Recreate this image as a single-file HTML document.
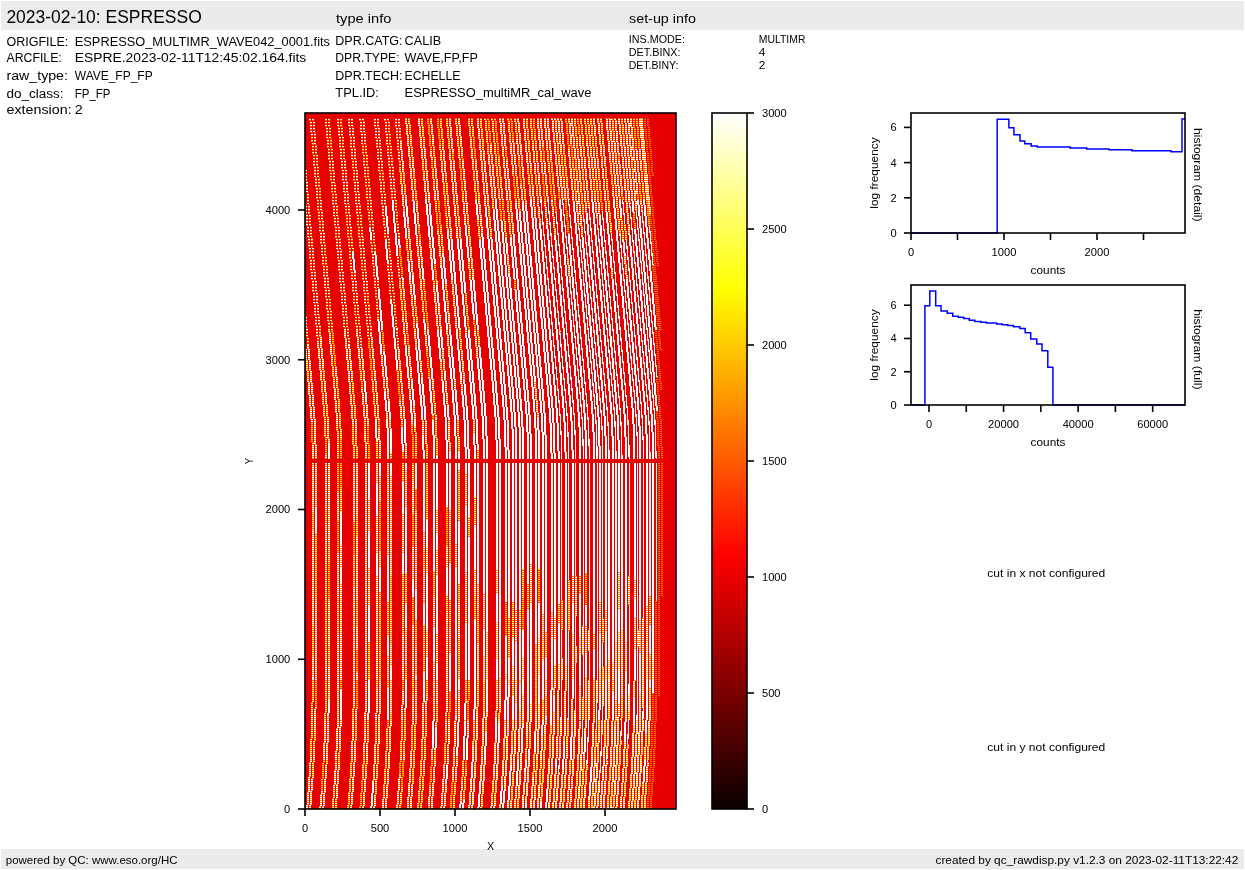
<!DOCTYPE html>
<html><head><meta charset="utf-8"><style>
html,body{margin:0;padding:0;background:#fff;}
body{width:1245px;height:870px;overflow:hidden;}
svg{display:block;will-change:transform;}
text{font-family:"Liberation Sans",sans-serif;}
</style></head><body>
<svg width="1245" height="870" viewBox="0 0 1245 870">
<rect x="0" y="0" width="1245" height="870" fill="#fff"/>
<rect x="1" y="1" width="1243" height="29" fill="#ebebeb"/>
<rect x="1" y="849" width="1243" height="20" fill="#ebebeb"/>
<text x="6.40" y="23.20" font-size="17.50" textLength="195.36" lengthAdjust="spacingAndGlyphs" fill="#000">2023-02-10: ESPRESSO</text>
<text x="336.00" y="22.60" font-size="13.12" textLength="55.34" lengthAdjust="spacingAndGlyphs" fill="#000">type info</text>
<text x="629.00" y="22.60" font-size="13.12" textLength="66.89" lengthAdjust="spacingAndGlyphs" fill="#000">set-up info</text>
<text x="6.50" y="45.90" font-size="13.12" textLength="61.85" lengthAdjust="spacingAndGlyphs" fill="#000">ORIGFILE:</text>
<text x="74.80" y="45.90" font-size="13.12" textLength="255.19" lengthAdjust="spacingAndGlyphs" fill="#000">ESPRESSO_MULTIMR_WAVE042_0001.fits</text>
<text x="6.50" y="61.70" font-size="13.12" textLength="55.29" lengthAdjust="spacingAndGlyphs" fill="#000">ARCFILE:</text>
<text x="74.80" y="61.70" font-size="13.12" textLength="231.44" lengthAdjust="spacingAndGlyphs" fill="#000">ESPRE.2023-02-11T12:45:02.164.fits</text>
<text x="6.50" y="80.10" font-size="13.12" textLength="61.41" lengthAdjust="spacingAndGlyphs" fill="#000">raw_type:</text>
<text x="74.80" y="80.10" font-size="13.12" textLength="77.83" lengthAdjust="spacingAndGlyphs" fill="#000">WAVE_FP_FP</text>
<text x="6.50" y="97.90" font-size="13.12" textLength="57.07" lengthAdjust="spacingAndGlyphs" fill="#000">do_class:</text>
<text x="74.80" y="97.90" font-size="13.12" textLength="35.70" lengthAdjust="spacingAndGlyphs" fill="#000">FP_FP</text>
<text x="6.50" y="113.80" font-size="13.12" textLength="65.15" lengthAdjust="spacingAndGlyphs" fill="#000">extension:</text>
<text x="74.80" y="113.80" font-size="13.12" textLength="7.95" lengthAdjust="spacingAndGlyphs" fill="#000">2</text>
<text x="335.30" y="44.90" font-size="13.12" textLength="67.21" lengthAdjust="spacingAndGlyphs" fill="#000">DPR.CATG:</text>
<text x="404.60" y="44.90" font-size="13.12" textLength="36.51" lengthAdjust="spacingAndGlyphs" fill="#000">CALIB</text>
<text x="335.30" y="61.60" font-size="13.12" textLength="64.29" lengthAdjust="spacingAndGlyphs" fill="#000">DPR.TYPE:</text>
<text x="404.60" y="61.60" font-size="13.12" textLength="73.28" lengthAdjust="spacingAndGlyphs" fill="#000">WAVE,FP,FP</text>
<text x="335.30" y="79.70" font-size="13.12" textLength="67.25" lengthAdjust="spacingAndGlyphs" fill="#000">DPR.TECH:</text>
<text x="404.60" y="79.70" font-size="13.12" textLength="55.75" lengthAdjust="spacingAndGlyphs" fill="#000">ECHELLE</text>
<text x="335.30" y="96.80" font-size="13.12" textLength="43.63" lengthAdjust="spacingAndGlyphs" fill="#000">TPL.ID:</text>
<text x="404.60" y="96.80" font-size="13.12" textLength="186.81" lengthAdjust="spacingAndGlyphs" fill="#000">ESPRESSO_multiMR_cal_wave</text>
<text x="628.80" y="42.80" font-size="10.94" textLength="56.11" lengthAdjust="spacingAndGlyphs" fill="#000">INS.MODE:</text>
<text x="758.80" y="42.80" font-size="10.94" textLength="46.66" lengthAdjust="spacingAndGlyphs" fill="#000">MULTIMR</text>
<text x="628.80" y="56.10" font-size="10.94" textLength="51.71" lengthAdjust="spacingAndGlyphs" fill="#000">DET.BINX:</text>
<text x="758.80" y="56.10" font-size="10.94" textLength="6.63" lengthAdjust="spacingAndGlyphs" fill="#000">4</text>
<text x="628.80" y="68.90" font-size="10.94" textLength="49.56" lengthAdjust="spacingAndGlyphs" fill="#000">DET.BINY:</text>
<text x="758.80" y="68.90" font-size="10.94" textLength="6.63" lengthAdjust="spacingAndGlyphs" fill="#000">2</text>
<text x="5.80" y="864.20" font-size="10.94" textLength="171.69" lengthAdjust="spacingAndGlyphs" fill="#000">powered by QC: www.eso.org/HC</text>
<text x="935.50" y="864.20" font-size="10.94" textLength="302.80" lengthAdjust="spacingAndGlyphs" fill="#000">created by qc_rawdisp.py v1.2.3 on 2023-02-11T13:22:42</text>
<defs><clipPath id="imclip"><rect x="305" y="113" width="371" height="696"/></clipPath></defs>
<g clip-path="url(#imclip)">
<rect x="305" y="113" width="371" height="696" fill="#e60000"/>
<defs><pattern id="dw" x="0" y="113" width="4" height="2" patternUnits="userSpaceOnUse"><rect x="0" y="0" width="4" height="1" fill="#ffffff"/><rect x="0" y="1" width="4" height="1" fill="#ff8c00"/></pattern><pattern id="dy" x="0" y="113" width="4" height="2" patternUnits="userSpaceOnUse"><rect x="0" y="0" width="4" height="1" fill="#ffff60"/><rect x="0" y="1" width="4" height="1" fill="#ff6000"/></pattern><pattern id="dr" x="0" y="113" width="4" height="2" patternUnits="userSpaceOnUse"><rect x="0" y="0" width="4" height="1" fill="#ffd000"/><rect x="0" y="1" width="4" height="1" fill="#ff4000"/></pattern><pattern id="df" x="0" y="113" width="4" height="2" patternUnits="userSpaceOnUse"><rect x="0" y="0" width="4" height="1" fill="#ff7000"/><rect x="0" y="1" width="4" height="1" fill="#ea1000"/></pattern><pattern id="tw" x="0" y="113" width="4" height="3" patternUnits="userSpaceOnUse"><rect x="0" y="0" width="4" height="1" fill="#ffffff"/><rect x="0" y="1" width="4" height="1" fill="#ff6000"/><rect x="0" y="2" width="4" height="1" fill="#f22000"/></pattern><pattern id="ty" x="0" y="113" width="4" height="3" patternUnits="userSpaceOnUse"><rect x="0" y="0" width="4" height="1" fill="#ffff70"/><rect x="0" y="1" width="4" height="1" fill="#ff5000"/><rect x="0" y="2" width="4" height="1" fill="#f01800"/></pattern><pattern id="db" x="0" y="113" width="4" height="2" patternUnits="userSpaceOnUse"><rect x="0" y="0" width="4" height="1" fill="#ffffff"/><rect x="0" y="1" width="4" height="1" fill="#ffc020"/></pattern><pattern id="dby" x="0" y="113" width="4" height="2" patternUnits="userSpaceOnUse"><rect x="0" y="0" width="4" height="1" fill="#ffff80"/><rect x="0" y="1" width="4" height="1" fill="#ff9000"/></pattern></defs>
<g shape-rendering="crispEdges">
<path d="M270.22,118.0 272.22,118.0 274.56,144.0 272.56,144.0z" fill="url(#tw)"/>
<path d="M272.56,144.0 274.56,144.0 276.00,160.0 274.00,160.0z" fill="url(#ty)"/>
<path d="M274.02,160.2 276.02,160.2 279.24,196.1 277.24,196.1z" fill="url(#tw)"/>
<path d="M277.25,196.1 279.25,196.1 279.60,200.0 277.60,200.0z" fill="url(#tw)"/>
<path d="M277.60,200.0 279.60,200.0 281.33,219.2 279.33,219.2z" fill="url(#tw)"/>
<path d="M279.33,219.2 281.33,219.2 283.20,240.0 281.20,240.0z" fill="url(#tw)"/>
<path d="M281.20,240.0 283.20,240.0 283.56,244.1 281.56,244.1z" fill="url(#ty)"/>
<path d="M281.57,244.1 283.57,244.1 285.42,264.7 283.42,264.7z" fill="url(#ty)"/>
<path d="M283.42,264.7 285.42,264.7 286.80,280.0 284.80,280.0z" fill="url(#ty)"/>
<path d="M284.80,280.0 286.80,280.0 288.09,294.3 286.09,294.3z" fill="url(#ty)"/>
<path d="M286.09,294.3 288.09,294.3 289.87,314.2 287.87,314.2z" fill="url(#tw)"/>
<path d="M287.88,314.2 289.88,314.2 291.30,330.0 289.30,330.0z" fill="url(#tw)"/>
<path d="M289.30,330.0 291.30,330.0 291.58,333.1 289.58,333.1z" fill="url(#tw)"/>
<path d="M289.58,333.1 291.58,333.1 293.96,359.5 291.96,359.5z" fill="url(#dr)"/>
<path d="M291.96,359.5 293.96,359.5 295.80,380.0 293.80,380.0z" fill="url(#dw)"/>
<path d="M293.80,380.0 295.80,380.0 296.61,389.0 294.61,389.0z" fill="url(#dw)"/>
<path d="M294.61,389.0 296.61,389.0 298.37,409.2 296.37,409.2z" fill="url(#dw)"/>
<path d="M296.37,409.2 298.37,409.2 299.10,420.0 297.10,420.0z" fill="url(#dy)"/>
<path d="M297.10,420.0 299.10,420.0 299.95,438.5 297.95,438.5z" fill="url(#dr)"/>
<path d="M297.95,438.5 299.95,438.5 300.30,460.0 298.30,460.0z" fill="url(#dy)"/>
<path d="M298.30,460.0 300.30,460.0 300.30,463.0 298.30,463.0z" fill="url(#dw)"/>
<path d="M298.30,463.0 300.30,463.0 300.30,502.0 298.30,502.0z" fill="url(#dy)"/>
<path d="M298.30,502.0 300.30,502.0 300.30,520.2 298.30,520.2z" fill="url(#dw)"/>
<path d="M298.30,520.2 300.30,520.2 300.30,559.7 298.30,559.7z" fill="url(#dw)"/>
<path d="M298.30,559.7 300.30,559.7 300.30,585.6 298.30,585.6z" fill="url(#dw)"/>
<path d="M298.30,585.6 300.30,585.6 300.30,613.7 298.30,613.7z" fill="url(#dw)"/>
<path d="M298.30,613.7 300.30,613.7 300.30,633.2 298.30,633.2z" fill="url(#dy)"/>
<path d="M298.30,633.2 300.30,633.2 300.30,666.5 298.30,666.5z" fill="url(#dw)"/>
<path d="M298.30,666.5 300.30,666.5 300.30,680.0 298.30,680.0z" fill="url(#dr)"/>
<path d="M298.30,680.0 300.30,680.0 300.28,687.0 298.28,687.0z" fill="url(#dw)"/>
<path d="M298.28,687.0 300.28,687.0 299.97,711.2 297.97,711.2z" fill="url(#dw)"/>
<path d="M297.97,711.2 299.97,711.2 299.76,720.0 297.76,720.0z" fill="url(#dw)"/>
<path d="M297.76,720.0 299.76,720.0 299.53,727.8 297.53,727.8z" fill="url(#dw)"/>
<path d="M297.52,727.8 299.52,727.8 298.54,752.0 296.54,752.0z" fill="url(#dy)"/>
<path d="M296.54,752.0 298.54,752.0 298.13,760.0 296.13,760.0z" fill="url(#dw)"/>
<path d="M296.13,760.0 298.13,760.0 296.11,791.2 294.11,791.2z" fill="url(#dw)"/>
<path d="M294.11,791.2 296.11,791.2 294.66,809.0 292.66,809.0z" fill="url(#dr)"/>
<path d="M273.22,118.0 275.22,118.0 277.56,144.0 275.56,144.0z" fill="url(#tw)"/>
<path d="M275.56,144.0 277.56,144.0 279.00,160.0 277.00,160.0z" fill="url(#tw)"/>
<path d="M277.00,160.0 279.00,160.0 279.52,165.8 277.52,165.8z" fill="url(#tw)"/>
<path d="M277.53,165.8 279.53,165.8 282.60,200.0 280.60,200.0z" fill="url(#ty)"/>
<path d="M280.60,200.0 282.60,200.0 282.86,202.9 280.86,202.9z" fill="url(#ty)"/>
<path d="M280.86,202.9 282.86,202.9 284.36,219.6 282.36,219.6z" fill="url(#tw)"/>
<path d="M282.36,219.6 284.36,219.6 286.20,240.0 284.20,240.0z" fill="url(#tw)"/>
<path d="M284.20,240.0 286.20,240.0 286.51,243.5 284.51,243.5z" fill="url(#tw)"/>
<path d="M284.52,243.5 286.52,243.5 288.81,269.0 286.81,269.0z" fill="url(#tw)"/>
<path d="M286.81,269.0 288.81,269.0 289.80,280.0 287.80,280.0z" fill="url(#ty)"/>
<path d="M287.80,280.0 289.80,280.0 290.63,289.3 288.63,289.3z" fill="url(#tw)"/>
<path d="M288.63,289.3 290.63,289.3 293.54,321.6 291.54,321.6z" fill="url(#tw)"/>
<path d="M291.54,321.6 293.54,321.6 294.30,330.0 292.30,330.0z" fill="url(#tw)"/>
<path d="M292.30,330.0 294.30,330.0 296.10,350.0 294.10,350.0z" fill="url(#dw)"/>
<path d="M294.10,350.0 296.10,350.0 298.08,372.0 296.08,372.0z" fill="url(#dr)"/>
<path d="M296.08,372.0 298.08,372.0 298.80,380.0 296.80,380.0z" fill="url(#dy)"/>
<path d="M296.80,380.0 298.80,380.0 300.41,397.9 298.41,397.9z" fill="url(#dw)"/>
<path d="M298.41,397.9 300.41,397.9 302.10,420.0 300.10,420.0z" fill="url(#dw)"/>
<path d="M300.10,420.0 302.10,420.0 302.65,430.5 300.65,430.5z" fill="url(#dw)"/>
<path d="M300.65,430.5 302.65,430.5 303.28,454.3 301.28,454.3z" fill="url(#dw)"/>
<path d="M301.28,454.3 303.28,454.3 303.30,460.0 301.30,460.0z" fill="url(#dw)"/>
<path d="M301.30,460.0 303.30,460.0 303.30,471.9 301.30,471.9z" fill="url(#dw)"/>
<path d="M301.30,471.9 303.30,471.9 303.30,499.0 301.30,499.0z" fill="url(#dw)"/>
<path d="M301.30,499.0 303.30,499.0 303.30,519.7 301.30,519.7z" fill="url(#dw)"/>
<path d="M301.30,519.7 303.30,519.7 303.30,550.6 301.30,550.6z" fill="url(#dw)"/>
<path d="M301.30,550.6 303.30,550.6 303.30,571.4 301.30,571.4z" fill="url(#dw)"/>
<path d="M301.30,571.4 303.30,571.4 303.30,590.7 301.30,590.7z" fill="url(#dr)"/>
<path d="M301.30,590.7 303.30,590.7 303.30,628.1 301.30,628.1z" fill="url(#dy)"/>
<path d="M301.30,628.1 303.30,628.1 303.30,652.0 301.30,652.0z" fill="url(#dw)"/>
<path d="M301.30,652.0 303.30,652.0 303.30,675.1 301.30,675.1z" fill="url(#dy)"/>
<path d="M301.30,675.1 303.30,675.1 303.30,680.0 301.30,680.0z" fill="url(#dw)"/>
<path d="M301.30,680.0 303.30,680.0 303.11,704.0 301.11,704.0z" fill="url(#dw)"/>
<path d="M301.10,704.0 303.10,704.0 302.76,720.0 300.76,720.0z" fill="url(#dw)"/>
<path d="M300.76,720.0 302.76,720.0 302.21,736.6 300.21,736.6z" fill="url(#dw)"/>
<path d="M300.21,736.6 302.21,736.6 301.13,760.0 299.13,760.0z" fill="url(#dw)"/>
<path d="M299.13,760.0 301.13,760.0 300.63,768.7 298.63,768.7z" fill="url(#dy)"/>
<path d="M298.63,768.7 300.63,768.7 298.10,803.9 296.10,803.9z" fill="url(#dy)"/>
<path d="M296.09,803.9 298.09,803.9 297.66,809.0 295.66,809.0z" fill="url(#dw)"/>
<path d="M283.72,118.0 285.72,118.0 288.18,145.3 286.18,145.3z" fill="url(#ty)"/>
<path d="M286.18,145.3 288.18,145.3 289.50,160.0 287.50,160.0z" fill="url(#tw)"/>
<path d="M287.50,160.0 289.50,160.0 289.71,162.4 287.71,162.4z" fill="url(#ty)"/>
<path d="M287.72,162.4 289.72,162.4 291.83,185.9 289.83,185.9z" fill="url(#tw)"/>
<path d="M289.83,185.9 291.83,185.9 293.10,200.0 291.10,200.0z" fill="url(#ty)"/>
<path d="M291.10,200.0 293.10,200.0 295.00,221.1 293.00,221.1z" fill="url(#tw)"/>
<path d="M293.00,221.1 295.00,221.1 296.70,240.0 294.70,240.0z" fill="url(#tw)"/>
<path d="M294.71,240.1 296.71,240.1 299.37,269.7 297.37,269.7z" fill="url(#tw)"/>
<path d="M297.37,269.7 299.37,269.7 300.30,280.0 298.30,280.0z" fill="url(#tw)"/>
<path d="M298.30,280.0 300.30,280.0 300.93,287.1 298.93,287.1z" fill="url(#tw)"/>
<path d="M298.94,287.1 300.94,287.1 302.61,305.7 300.61,305.7z" fill="url(#ty)"/>
<path d="M300.61,305.7 302.61,305.7 304.80,330.0 302.80,330.0z" fill="url(#tw)"/>
<path d="M302.80,330.0 304.80,330.0 306.11,344.6 304.11,344.6z" fill="url(#ty)"/>
<path d="M304.11,344.6 306.11,344.6 307.76,362.9 305.76,362.9z" fill="url(#dw)"/>
<path d="M305.76,362.9 307.76,362.9 309.30,380.0 307.30,380.0z" fill="url(#dy)"/>
<path d="M307.30,380.0 309.30,380.0 309.57,383.0 307.57,383.0z" fill="url(#dw)"/>
<path d="M307.57,383.0 309.57,383.0 312.60,420.0 310.60,420.0z" fill="url(#dw)"/>
<path d="M310.60,420.0 312.60,420.0 312.69,421.6 310.69,421.6z" fill="url(#dw)"/>
<path d="M310.69,421.6 312.69,421.6 313.63,445.0 311.63,445.0z" fill="url(#dr)"/>
<path d="M311.63,445.0 313.63,445.0 313.80,460.0 311.80,460.0z" fill="url(#dw)"/>
<path d="M311.80,460.0 313.80,460.0 313.80,466.2 311.80,466.2z" fill="url(#dy)"/>
<path d="M311.80,466.2 313.80,466.2 313.80,484.5 311.80,484.5z" fill="url(#dw)"/>
<path d="M311.80,484.5 313.80,484.5 313.80,512.5 311.80,512.5z" fill="url(#dw)"/>
<path d="M311.80,512.5 313.80,512.5 313.80,529.9 311.80,529.9z" fill="url(#dy)"/>
<path d="M311.80,529.9 313.80,529.9 313.80,551.2 311.80,551.2z" fill="url(#dw)"/>
<path d="M311.80,551.2 313.80,551.2 313.80,572.5 311.80,572.5z" fill="url(#dw)"/>
<path d="M311.80,572.5 313.80,572.5 313.80,606.4 311.80,606.4z" fill="url(#dw)"/>
<path d="M311.80,606.4 313.80,606.4 313.80,626.3 311.80,626.3z" fill="url(#dw)"/>
<path d="M311.80,626.3 313.80,626.3 313.80,656.4 311.80,656.4z" fill="url(#dy)"/>
<path d="M311.80,656.4 313.80,656.4 313.80,678.2 311.80,678.2z" fill="url(#dw)"/>
<path d="M311.80,678.2 313.80,678.2 313.80,680.0 311.80,680.0z" fill="#ffffff"/>
<path d="M311.80,680.0 313.80,680.0 313.31,718.1 311.31,718.1z" fill="url(#dy)"/>
<path d="M311.31,718.1 313.31,718.1 313.26,720.0 311.26,720.0z" fill="url(#dw)"/>
<path d="M311.26,720.0 313.26,720.0 311.75,757.9 309.75,757.9z" fill="url(#dy)"/>
<path d="M309.74,757.9 311.74,757.9 311.63,760.0 309.63,760.0z" fill="url(#dw)"/>
<path d="M309.63,760.0 311.63,760.0 309.24,796.0 307.24,796.0z" fill="url(#dw)"/>
<path d="M307.23,796.0 309.23,796.0 308.16,809.0 306.16,809.0z" fill="url(#dw)"/>
<path d="M286.72,118.0 288.72,118.0 291.56,149.5 289.56,149.5z" fill="url(#tw)"/>
<path d="M289.56,149.5 291.56,149.5 292.50,160.0 290.50,160.0z" fill="url(#tw)"/>
<path d="M290.50,160.0 292.50,160.0 294.57,183.0 292.57,183.0z" fill="url(#tw)"/>
<path d="M292.57,183.0 294.57,183.0 296.10,200.0 294.10,200.0z" fill="url(#ty)"/>
<path d="M294.10,200.0 296.10,200.0 297.76,218.4 295.76,218.4z" fill="url(#tw)"/>
<path d="M295.76,218.4 297.76,218.4 299.70,240.0 297.70,240.0z" fill="url(#tw)"/>
<path d="M297.70,240.0 299.70,240.0 300.43,248.1 298.43,248.1z" fill="url(#tw)"/>
<path d="M298.43,248.1 300.43,248.1 303.30,280.0 301.30,280.0z" fill="url(#tw)"/>
<path d="M301.30,280.0 303.30,280.0 304.01,287.9 302.01,287.9z" fill="url(#tw)"/>
<path d="M302.01,287.9 304.01,287.9 306.53,315.9 304.53,315.9z" fill="url(#ty)"/>
<path d="M304.54,315.9 306.54,315.9 307.80,330.0 305.80,330.0z" fill="url(#tw)"/>
<path d="M305.80,330.0 307.80,330.0 309.13,344.8 307.13,344.8z" fill="url(#ty)"/>
<path d="M307.14,344.8 309.14,344.8 312.00,376.6 310.00,376.6z" fill="url(#dw)"/>
<path d="M310.00,376.6 312.00,376.6 312.30,380.0 310.30,380.0z" fill="url(#dw)"/>
<path d="M310.30,380.0 312.30,380.0 315.34,415.9 313.34,415.9z" fill="url(#dw)"/>
<path d="M313.35,415.9 315.35,415.9 315.60,420.0 313.60,420.0z" fill="url(#dw)"/>
<path d="M313.60,420.0 315.60,420.0 316.71,448.8 314.71,448.8z" fill="url(#dw)"/>
<path d="M314.71,448.8 316.71,448.8 316.80,460.0 314.80,460.0z" fill="url(#dw)"/>
<path d="M314.80,460.0 316.80,460.0 316.80,486.8 314.80,486.8z" fill="url(#dw)"/>
<path d="M314.80,486.8 316.80,486.8 316.80,506.6 314.80,506.6z" fill="url(#dw)"/>
<path d="M314.80,506.6 316.80,506.6 316.80,532.7 314.80,532.7z" fill="#ffffff"/>
<path d="M314.80,532.7 316.80,532.7 316.80,565.6 314.80,565.6z" fill="url(#dy)"/>
<path d="M314.80,565.6 316.80,565.6 316.80,599.2 314.80,599.2z" fill="url(#dy)"/>
<path d="M314.80,599.2 316.80,599.2 316.80,635.1 314.80,635.1z" fill="url(#dw)"/>
<path d="M314.80,635.1 316.80,635.1 316.80,657.5 314.80,657.5z" fill="url(#dw)"/>
<path d="M314.80,657.5 316.80,657.5 316.80,680.0 314.80,680.0z" fill="url(#dw)"/>
<path d="M314.80,680.0 316.80,680.0 316.80,681.1 314.80,681.1z" fill="url(#dy)"/>
<path d="M314.80,681.1 316.80,681.1 316.55,707.0 314.55,707.0z" fill="url(#dr)"/>
<path d="M314.55,707.0 316.55,707.0 316.26,720.0 314.26,720.0z" fill="url(#dw)"/>
<path d="M314.26,720.0 316.26,720.0 315.87,732.4 313.87,732.4z" fill="url(#dw)"/>
<path d="M313.87,732.4 315.87,732.4 315.11,750.6 313.11,750.6z" fill="url(#dy)"/>
<path d="M313.11,750.6 315.11,750.6 314.63,760.0 312.63,760.0z" fill="url(#dw)"/>
<path d="M312.63,760.0 314.63,760.0 313.68,776.0 311.68,776.0z" fill="url(#dy)"/>
<path d="M311.68,776.0 313.68,776.0 311.30,807.4 309.30,807.4z" fill="url(#dw)"/>
<path d="M309.30,807.4 311.30,807.4 311.16,809.0 309.16,809.0z" fill="url(#dw)"/>
<path d="M296.82,118.0 298.82,118.0 302.10,154.5 300.10,154.5z" fill="url(#tw)"/>
<path d="M300.10,154.5 302.10,154.5 302.60,160.0 300.60,160.0z" fill="url(#tw)"/>
<path d="M300.60,160.0 302.60,160.0 305.54,192.7 303.54,192.7z" fill="url(#tw)"/>
<path d="M303.54,192.7 305.54,192.7 306.20,200.0 304.20,200.0z" fill="url(#tw)"/>
<path d="M304.20,200.0 306.20,200.0 307.08,209.8 305.08,209.8z" fill="url(#tw)"/>
<path d="M305.09,209.8 307.09,209.8 309.80,240.0 307.80,240.0z" fill="url(#tw)"/>
<path d="M307.80,240.0 309.80,240.0 310.55,248.3 308.55,248.3z" fill="url(#ty)"/>
<path d="M308.55,248.3 310.55,248.3 313.40,280.0 311.40,280.0z" fill="url(#tw)"/>
<path d="M311.40,280.0 313.40,280.0 313.96,286.2 311.96,286.2z" fill="url(#tw)"/>
<path d="M311.96,286.2 313.96,286.2 317.11,321.2 315.11,321.2z" fill="url(#tw)"/>
<path d="M315.11,321.2 317.11,321.2 317.90,330.0 315.90,330.0z" fill="url(#tw)"/>
<path d="M315.90,330.0 317.90,330.0 319.05,342.8 317.05,342.8z" fill="url(#tw)"/>
<path d="M317.06,342.8 319.06,342.8 322.40,380.0 320.40,380.0z" fill="url(#dw)"/>
<path d="M320.40,380.0 322.40,380.0 322.58,382.1 320.58,382.1z" fill="url(#dy)"/>
<path d="M320.59,382.1 322.59,382.1 325.54,417.5 323.54,417.5z" fill="url(#dy)"/>
<path d="M323.54,417.5 325.54,417.5 325.70,420.0 323.70,420.0z" fill="url(#dy)"/>
<path d="M323.70,420.0 325.70,420.0 326.50,436.8 324.50,436.8z" fill="url(#dy)"/>
<path d="M324.50,436.8 326.50,436.8 326.87,453.7 324.87,453.7z" fill="url(#dr)"/>
<path d="M324.87,453.7 326.87,453.7 326.90,460.0 324.90,460.0z" fill="url(#dw)"/>
<path d="M324.90,460.0 326.90,460.0 326.90,478.7 324.90,478.7z" fill="url(#dw)"/>
<path d="M324.90,478.7 326.90,478.7 326.90,508.6 324.90,508.6z" fill="url(#dw)"/>
<path d="M324.90,508.6 326.90,508.6 326.90,525.2 324.90,525.2z" fill="url(#dy)"/>
<path d="M324.90,525.2 326.90,525.2 326.90,564.1 324.90,564.1z" fill="url(#dw)"/>
<path d="M324.90,564.1 326.90,564.1 326.90,596.3 324.90,596.3z" fill="url(#dy)"/>
<path d="M324.90,596.3 326.90,596.3 326.90,624.7 324.90,624.7z" fill="url(#dy)"/>
<path d="M324.90,624.7 326.90,624.7 326.90,652.5 324.90,652.5z" fill="url(#dy)"/>
<path d="M324.90,652.5 326.90,652.5 326.90,671.0 324.90,671.0z" fill="url(#dw)"/>
<path d="M324.90,671.0 326.90,671.0 326.90,680.0 324.90,680.0z" fill="url(#dw)"/>
<path d="M324.90,680.0 326.90,680.0 326.69,705.0 324.69,705.0z" fill="url(#dy)"/>
<path d="M324.69,705.0 326.69,705.0 326.36,720.0 324.36,720.0z" fill="url(#dy)"/>
<path d="M324.36,720.0 326.36,720.0 325.73,738.8 323.73,738.8z" fill="url(#dw)"/>
<path d="M323.73,738.8 325.73,738.8 324.98,755.3 322.98,755.3z" fill="url(#dw)"/>
<path d="M322.98,755.3 324.98,755.3 324.73,760.0 322.73,760.0z" fill="url(#dw)"/>
<path d="M322.73,760.0 324.73,760.0 322.75,790.7 320.75,790.7z" fill="url(#dr)"/>
<path d="M320.75,790.7 322.75,790.7 321.26,809.0 319.26,809.0z" fill="url(#dw)"/>
<path d="M299.82,118.0 301.82,118.0 305.30,156.7 303.30,156.7z" fill="url(#tw)"/>
<path d="M303.30,156.7 305.30,156.7 305.60,160.0 303.60,160.0z" fill="url(#tw)"/>
<path d="M303.60,160.0 305.60,160.0 308.46,191.8 306.46,191.8z" fill="url(#tw)"/>
<path d="M306.46,191.8 308.46,191.8 309.20,200.0 307.20,200.0z" fill="url(#ty)"/>
<path d="M307.20,200.0 309.20,200.0 311.65,227.3 309.65,227.3z" fill="url(#tw)"/>
<path d="M309.66,227.3 311.66,227.3 312.80,240.0 310.80,240.0z" fill="url(#tw)"/>
<path d="M310.80,240.0 312.80,240.0 314.83,262.6 312.83,262.6z" fill="url(#tw)"/>
<path d="M312.83,262.6 314.83,262.6 316.40,280.0 314.40,280.0z" fill="url(#tw)"/>
<path d="M314.40,280.0 316.40,280.0 316.72,283.6 314.72,283.6z" fill="url(#tw)"/>
<path d="M314.72,283.6 316.72,283.6 318.45,302.8 316.45,302.8z" fill="url(#tw)"/>
<path d="M316.45,302.8 318.45,302.8 320.90,330.0 318.90,330.0z" fill="url(#tw)"/>
<path d="M318.90,330.0 320.90,330.0 321.27,334.2 319.27,334.2z" fill="url(#tw)"/>
<path d="M319.28,334.2 321.28,334.2 324.50,370.0 322.50,370.0z" fill="url(#dw)"/>
<path d="M322.50,370.0 324.50,370.0 325.40,380.0 323.40,380.0z" fill="url(#dy)"/>
<path d="M323.40,380.0 325.40,380.0 326.16,388.5 324.16,388.5z" fill="url(#dw)"/>
<path d="M324.16,388.5 326.16,388.5 327.62,404.8 325.62,404.8z" fill="url(#dw)"/>
<path d="M325.62,404.8 327.62,404.8 328.70,420.0 326.70,420.0z" fill="url(#dy)"/>
<path d="M326.70,420.0 328.70,420.0 329.70,443.6 327.70,443.6z" fill="url(#dw)"/>
<path d="M327.70,443.6 329.70,443.6 329.90,460.0 327.90,460.0z" fill="#ffffff"/>
<path d="M327.90,460.0 329.90,460.0 329.90,481.4 327.90,481.4z" fill="url(#dw)"/>
<path d="M327.90,481.4 329.90,481.4 329.90,503.7 327.90,503.7z" fill="url(#dw)"/>
<path d="M327.90,503.7 329.90,503.7 329.90,539.6 327.90,539.6z" fill="url(#dw)"/>
<path d="M327.90,539.6 329.90,539.6 329.90,562.7 327.90,562.7z" fill="url(#dy)"/>
<path d="M327.90,562.7 329.90,562.7 329.90,598.9 327.90,598.9z" fill="url(#dr)"/>
<path d="M327.90,598.9 329.90,598.9 329.90,615.2 327.90,615.2z" fill="url(#dw)"/>
<path d="M327.90,615.2 329.90,615.2 329.90,645.8 327.90,645.8z" fill="url(#dw)"/>
<path d="M327.90,645.8 329.90,645.8 329.90,667.2 327.90,667.2z" fill="url(#dy)"/>
<path d="M327.90,667.2 329.90,667.2 329.90,680.0 327.90,680.0z" fill="url(#dw)"/>
<path d="M327.90,680.0 329.90,680.0 329.78,698.5 327.78,698.5z" fill="url(#dw)"/>
<path d="M327.78,698.5 329.78,698.5 329.48,715.1 327.48,715.1z" fill="#ffffff"/>
<path d="M327.48,715.1 329.48,715.1 329.36,720.0 327.36,720.0z" fill="url(#dw)"/>
<path d="M327.36,720.0 329.36,720.0 328.39,746.6 326.39,746.6z" fill="url(#dw)"/>
<path d="M326.39,746.6 328.39,746.6 327.73,760.0 325.73,760.0z" fill="url(#dw)"/>
<path d="M325.73,760.0 327.73,760.0 327.45,765.0 325.45,765.0z" fill="url(#dy)"/>
<path d="M325.45,765.0 327.45,765.0 325.67,791.7 323.67,791.7z" fill="url(#dw)"/>
<path d="M323.67,791.7 325.67,791.7 324.26,809.0 322.26,809.0z" fill="url(#dw)"/>
<path d="M309.22,118.0 311.22,118.0 312.83,135.9 310.83,135.9z" fill="url(#tw)"/>
<path d="M310.83,135.9 312.83,135.9 315.00,160.0 313.00,160.0z" fill="url(#ty)"/>
<path d="M313.00,160.0 315.00,160.0 315.96,170.7 313.96,170.7z" fill="url(#tw)"/>
<path d="M313.96,170.7 315.96,170.7 318.46,198.4 316.46,198.4z" fill="url(#tw)"/>
<path d="M316.46,198.4 318.46,198.4 318.60,200.0 316.60,200.0z" fill="url(#tw)"/>
<path d="M316.60,200.0 318.60,200.0 321.48,232.0 319.48,232.0z" fill="url(#ty)"/>
<path d="M319.48,232.0 321.48,232.0 322.20,240.0 320.20,240.0z" fill="url(#tw)"/>
<path d="M320.20,240.0 322.20,240.0 324.15,261.7 322.15,261.7z" fill="url(#tw)"/>
<path d="M322.16,261.7 324.16,261.7 325.79,279.9 323.79,279.9z" fill="url(#tw)"/>
<path d="M323.80,280.0 325.80,280.0 327.81,302.3 325.81,302.3z" fill="url(#tw)"/>
<path d="M325.81,302.3 327.81,302.3 329.94,326.0 327.94,326.0z" fill="url(#tw)"/>
<path d="M327.94,326.0 329.94,326.0 330.30,330.0 328.30,330.0z" fill="url(#ty)"/>
<path d="M328.30,330.0 330.30,330.0 333.07,360.8 331.07,360.8z" fill="url(#dw)"/>
<path d="M331.07,360.8 333.07,360.8 334.80,380.0 332.80,380.0z" fill="url(#dy)"/>
<path d="M332.80,380.0 334.80,380.0 335.26,385.1 333.26,385.1z" fill="url(#dy)"/>
<path d="M333.26,385.1 335.26,385.1 338.10,420.0 336.10,420.0z" fill="url(#dw)"/>
<path d="M336.10,420.0 338.10,420.0 338.34,424.3 336.34,424.3z" fill="url(#dw)"/>
<path d="M336.34,424.3 338.34,424.3 339.30,459.4 337.30,459.4z" fill="url(#dy)"/>
<path d="M337.30,459.4 339.30,459.4 339.30,460.0 337.30,460.0z" fill="url(#dr)"/>
<path d="M337.30,460.0 339.30,460.0 339.30,492.0 337.30,492.0z" fill="url(#dr)"/>
<path d="M337.30,492.0 339.30,492.0 339.30,520.7 337.30,520.7z" fill="url(#dw)"/>
<path d="M337.30,520.7 339.30,520.7 339.30,553.4 337.30,553.4z" fill="url(#dr)"/>
<path d="M337.30,553.4 339.30,553.4 339.30,577.5 337.30,577.5z" fill="url(#dw)"/>
<path d="M337.30,577.5 339.30,577.5 339.30,595.9 337.30,595.9z" fill="url(#dw)"/>
<path d="M337.30,595.9 339.30,595.9 339.30,632.5 337.30,632.5z" fill="url(#dy)"/>
<path d="M337.30,632.5 339.30,632.5 339.30,659.6 337.30,659.6z" fill="url(#dw)"/>
<path d="M337.30,659.6 339.30,659.6 339.30,680.0 337.30,680.0z" fill="url(#dw)"/>
<path d="M337.30,680.0 339.30,680.0 339.18,698.6 337.18,698.6z" fill="url(#dw)"/>
<path d="M337.18,698.6 339.18,698.6 338.76,720.0 336.76,720.0z" fill="url(#dw)"/>
<path d="M336.76,720.0 338.76,720.0 338.38,732.1 336.38,732.1z" fill="url(#dw)"/>
<path d="M336.38,732.1 338.38,732.1 337.13,760.0 335.13,760.0z" fill="url(#dw)"/>
<path d="M335.13,760.0 337.13,760.0 337.02,761.9 335.02,761.9z" fill="url(#dr)"/>
<path d="M335.02,761.9 337.02,761.9 335.33,788.2 333.33,788.2z" fill="url(#dw)"/>
<path d="M333.33,788.2 335.33,788.2 333.66,809.0 331.66,809.0z" fill="url(#dy)"/>
<path d="M312.22,118.0 314.22,118.0 316.75,146.2 314.75,146.2z" fill="url(#tw)"/>
<path d="M314.75,146.2 316.75,146.2 318.00,160.0 316.00,160.0z" fill="url(#tw)"/>
<path d="M316.00,160.0 318.00,160.0 319.42,175.8 317.42,175.8z" fill="url(#ty)"/>
<path d="M317.42,175.8 319.42,175.8 321.60,200.0 319.60,200.0z" fill="url(#ty)"/>
<path d="M319.60,200.0 321.60,200.0 322.51,210.1 320.51,210.1z" fill="url(#tw)"/>
<path d="M320.51,210.1 322.51,210.1 325.20,240.0 323.20,240.0z" fill="url(#tw)"/>
<path d="M323.20,240.0 325.20,240.0 325.57,244.1 323.57,244.1z" fill="url(#tw)"/>
<path d="M323.57,244.1 325.57,244.1 327.58,266.5 325.58,266.5z" fill="url(#ty)"/>
<path d="M325.59,266.5 327.59,266.5 328.80,280.0 326.80,280.0z" fill="url(#tw)"/>
<path d="M326.80,280.0 328.80,280.0 330.08,294.2 328.08,294.2z" fill="url(#tw)"/>
<path d="M328.08,294.2 330.08,294.2 333.27,329.6 331.27,329.6z" fill="url(#ty)"/>
<path d="M331.30,330.0 333.30,330.0 336.61,366.8 334.61,366.8z" fill="url(#dr)"/>
<path d="M334.62,366.8 336.62,366.8 337.80,380.0 335.80,380.0z" fill="url(#dw)"/>
<path d="M335.80,380.0 337.80,380.0 339.92,403.6 337.92,403.6z" fill="url(#dy)"/>
<path d="M337.92,403.6 339.92,403.6 341.10,420.0 339.10,420.0z" fill="url(#dy)"/>
<path d="M339.10,420.0 341.10,420.0 341.96,438.8 339.96,438.8z" fill="url(#dy)"/>
<path d="M339.96,438.8 341.96,438.8 342.30,460.0 340.30,460.0z" fill="url(#dr)"/>
<path d="M340.30,460.0 342.30,460.0 342.30,470.6 340.30,470.6z" fill="url(#dr)"/>
<path d="M340.30,470.6 342.30,470.6 342.30,487.2 340.30,487.2z" fill="url(#dr)"/>
<path d="M340.30,487.2 342.30,487.2 342.30,512.0 340.30,512.0z" fill="url(#dy)"/>
<path d="M340.30,512.0 342.30,512.0 342.30,545.0 340.30,545.0z" fill="#ffffff"/>
<path d="M340.30,545.0 342.30,545.0 342.30,566.9 340.30,566.9z" fill="url(#dw)"/>
<path d="M340.30,566.9 342.30,566.9 342.30,584.4 340.30,584.4z" fill="#ffffff"/>
<path d="M340.30,584.4 342.30,584.4 342.30,614.6 340.30,614.6z" fill="url(#dw)"/>
<path d="M340.30,614.6 342.30,614.6 342.30,649.1 340.30,649.1z" fill="url(#dw)"/>
<path d="M340.30,649.1 342.30,649.1 342.30,680.0 340.30,680.0z" fill="url(#dw)"/>
<path d="M340.30,680.0 342.30,680.0 342.27,689.0 340.27,689.0z" fill="url(#dr)"/>
<path d="M340.27,689.0 342.27,689.0 341.76,720.0 339.76,720.0z" fill="#ffffff"/>
<path d="M339.76,720.0 341.76,720.0 341.69,722.5 339.69,722.5z" fill="url(#dw)"/>
<path d="M339.69,722.5 341.69,722.5 340.68,749.2 338.68,749.2z" fill="url(#dw)"/>
<path d="M338.67,749.2 340.67,749.2 340.13,760.0 338.13,760.0z" fill="url(#dy)"/>
<path d="M338.13,760.0 340.13,760.0 339.79,766.0 337.79,766.0z" fill="url(#dy)"/>
<path d="M337.79,766.0 339.79,766.0 337.55,798.3 335.55,798.3z" fill="url(#dw)"/>
<path d="M335.55,798.3 337.55,798.3 336.66,809.0 334.66,809.0z" fill="url(#dy)"/>
<path d="M324.72,118.0 326.72,118.0 328.40,136.6 326.40,136.6z" fill="url(#tw)"/>
<path d="M326.40,136.6 328.40,136.6 330.50,160.0 328.50,160.0z" fill="url(#tw)"/>
<path d="M328.50,160.0 330.50,160.0 331.06,166.2 329.06,166.2z" fill="url(#tw)"/>
<path d="M329.06,166.2 331.06,166.2 333.41,192.3 331.41,192.3z" fill="url(#ty)"/>
<path d="M331.41,192.3 333.41,192.3 334.10,200.0 332.10,200.0z" fill="url(#ty)"/>
<path d="M332.10,200.0 334.10,200.0 336.31,224.5 334.31,224.5z" fill="url(#tw)"/>
<path d="M334.31,224.5 336.31,224.5 337.70,240.0 335.70,240.0z" fill="url(#ty)"/>
<path d="M335.70,240.0 337.70,240.0 339.60,261.1 337.60,261.1z" fill="url(#tw)"/>
<path d="M337.60,261.1 339.60,261.1 341.30,280.0 339.30,280.0z" fill="url(#tw)"/>
<path d="M339.30,280.0 341.30,280.0 342.25,290.5 340.25,290.5z" fill="url(#tw)"/>
<path d="M340.25,290.5 342.25,290.5 345.70,328.9 343.70,328.9z" fill="url(#tw)"/>
<path d="M343.70,328.9 345.70,328.9 345.80,330.0 343.80,330.0z" fill="url(#tw)"/>
<path d="M343.80,330.0 345.80,330.0 349.08,366.4 347.08,366.4z" fill="url(#dw)"/>
<path d="M347.08,366.4 349.08,366.4 350.30,380.0 348.30,380.0z" fill="url(#dw)"/>
<path d="M348.30,380.0 350.30,380.0 350.87,386.3 348.87,386.3z" fill="url(#dw)"/>
<path d="M348.87,386.3 350.87,386.3 352.42,403.7 350.42,403.7z" fill="url(#dw)"/>
<path d="M350.42,403.7 352.42,403.7 353.60,420.0 351.60,420.0z" fill="url(#dw)"/>
<path d="M351.60,420.0 353.60,420.0 353.85,424.5 351.85,424.5z" fill="url(#dw)"/>
<path d="M351.85,424.5 353.85,424.5 354.76,452.6 352.76,452.6z" fill="url(#dy)"/>
<path d="M352.76,452.6 354.76,452.6 354.80,460.0 352.80,460.0z" fill="url(#dy)"/>
<path d="M352.80,460.0 354.80,460.0 354.80,485.3 352.80,485.3z" fill="url(#dw)"/>
<path d="M352.80,485.3 354.80,485.3 354.80,521.8 352.80,521.8z" fill="url(#dw)"/>
<path d="M352.80,521.8 354.80,521.8 354.80,555.4 352.80,555.4z" fill="url(#dr)"/>
<path d="M352.80,555.4 354.80,555.4 354.80,587.1 352.80,587.1z" fill="url(#dy)"/>
<path d="M352.80,587.1 354.80,587.1 354.80,617.5 352.80,617.5z" fill="url(#dw)"/>
<path d="M352.80,617.5 354.80,617.5 354.80,649.2 352.80,649.2z" fill="url(#dw)"/>
<path d="M352.80,649.2 354.80,649.2 354.80,674.8 352.80,674.8z" fill="url(#dw)"/>
<path d="M352.80,674.8 354.80,674.8 354.80,680.0 352.80,680.0z" fill="url(#dw)"/>
<path d="M352.80,680.0 354.80,680.0 354.56,706.7 352.56,706.7z" fill="url(#dw)"/>
<path d="M352.56,706.7 354.56,706.7 354.26,720.0 352.26,720.0z" fill="url(#dy)"/>
<path d="M352.26,720.0 354.26,720.0 353.46,742.8 351.46,742.8z" fill="url(#dw)"/>
<path d="M351.46,742.8 353.46,742.8 352.63,760.0 350.63,760.0z" fill="url(#dw)"/>
<path d="M350.63,760.0 352.63,760.0 351.45,779.3 349.45,779.3z" fill="url(#dy)"/>
<path d="M349.45,779.3 351.45,779.3 349.16,809.0 347.16,809.0z" fill="url(#dy)"/>
<path d="M327.72,118.0 329.72,118.0 331.16,134.0 329.16,134.0z" fill="url(#ty)"/>
<path d="M329.16,134.0 331.16,134.0 333.50,160.0 331.50,160.0z" fill="url(#ty)"/>
<path d="M331.50,160.0 333.50,160.0 334.09,166.5 332.09,166.5z" fill="url(#tw)"/>
<path d="M332.09,166.5 334.09,166.5 336.06,188.5 334.06,188.5z" fill="url(#tw)"/>
<path d="M334.06,188.5 336.06,188.5 337.10,200.0 335.10,200.0z" fill="url(#ty)"/>
<path d="M335.10,200.0 337.10,200.0 338.89,219.9 336.89,219.9z" fill="url(#ty)"/>
<path d="M336.90,219.9 338.90,219.9 340.70,240.0 338.70,240.0z" fill="url(#tw)"/>
<path d="M338.70,240.0 340.70,240.0 341.98,254.2 339.98,254.2z" fill="url(#tw)"/>
<path d="M339.98,254.2 341.98,254.2 344.30,280.0 342.30,280.0z" fill="url(#tw)"/>
<path d="M342.30,280.0 344.30,280.0 344.83,285.9 342.83,285.9z" fill="url(#tw)"/>
<path d="M342.83,285.9 344.83,285.9 346.43,303.7 344.43,303.7z" fill="url(#tw)"/>
<path d="M344.43,303.7 346.43,303.7 347.91,320.2 345.91,320.2z" fill="url(#tw)"/>
<path d="M345.92,320.2 347.92,320.2 348.80,330.0 346.80,330.0z" fill="url(#ty)"/>
<path d="M346.80,330.0 348.80,330.0 350.18,345.4 348.18,345.4z" fill="url(#tw)"/>
<path d="M348.18,345.4 350.18,345.4 353.30,380.0 351.30,380.0z" fill="url(#dw)"/>
<path d="M351.30,380.0 353.30,380.0 353.58,383.1 351.58,383.1z" fill="url(#dy)"/>
<path d="M351.58,383.1 353.58,383.1 355.94,410.3 353.94,410.3z" fill="url(#dy)"/>
<path d="M353.95,410.3 355.95,410.3 356.60,420.0 354.60,420.0z" fill="url(#dy)"/>
<path d="M354.60,420.0 356.60,420.0 357.24,432.6 355.24,432.6z" fill="url(#dw)"/>
<path d="M355.24,432.6 357.24,432.6 357.80,459.9 355.80,459.9z" fill="url(#dy)"/>
<path d="M355.80,460.0 357.80,460.0 357.80,495.6 355.80,495.6z" fill="url(#dw)"/>
<path d="M355.80,495.6 357.80,495.6 357.80,516.5 355.80,516.5z" fill="url(#dw)"/>
<path d="M355.80,516.5 357.80,516.5 357.80,535.5 355.80,535.5z" fill="url(#dy)"/>
<path d="M355.80,535.5 357.80,535.5 357.80,573.5 355.80,573.5z" fill="url(#dw)"/>
<path d="M355.80,573.5 357.80,573.5 357.80,599.7 355.80,599.7z" fill="url(#dw)"/>
<path d="M355.80,599.7 357.80,599.7 357.80,626.4 355.80,626.4z" fill="url(#dy)"/>
<path d="M355.80,626.4 357.80,626.4 357.80,649.8 355.80,649.8z" fill="url(#dw)"/>
<path d="M355.80,649.8 357.80,649.8 357.80,671.7 355.80,671.7z" fill="url(#dr)"/>
<path d="M355.80,671.7 357.80,671.7 357.80,680.0 355.80,680.0z" fill="url(#dw)"/>
<path d="M355.80,680.0 357.80,680.0 357.53,708.4 355.53,708.4z" fill="url(#dr)"/>
<path d="M355.53,708.4 357.53,708.4 357.26,720.0 355.26,720.0z" fill="url(#dw)"/>
<path d="M355.26,720.0 357.26,720.0 356.43,743.6 354.43,743.6z" fill="url(#dy)"/>
<path d="M354.43,743.6 356.43,743.6 355.63,760.0 353.63,760.0z" fill="url(#dw)"/>
<path d="M353.63,760.0 355.63,760.0 355.31,765.7 353.31,765.7z" fill="url(#dw)"/>
<path d="M353.31,765.7 355.31,765.7 352.99,799.1 350.99,799.1z" fill="url(#dw)"/>
<path d="M350.99,799.1 352.99,799.1 352.16,809.0 350.16,809.0z" fill="url(#dw)"/>
<path d="M336.82,118.0 338.82,118.0 341.26,145.1 339.26,145.1z" fill="url(#tw)"/>
<path d="M339.26,145.1 341.26,145.1 342.60,160.0 340.60,160.0z" fill="url(#tw)"/>
<path d="M340.60,160.0 342.60,160.0 344.53,181.4 342.53,181.4z" fill="url(#tw)"/>
<path d="M342.53,181.4 344.53,181.4 346.20,200.0 344.20,200.0z" fill="url(#tw)"/>
<path d="M344.20,200.0 346.20,200.0 346.99,208.8 344.99,208.8z" fill="url(#tw)"/>
<path d="M344.99,208.8 346.99,208.8 348.71,227.9 346.71,227.9z" fill="url(#ty)"/>
<path d="M346.71,227.9 348.71,227.9 349.80,240.0 347.80,240.0z" fill="url(#ty)"/>
<path d="M347.80,240.0 349.80,240.0 351.94,263.8 349.94,263.8z" fill="url(#ty)"/>
<path d="M349.94,263.8 351.94,263.8 353.40,280.0 351.40,280.0z" fill="url(#ty)"/>
<path d="M351.40,280.0 353.40,280.0 354.84,296.0 352.84,296.0z" fill="url(#tw)"/>
<path d="M352.84,296.0 354.84,296.0 357.45,325.1 355.45,325.1z" fill="url(#ty)"/>
<path d="M355.46,325.1 357.46,325.1 357.90,330.0 355.90,330.0z" fill="url(#tw)"/>
<path d="M355.90,330.0 357.90,330.0 360.83,362.6 358.83,362.6z" fill="url(#dw)"/>
<path d="M358.84,362.6 360.84,362.6 362.40,380.0 360.40,380.0z" fill="url(#dy)"/>
<path d="M360.40,380.0 362.40,380.0 363.15,388.4 361.15,388.4z" fill="url(#dr)"/>
<path d="M361.15,388.4 363.15,388.4 365.29,413.6 363.29,413.6z" fill="url(#dw)"/>
<path d="M363.29,413.6 365.29,413.6 365.70,420.0 363.70,420.0z" fill="url(#dw)"/>
<path d="M363.70,420.0 365.70,420.0 366.27,431.0 364.27,431.0z" fill="url(#dy)"/>
<path d="M364.27,431.0 366.27,431.0 366.90,460.0 364.90,460.0z" fill="url(#dw)"/>
<path d="M364.90,460.0 366.90,460.0 366.90,463.6 364.90,463.6z" fill="#ffffff"/>
<path d="M364.90,463.6 366.90,463.6 366.90,494.6 364.90,494.6z" fill="url(#dw)"/>
<path d="M364.90,494.6 366.90,494.6 366.90,533.3 364.90,533.3z" fill="url(#dw)"/>
<path d="M364.90,533.3 366.90,533.3 366.90,549.5 364.90,549.5z" fill="url(#dw)"/>
<path d="M364.90,549.5 366.90,549.5 366.90,575.4 364.90,575.4z" fill="url(#dw)"/>
<path d="M364.90,575.4 366.90,575.4 366.90,601.9 364.90,601.9z" fill="url(#dw)"/>
<path d="M364.90,601.9 366.90,601.9 366.90,627.9 364.90,627.9z" fill="url(#dw)"/>
<path d="M364.90,627.9 366.90,627.9 366.90,644.9 364.90,644.9z" fill="url(#dw)"/>
<path d="M364.90,644.9 366.90,644.9 366.90,680.0 364.90,680.0z" fill="url(#dw)"/>
<path d="M364.90,680.5 366.90,680.5 366.80,697.5 364.80,697.5z" fill="url(#dw)"/>
<path d="M364.80,697.5 366.80,697.5 366.36,720.0 364.36,720.0z" fill="url(#dw)"/>
<path d="M364.36,720.0 366.36,720.0 366.09,728.9 364.09,728.9z" fill="url(#dy)"/>
<path d="M364.09,728.9 366.09,728.9 365.12,752.4 363.12,752.4z" fill="url(#dw)"/>
<path d="M363.12,752.4 365.12,752.4 364.73,760.0 362.73,760.0z" fill="url(#dy)"/>
<path d="M362.73,760.0 364.73,760.0 363.61,778.6 361.61,778.6z" fill="url(#dy)"/>
<path d="M361.60,778.6 363.60,778.6 361.26,809.0 359.26,809.0z" fill="url(#dr)"/>
<path d="M339.82,118.0 341.82,118.0 344.54,148.2 342.54,148.2z" fill="url(#ty)"/>
<path d="M342.54,148.2 344.54,148.2 345.60,160.0 343.60,160.0z" fill="url(#ty)"/>
<path d="M343.60,160.0 345.60,160.0 347.30,178.9 345.30,178.9z" fill="url(#tw)"/>
<path d="M345.30,178.9 347.30,178.9 349.20,200.0 347.20,200.0z" fill="url(#tw)"/>
<path d="M347.20,200.0 349.20,200.0 350.01,209.0 348.01,209.0z" fill="url(#tw)"/>
<path d="M348.01,209.0 350.01,209.0 352.40,235.6 350.40,235.6z" fill="url(#tw)"/>
<path d="M350.40,235.6 352.40,235.6 352.80,240.0 350.80,240.0z" fill="url(#ty)"/>
<path d="M350.80,240.0 352.80,240.0 353.87,251.9 351.87,251.9z" fill="url(#ty)"/>
<path d="M351.87,251.9 353.87,251.9 355.66,271.8 353.66,271.8z" fill="#ffffff"/>
<path d="M353.66,271.8 355.66,271.8 356.40,280.0 354.40,280.0z" fill="url(#tw)"/>
<path d="M354.40,280.0 356.40,280.0 358.14,299.4 356.14,299.4z" fill="url(#tw)"/>
<path d="M356.14,299.4 358.14,299.4 359.76,317.3 357.76,317.3z" fill="url(#tw)"/>
<path d="M357.76,317.3 359.76,317.3 360.90,330.0 358.90,330.0z" fill="url(#ty)"/>
<path d="M358.90,330.0 360.90,330.0 362.48,347.6 360.48,347.6z" fill="url(#tw)"/>
<path d="M360.49,347.6 362.49,347.6 364.33,368.2 362.33,368.2z" fill="url(#dw)"/>
<path d="M362.34,368.2 364.34,368.2 365.40,380.0 363.40,380.0z" fill="url(#dw)"/>
<path d="M363.40,380.0 365.40,380.0 367.25,400.6 365.25,400.6z" fill="#ffffff"/>
<path d="M365.25,400.6 367.25,400.6 368.70,420.0 366.70,420.0z" fill="url(#dw)"/>
<path d="M366.70,420.0 368.70,420.0 369.05,426.3 367.05,426.3z" fill="url(#dw)"/>
<path d="M367.05,426.3 369.05,426.3 369.90,458.1 367.90,458.1z" fill="url(#dr)"/>
<path d="M367.90,458.1 369.90,458.1 369.90,460.0 367.90,460.0z" fill="url(#dw)"/>
<path d="M367.90,460.0 369.90,460.0 369.90,480.4 367.90,480.4z" fill="#ffffff"/>
<path d="M367.90,480.4 369.90,480.4 369.90,499.4 367.90,499.4z" fill="#ffffff"/>
<path d="M367.90,499.4 369.90,499.4 369.90,531.3 367.90,531.3z" fill="url(#dw)"/>
<path d="M367.90,531.3 369.90,531.3 369.90,567.1 367.90,567.1z" fill="#ffffff"/>
<path d="M367.90,567.1 369.90,567.1 369.90,588.2 367.90,588.2z" fill="url(#dw)"/>
<path d="M367.90,588.2 369.90,588.2 369.90,605.1 367.90,605.1z" fill="url(#dw)"/>
<path d="M367.90,605.1 369.90,605.1 369.90,641.9 367.90,641.9z" fill="#ffffff"/>
<path d="M367.90,641.9 369.90,641.9 369.90,676.0 367.90,676.0z" fill="url(#dy)"/>
<path d="M367.90,676.0 369.90,676.0 369.90,680.0 367.90,680.0z" fill="url(#dy)"/>
<path d="M367.90,680.0 369.90,680.0 369.59,710.4 367.59,710.4z" fill="#ffffff"/>
<path d="M367.59,710.4 369.59,710.4 369.36,720.0 367.36,720.0z" fill="#ffffff"/>
<path d="M367.36,720.0 369.36,720.0 368.45,745.4 366.45,745.4z" fill="url(#dy)"/>
<path d="M366.45,745.4 368.45,745.4 367.73,760.0 365.73,760.0z" fill="url(#dw)"/>
<path d="M365.73,760.0 367.73,760.0 367.07,771.4 365.07,771.4z" fill="url(#dy)"/>
<path d="M365.07,771.4 367.07,771.4 364.26,809.0 362.26,809.0z" fill="url(#dw)"/>
<path d="M347.82,118.0 349.82,118.0 352.86,151.8 350.86,151.8z" fill="url(#tw)"/>
<path d="M350.86,151.8 352.86,151.8 353.60,160.0 351.60,160.0z" fill="url(#tw)"/>
<path d="M351.60,160.0 353.60,160.0 355.61,182.4 353.61,182.4z" fill="url(#ty)"/>
<path d="M353.61,182.4 355.61,182.4 357.20,200.0 355.20,200.0z" fill="url(#tw)"/>
<path d="M355.20,200.0 357.20,200.0 358.64,216.0 356.64,216.0z" fill="url(#tw)"/>
<path d="M356.64,216.0 358.64,216.0 360.80,240.0 358.80,240.0z" fill="url(#ty)"/>
<path d="M358.80,240.0 360.80,240.0 361.67,249.7 359.67,249.7z" fill="url(#tw)"/>
<path d="M359.67,249.7 361.67,249.7 364.32,279.2 362.32,279.2z" fill="url(#ty)"/>
<path d="M362.33,279.2 364.33,279.2 364.40,280.0 362.40,280.0z" fill="url(#tw)"/>
<path d="M362.40,280.0 364.40,280.0 366.60,304.4 364.60,304.4z" fill="url(#tw)"/>
<path d="M364.60,304.4 366.60,304.4 368.90,330.0 366.90,330.0z" fill="url(#tw)"/>
<path d="M366.90,330.0 368.90,330.0 369.84,340.5 367.84,340.5z" fill="url(#tw)"/>
<path d="M367.85,340.5 369.85,340.5 373.28,378.7 371.28,378.7z" fill="url(#dr)"/>
<path d="M371.28,378.7 373.28,378.7 373.40,380.0 371.40,380.0z" fill="url(#dw)"/>
<path d="M371.40,380.0 373.40,380.0 376.55,417.5 374.55,417.5z" fill="url(#dy)"/>
<path d="M374.55,417.5 376.55,417.5 376.70,420.0 374.70,420.0z" fill="url(#dw)"/>
<path d="M374.70,420.0 376.70,420.0 377.62,440.8 375.62,440.8z" fill="#ffffff"/>
<path d="M375.62,440.8 377.62,440.8 377.90,460.0 375.90,460.0z" fill="url(#dy)"/>
<path d="M375.90,460.0 377.90,460.0 377.90,461.9 375.90,461.9z" fill="url(#dr)"/>
<path d="M375.90,461.9 377.90,461.9 377.90,482.5 375.90,482.5z" fill="url(#dw)"/>
<path d="M375.90,482.5 377.90,482.5 377.90,514.9 375.90,514.9z" fill="#ffffff"/>
<path d="M375.90,514.9 377.90,514.9 377.90,554.0 375.90,554.0z" fill="url(#dw)"/>
<path d="M375.90,554.0 377.90,554.0 377.90,575.7 375.90,575.7z" fill="#ffffff"/>
<path d="M375.90,575.7 377.90,575.7 377.90,602.5 375.90,602.5z" fill="url(#dw)"/>
<path d="M375.90,602.5 377.90,602.5 377.90,631.6 375.90,631.6z" fill="url(#dw)"/>
<path d="M375.90,631.6 377.90,631.6 377.90,657.6 375.90,657.6z" fill="url(#dw)"/>
<path d="M375.90,657.6 377.90,657.6 377.90,680.0 375.90,680.0z" fill="url(#dw)"/>
<path d="M375.90,680.0 377.90,680.0 377.88,686.8 375.88,686.8z" fill="url(#dy)"/>
<path d="M375.88,686.8 377.88,686.8 377.56,711.7 375.56,711.7z" fill="url(#dw)"/>
<path d="M375.56,711.7 377.56,711.7 377.36,720.0 375.36,720.0z" fill="url(#dw)"/>
<path d="M375.36,720.0 377.36,720.0 376.61,741.8 374.61,741.8z" fill="url(#dy)"/>
<path d="M374.61,741.8 376.61,741.8 375.73,760.0 373.73,760.0z" fill="url(#dw)"/>
<path d="M373.73,760.0 375.73,760.0 374.43,781.2 372.43,781.2z" fill="url(#dw)"/>
<path d="M372.42,781.2 374.42,781.2 372.26,809.0 370.26,809.0z" fill="#ffffff"/>
<path d="M350.82,118.0 352.82,118.0 356.31,156.8 354.31,156.8z" fill="url(#tw)"/>
<path d="M354.31,156.8 356.31,156.8 356.60,160.0 354.60,160.0z" fill="url(#tw)"/>
<path d="M354.60,160.0 356.60,160.0 358.15,177.2 356.15,177.2z" fill="url(#tw)"/>
<path d="M356.15,177.2 358.15,177.2 360.20,200.0 358.20,200.0z" fill="url(#tw)"/>
<path d="M358.20,200.0 360.20,200.0 361.32,212.4 359.32,212.4z" fill="url(#tw)"/>
<path d="M359.32,212.4 361.32,212.4 363.15,232.7 361.15,232.7z" fill="url(#ty)"/>
<path d="M361.15,232.7 363.15,232.7 363.80,240.0 361.80,240.0z" fill="url(#tw)"/>
<path d="M361.80,240.0 363.80,240.0 365.57,259.7 363.57,259.7z" fill="url(#tw)"/>
<path d="M363.57,259.7 365.57,259.7 367.40,280.0 365.40,280.0z" fill="url(#tw)"/>
<path d="M365.40,280.0 367.40,280.0 368.18,288.7 366.18,288.7z" fill="url(#tw)"/>
<path d="M366.19,288.7 368.19,288.7 370.02,309.2 368.02,309.2z" fill="url(#ty)"/>
<path d="M368.03,309.2 370.03,309.2 371.90,330.0 369.90,330.0z" fill="url(#tw)"/>
<path d="M369.90,330.0 371.90,330.0 372.07,331.9 370.07,331.9z" fill="url(#ty)"/>
<path d="M370.07,331.9 372.07,331.9 373.81,351.2 371.81,351.2z" fill="url(#dw)"/>
<path d="M371.81,351.2 373.81,351.2 375.26,367.3 373.26,367.3z" fill="url(#dw)"/>
<path d="M373.26,367.3 375.26,367.3 376.40,380.0 374.40,380.0z" fill="url(#dw)"/>
<path d="M374.40,380.0 376.40,380.0 377.49,392.2 375.49,392.2z" fill="url(#dw)"/>
<path d="M375.50,392.2 377.50,392.2 379.70,420.0 377.70,420.0z" fill="url(#dw)"/>
<path d="M377.70,420.0 379.70,420.0 380.15,428.3 378.15,428.3z" fill="url(#dr)"/>
<path d="M378.15,428.3 380.15,428.3 380.82,449.6 378.82,449.6z" fill="url(#dw)"/>
<path d="M378.82,449.6 380.82,449.6 380.90,460.0 378.90,460.0z" fill="url(#dw)"/>
<path d="M378.90,460.0 380.90,460.0 380.90,476.0 378.90,476.0z" fill="#ffffff"/>
<path d="M378.90,476.0 380.90,476.0 380.90,501.4 378.90,501.4z" fill="url(#dw)"/>
<path d="M378.90,501.4 380.90,501.4 380.90,529.8 378.90,529.8z" fill="url(#dr)"/>
<path d="M378.90,529.8 380.90,529.8 380.90,550.9 378.90,550.9z" fill="url(#dr)"/>
<path d="M378.90,550.9 380.90,550.9 380.90,568.1 378.90,568.1z" fill="url(#dw)"/>
<path d="M378.90,568.1 380.90,568.1 380.90,592.0 378.90,592.0z" fill="#ffffff"/>
<path d="M378.90,592.0 380.90,592.0 380.90,631.5 378.90,631.5z" fill="url(#dy)"/>
<path d="M378.90,631.5 380.90,631.5 380.90,661.4 378.90,661.4z" fill="url(#dy)"/>
<path d="M378.90,661.4 380.90,661.4 380.90,680.0 378.90,680.0z" fill="url(#dy)"/>
<path d="M378.90,680.0 380.90,680.0 380.88,688.3 378.88,688.3z" fill="url(#dw)"/>
<path d="M378.88,688.3 380.88,688.3 380.57,711.3 378.57,711.3z" fill="url(#dw)"/>
<path d="M378.57,711.3 380.57,711.3 380.36,720.0 378.36,720.0z" fill="url(#dw)"/>
<path d="M378.36,720.0 380.36,720.0 379.49,744.5 377.49,744.5z" fill="url(#dw)"/>
<path d="M377.49,744.5 379.49,744.5 378.73,760.0 376.73,760.0z" fill="url(#dy)"/>
<path d="M376.73,760.0 378.73,760.0 378.50,764.1 376.50,764.1z" fill="url(#dy)"/>
<path d="M376.50,764.1 378.50,764.1 376.43,794.8 374.43,794.8z" fill="url(#dy)"/>
<path d="M374.43,794.8 376.43,794.8 375.26,809.0 373.26,809.0z" fill="url(#dw)"/>
<path d="M359.22,118.0 361.22,118.0 363.65,145.0 361.65,145.0z" fill="url(#tw)"/>
<path d="M361.65,145.0 363.65,145.0 365.00,160.0 363.00,160.0z" fill="url(#ty)"/>
<path d="M363.00,160.0 365.00,160.0 366.27,174.1 364.27,174.1z" fill="url(#tw)"/>
<path d="M364.27,174.1 366.27,174.1 368.56,199.6 366.56,199.6z" fill="url(#ty)"/>
<path d="M366.60,200.0 368.60,200.0 371.00,226.7 369.00,226.7z" fill="url(#ty)"/>
<path d="M369.00,226.7 371.00,226.7 372.20,240.0 370.20,240.0z" fill="#ffffff"/>
<path d="M370.20,240.0 372.20,240.0 373.48,254.3 371.48,254.3z" fill="url(#tw)"/>
<path d="M371.49,254.3 373.49,254.3 375.80,280.0 373.80,280.0z" fill="url(#tw)"/>
<path d="M373.80,280.0 375.80,280.0 376.04,282.7 374.04,282.7z" fill="url(#tw)"/>
<path d="M374.04,282.7 376.04,282.7 377.56,299.6 375.56,299.6z" fill="url(#ty)"/>
<path d="M375.57,299.6 377.57,299.6 379.33,319.2 377.33,319.2z" fill="url(#ty)"/>
<path d="M377.33,319.2 379.33,319.2 380.30,330.0 378.30,330.0z" fill="#ffffff"/>
<path d="M378.30,330.0 380.30,330.0 382.43,353.7 380.43,353.7z" fill="#ffffff"/>
<path d="M380.43,353.7 382.43,353.7 384.80,380.0 382.80,380.0z" fill="url(#dw)"/>
<path d="M382.80,380.0 384.80,380.0 385.74,390.5 383.74,390.5z" fill="url(#dw)"/>
<path d="M383.74,390.5 385.74,390.5 387.53,411.4 385.53,411.4z" fill="#ffffff"/>
<path d="M385.53,411.4 387.53,411.4 388.10,420.0 386.10,420.0z" fill="url(#dw)"/>
<path d="M386.10,420.0 388.10,420.0 388.63,430.1 386.63,430.1z" fill="#ffffff"/>
<path d="M386.63,430.1 388.63,430.1 389.25,451.8 387.25,451.8z" fill="#ffffff"/>
<path d="M387.25,451.8 389.25,451.8 389.30,460.0 387.30,460.0z" fill="#ffffff"/>
<path d="M387.30,460.0 389.30,460.0 389.30,488.8 387.30,488.8z" fill="url(#dw)"/>
<path d="M387.30,488.8 389.30,488.8 389.30,515.5 387.30,515.5z" fill="url(#dw)"/>
<path d="M387.30,515.5 389.30,515.5 389.30,555.0 387.30,555.0z" fill="url(#dw)"/>
<path d="M387.30,555.0 389.30,555.0 389.30,582.9 387.30,582.9z" fill="#ffffff"/>
<path d="M387.30,582.9 389.30,582.9 389.30,601.7 387.30,601.7z" fill="#ffffff"/>
<path d="M387.30,601.7 389.30,601.7 389.30,636.0 387.30,636.0z" fill="url(#dy)"/>
<path d="M387.30,636.0 389.30,636.0 389.30,654.9 387.30,654.9z" fill="#ffffff"/>
<path d="M387.30,654.9 389.30,654.9 389.30,680.0 387.30,680.0z" fill="url(#dw)"/>
<path d="M387.30,680.0 389.30,680.0 389.28,687.6 387.28,687.6z" fill="url(#dy)"/>
<path d="M387.28,687.6 389.28,687.6 388.76,720.0 386.76,720.0z" fill="#ffffff"/>
<path d="M386.76,720.0 388.76,720.0 388.53,727.5 386.53,727.5z" fill="url(#dr)"/>
<path d="M386.53,727.5 388.53,727.5 387.13,760.0 385.13,760.0z" fill="url(#dy)"/>
<path d="M385.13,760.0 387.13,760.0 387.05,761.4 385.05,761.4z" fill="url(#dw)"/>
<path d="M385.05,761.4 387.05,761.4 384.66,796.9 382.66,796.9z" fill="url(#dy)"/>
<path d="M382.66,796.9 384.66,796.9 383.66,809.0 381.66,809.0z" fill="url(#dw)"/>
<path d="M362.22,118.0 364.22,118.0 366.38,142.0 364.38,142.0z" fill="url(#tw)"/>
<path d="M364.38,142.0 366.38,142.0 368.00,160.0 366.00,160.0z" fill="url(#ty)"/>
<path d="M366.00,160.0 368.00,160.0 368.23,162.6 366.23,162.6z" fill="url(#ty)"/>
<path d="M366.23,162.6 368.23,162.6 370.38,186.5 368.38,186.5z" fill="url(#ty)"/>
<path d="M368.38,186.5 370.38,186.5 371.60,200.0 369.60,200.0z" fill="url(#tw)"/>
<path d="M369.60,200.0 371.60,200.0 373.63,222.6 371.63,222.6z" fill="url(#tw)"/>
<path d="M371.64,222.6 373.64,222.6 375.20,240.0 373.20,240.0z" fill="url(#tw)"/>
<path d="M373.20,240.0 375.20,240.0 376.32,252.4 374.32,252.4z" fill="url(#ty)"/>
<path d="M374.32,252.4 376.32,252.4 378.80,280.0 376.80,280.0z" fill="#ffffff"/>
<path d="M376.80,280.0 378.80,280.0 379.58,288.6 377.58,288.6z" fill="url(#tw)"/>
<path d="M377.58,288.6 379.58,288.6 382.25,318.4 380.25,318.4z" fill="#ffffff"/>
<path d="M380.25,318.4 382.25,318.4 383.30,330.0 381.30,330.0z" fill="#ffffff"/>
<path d="M381.30,330.0 383.30,330.0 385.15,350.6 383.15,350.6z" fill="url(#dr)"/>
<path d="M383.15,350.6 385.15,350.6 387.79,379.9 385.79,379.9z" fill="#ffffff"/>
<path d="M385.80,380.0 387.80,380.0 389.69,401.0 387.69,401.0z" fill="url(#dw)"/>
<path d="M387.69,401.0 389.69,401.0 391.10,420.0 389.10,420.0z" fill="#ffffff"/>
<path d="M389.10,420.0 391.10,420.0 391.57,428.8 389.57,428.8z" fill="url(#dw)"/>
<path d="M389.57,428.8 391.57,428.8 392.26,453.1 390.26,453.1z" fill="#ffffff"/>
<path d="M390.26,453.1 392.26,453.1 392.30,460.0 390.30,460.0z" fill="url(#dy)"/>
<path d="M390.30,460.0 392.30,460.0 392.30,474.6 390.30,474.6z" fill="#ffffff"/>
<path d="M390.30,474.6 392.30,474.6 392.30,498.1 390.30,498.1z" fill="url(#dw)"/>
<path d="M390.30,498.1 392.30,498.1 392.30,536.2 390.30,536.2z" fill="url(#dw)"/>
<path d="M390.30,536.2 392.30,536.2 392.30,575.3 390.30,575.3z" fill="url(#dw)"/>
<path d="M390.30,575.3 392.30,575.3 392.30,614.5 390.30,614.5z" fill="url(#dy)"/>
<path d="M390.30,614.5 392.30,614.5 392.30,643.6 390.30,643.6z" fill="url(#dy)"/>
<path d="M390.30,643.6 392.30,643.6 392.30,666.2 390.30,666.2z" fill="url(#dw)"/>
<path d="M390.30,666.2 392.30,666.2 392.30,680.0 390.30,680.0z" fill="#ffffff"/>
<path d="M390.30,680.0 392.30,680.0 392.26,691.0 390.26,691.0z" fill="url(#dw)"/>
<path d="M390.26,691.0 392.26,691.0 391.91,714.1 389.91,714.1z" fill="url(#dw)"/>
<path d="M389.91,714.1 391.91,714.1 391.76,720.0 389.76,720.0z" fill="url(#dy)"/>
<path d="M389.76,720.0 391.76,720.0 390.48,753.2 388.48,753.2z" fill="url(#dw)"/>
<path d="M388.48,753.2 390.48,753.2 390.13,760.0 388.13,760.0z" fill="url(#dw)"/>
<path d="M388.13,760.0 390.13,760.0 388.20,789.9 386.20,789.9z" fill="url(#dw)"/>
<path d="M386.20,789.9 388.20,789.9 386.66,809.0 384.66,809.0z" fill="url(#dw)"/>
<path d="M373.72,118.0 375.72,118.0 377.77,140.8 375.77,140.8z" fill="url(#tw)"/>
<path d="M375.77,140.8 377.77,140.8 379.50,160.0 377.50,160.0z" fill="url(#tw)"/>
<path d="M377.50,160.0 379.50,160.0 380.96,176.3 378.96,176.3z" fill="url(#tw)"/>
<path d="M378.97,176.3 380.97,176.3 383.10,200.0 381.10,200.0z" fill="url(#tw)"/>
<path d="M381.10,200.0 383.10,200.0 384.13,211.5 382.13,211.5z" fill="url(#tw)"/>
<path d="M382.13,211.5 384.13,211.5 385.79,229.9 383.79,229.9z" fill="url(#tw)"/>
<path d="M383.79,229.9 385.79,229.9 386.70,240.0 384.70,240.0z" fill="url(#ty)"/>
<path d="M384.70,240.0 386.70,240.0 388.73,262.5 386.73,262.5z" fill="#ffffff"/>
<path d="M386.73,262.5 388.73,262.5 390.30,280.0 388.30,280.0z" fill="url(#tw)"/>
<path d="M388.30,280.0 390.30,280.0 392.07,299.6 390.07,299.6z" fill="url(#tw)"/>
<path d="M390.07,299.6 392.07,299.6 394.80,330.0 392.80,330.0z" fill="#ffffff"/>
<path d="M392.83,330.3 394.83,330.3 398.34,369.4 396.34,369.4z" fill="#ffffff"/>
<path d="M396.34,369.4 398.34,369.4 399.30,380.0 397.30,380.0z" fill="url(#dy)"/>
<path d="M397.30,380.0 399.30,380.0 401.05,399.5 399.05,399.5z" fill="url(#dr)"/>
<path d="M399.06,399.5 401.06,399.5 402.60,420.0 400.60,420.0z" fill="url(#dw)"/>
<path d="M400.60,420.0 402.60,420.0 402.97,426.7 400.97,426.7z" fill="url(#dy)"/>
<path d="M400.97,426.7 402.97,426.7 403.76,452.4 401.76,452.4z" fill="#ffffff"/>
<path d="M401.76,452.4 403.76,452.4 403.80,460.0 401.80,460.0z" fill="url(#dr)"/>
<path d="M401.80,460.0 403.80,460.0 403.80,482.4 401.80,482.4z" fill="url(#dy)"/>
<path d="M401.80,482.4 403.80,482.4 403.80,514.2 401.80,514.2z" fill="#ffffff"/>
<path d="M401.80,514.2 403.80,514.2 403.80,554.1 401.80,554.1z" fill="url(#dw)"/>
<path d="M401.80,554.1 403.80,554.1 403.80,573.7 401.80,573.7z" fill="#ffffff"/>
<path d="M401.80,573.7 403.80,573.7 403.80,597.5 401.80,597.5z" fill="url(#dy)"/>
<path d="M401.80,597.5 403.80,597.5 403.80,634.9 401.80,634.9z" fill="url(#dy)"/>
<path d="M401.80,634.9 403.80,634.9 403.80,667.4 401.80,667.4z" fill="url(#dw)"/>
<path d="M401.80,667.4 403.80,667.4 403.80,680.0 401.80,680.0z" fill="url(#dw)"/>
<path d="M401.80,680.0 403.80,680.0 403.76,690.8 401.76,690.8z" fill="url(#dr)"/>
<path d="M401.76,690.8 403.76,690.8 403.26,720.0 401.26,720.0z" fill="url(#dw)"/>
<path d="M401.25,720.3 403.25,720.3 402.67,737.8 400.67,737.8z" fill="url(#dy)"/>
<path d="M400.67,737.8 402.67,737.8 401.77,757.4 399.77,757.4z" fill="url(#dy)"/>
<path d="M399.77,757.4 401.77,757.4 401.63,760.0 399.63,760.0z" fill="url(#dw)"/>
<path d="M399.63,760.0 401.63,760.0 400.78,774.3 398.78,774.3z" fill="url(#dr)"/>
<path d="M398.78,774.3 400.78,774.3 398.16,809.0 396.16,809.0z" fill="url(#dw)"/>
<path d="M376.72,118.0 378.72,118.0 381.11,144.5 379.11,144.5z" fill="url(#tw)"/>
<path d="M379.11,144.5 381.11,144.5 382.50,160.0 380.50,160.0z" fill="url(#tw)"/>
<path d="M380.50,160.0 382.50,160.0 383.20,167.8 381.20,167.8z" fill="url(#tw)"/>
<path d="M381.21,167.8 383.21,167.8 386.10,200.0 384.10,200.0z" fill="url(#ty)"/>
<path d="M384.10,200.0 386.10,200.0 386.72,206.8 384.72,206.8z" fill="url(#tw)"/>
<path d="M384.72,206.8 386.72,206.8 389.10,233.3 387.10,233.3z" fill="#ffffff"/>
<path d="M387.10,233.3 389.10,233.3 389.70,240.0 387.70,240.0z" fill="url(#tw)"/>
<path d="M387.70,240.0 389.70,240.0 391.40,258.9 389.40,258.9z" fill="url(#ty)"/>
<path d="M389.41,258.9 391.41,258.9 393.30,280.0 391.30,280.0z" fill="url(#tw)"/>
<path d="M391.30,280.0 393.30,280.0 394.50,293.3 392.50,293.3z" fill="url(#ty)"/>
<path d="M392.50,293.3 394.50,293.3 397.59,327.7 395.59,327.7z" fill="url(#ty)"/>
<path d="M395.59,327.7 397.59,327.7 397.80,330.0 395.80,330.0z" fill="#ffffff"/>
<path d="M395.80,330.0 397.80,330.0 399.20,345.6 397.20,345.6z" fill="url(#tw)"/>
<path d="M397.20,345.6 399.20,345.6 402.11,377.9 400.11,377.9z" fill="url(#dw)"/>
<path d="M400.11,377.9 402.11,377.9 402.30,380.0 400.30,380.0z" fill="url(#dw)"/>
<path d="M400.30,380.0 402.30,380.0 405.37,416.3 403.37,416.3z" fill="url(#dw)"/>
<path d="M403.37,416.3 405.37,416.3 405.60,420.0 403.60,420.0z" fill="url(#dw)"/>
<path d="M403.60,420.0 405.60,420.0 406.66,446.3 404.66,446.3z" fill="#ffffff"/>
<path d="M404.66,446.3 406.66,446.3 406.80,460.0 404.80,460.0z" fill="url(#dw)"/>
<path d="M404.80,460.0 406.80,460.0 406.80,468.9 404.80,468.9z" fill="#ffffff"/>
<path d="M404.80,468.9 406.80,468.9 406.80,507.3 404.80,507.3z" fill="url(#dw)"/>
<path d="M404.80,507.3 406.80,507.3 406.80,524.9 404.80,524.9z" fill="#ffffff"/>
<path d="M404.80,524.9 406.80,524.9 406.80,552.6 404.80,552.6z" fill="#ffffff"/>
<path d="M404.80,552.6 406.80,552.6 406.80,573.4 404.80,573.4z" fill="#ffffff"/>
<path d="M404.80,573.4 406.80,573.4 406.80,602.7 404.80,602.7z" fill="url(#dy)"/>
<path d="M404.80,602.7 406.80,602.7 406.80,628.3 404.80,628.3z" fill="#ffffff"/>
<path d="M404.80,628.3 406.80,628.3 406.80,665.5 404.80,665.5z" fill="url(#dw)"/>
<path d="M404.80,665.5 406.80,665.5 406.80,680.0 404.80,680.0z" fill="url(#dy)"/>
<path d="M404.80,680.0 406.80,680.0 406.80,683.2 404.80,683.2z" fill="#ffffff"/>
<path d="M404.80,683.2 406.80,683.2 406.49,710.4 404.49,710.4z" fill="#ffffff"/>
<path d="M404.49,710.4 406.49,710.4 406.26,720.0 404.26,720.0z" fill="url(#dy)"/>
<path d="M404.26,720.0 406.26,720.0 405.84,733.3 403.84,733.3z" fill="url(#dy)"/>
<path d="M403.84,733.3 405.84,733.3 405.05,751.9 403.05,751.9z" fill="url(#dy)"/>
<path d="M403.05,751.9 405.05,751.9 404.63,760.0 402.63,760.0z" fill="url(#dw)"/>
<path d="M402.63,760.0 404.63,760.0 402.83,788.2 400.83,788.2z" fill="url(#dr)"/>
<path d="M400.83,788.2 402.83,788.2 401.16,809.0 399.16,809.0z" fill="url(#dy)"/>
<path d="M384.12,118.0 386.12,118.0 387.94,138.2 385.94,138.2z" fill="url(#tw)"/>
<path d="M385.94,138.2 387.94,138.2 389.90,160.0 387.90,160.0z" fill="url(#tw)"/>
<path d="M387.90,160.0 389.90,160.0 390.38,165.4 388.38,165.4z" fill="url(#ty)"/>
<path d="M388.38,165.4 390.38,165.4 392.97,194.1 390.97,194.1z" fill="url(#tw)"/>
<path d="M390.97,194.1 392.97,194.1 393.50,200.0 391.50,200.0z" fill="url(#tw)"/>
<path d="M391.50,200.0 393.50,200.0 395.98,227.6 393.98,227.6z" fill="#ffffff"/>
<path d="M393.98,227.6 395.98,227.6 397.10,240.0 395.10,240.0z" fill="#ffffff"/>
<path d="M395.10,240.0 397.10,240.0 398.54,256.1 396.54,256.1z" fill="#ffffff"/>
<path d="M396.55,256.1 398.55,256.1 400.49,277.7 398.49,277.7z" fill="url(#tw)"/>
<path d="M398.50,277.7 400.50,277.7 400.70,280.0 398.70,280.0z" fill="url(#tw)"/>
<path d="M398.70,280.0 400.70,280.0 404.06,317.4 402.06,317.4z" fill="url(#dy)"/>
<path d="M402.07,317.4 404.07,317.4 405.20,330.0 403.20,330.0z" fill="url(#dw)"/>
<path d="M403.20,330.0 405.20,330.0 406.55,345.0 404.55,345.0z" fill="url(#dw)"/>
<path d="M404.55,345.0 406.55,345.0 408.24,363.8 406.24,363.8z" fill="#ffffff"/>
<path d="M406.25,363.8 408.25,363.8 409.70,380.0 407.70,380.0z" fill="#ffffff"/>
<path d="M407.70,380.0 409.70,380.0 411.50,400.0 409.50,400.0z" fill="url(#dw)"/>
<path d="M409.50,400.0 411.50,400.0 413.00,420.0 411.00,420.0z" fill="#ffffff"/>
<path d="M411.00,420.0 413.00,420.0 413.27,424.8 411.27,424.8z" fill="url(#dw)"/>
<path d="M411.27,424.8 413.27,424.8 414.20,460.0 412.20,460.0z" fill="url(#dr)"/>
<path d="M412.20,460.0 414.20,460.0 414.20,463.6 412.20,463.6z" fill="url(#dr)"/>
<path d="M412.20,463.6 414.20,463.6 414.20,480.4 412.20,480.4z" fill="url(#dy)"/>
<path d="M412.20,480.4 414.20,480.4 414.20,514.6 412.20,514.6z" fill="url(#dw)"/>
<path d="M412.20,514.6 414.20,514.6 414.20,547.0 412.20,547.0z" fill="url(#dr)"/>
<path d="M412.20,547.0 414.20,547.0 414.20,580.1 412.20,580.1z" fill="url(#dw)"/>
<path d="M412.20,580.1 414.20,580.1 414.20,597.0 412.20,597.0z" fill="#ffffff"/>
<path d="M412.20,597.0 414.20,597.0 414.20,625.1 412.20,625.1z" fill="url(#dr)"/>
<path d="M412.20,625.1 414.20,625.1 414.20,653.2 412.20,653.2z" fill="url(#dw)"/>
<path d="M412.20,653.2 414.20,653.2 414.20,676.4 412.20,676.4z" fill="url(#dw)"/>
<path d="M412.20,676.4 414.20,676.4 414.20,680.0 412.20,680.0z" fill="url(#dy)"/>
<path d="M412.20,680.0 414.20,680.0 414.13,694.5 412.13,694.5z" fill="url(#dy)"/>
<path d="M412.13,694.5 414.13,694.5 413.66,720.0 411.66,720.0z" fill="url(#dw)"/>
<path d="M411.66,720.0 413.66,720.0 413.51,725.2 411.51,725.2z" fill="url(#dw)"/>
<path d="M411.51,725.2 413.51,725.2 412.54,750.0 410.54,750.0z" fill="url(#dy)"/>
<path d="M410.54,750.0 412.54,750.0 412.03,760.0 410.03,760.0z" fill="url(#dw)"/>
<path d="M410.03,760.0 412.03,760.0 410.12,789.7 408.12,789.7z" fill="url(#dw)"/>
<path d="M408.12,789.7 410.12,789.7 408.56,809.0 406.56,809.0z" fill="url(#dw)"/>
<path d="M387.12,118.0 389.12,118.0 391.32,142.5 389.32,142.5z" fill="url(#ty)"/>
<path d="M389.32,142.5 391.32,142.5 392.90,160.0 390.90,160.0z" fill="url(#ty)"/>
<path d="M390.90,160.0 392.90,160.0 394.21,174.6 392.21,174.6z" fill="url(#tw)"/>
<path d="M392.21,174.6 394.21,174.6 396.48,199.8 394.48,199.8z" fill="url(#tw)"/>
<path d="M394.50,200.0 396.50,200.0 398.93,227.1 396.93,227.1z" fill="url(#ty)"/>
<path d="M396.94,227.1 398.94,227.1 400.10,240.0 398.10,240.0z" fill="url(#tw)"/>
<path d="M398.10,240.0 400.10,240.0 400.81,247.9 398.81,247.9z" fill="#ffffff"/>
<path d="M398.81,247.9 400.81,247.9 403.40,276.7 401.40,276.7z" fill="url(#dr)"/>
<path d="M401.40,276.7 403.40,276.7 403.70,280.0 401.70,280.0z" fill="#ffffff"/>
<path d="M401.70,280.0 403.70,280.0 405.31,297.9 403.31,297.9z" fill="url(#dw)"/>
<path d="M403.31,297.9 405.31,297.9 407.22,319.2 405.22,319.2z" fill="url(#dy)"/>
<path d="M405.23,319.2 407.23,319.2 408.20,330.0 406.20,330.0z" fill="url(#dw)"/>
<path d="M406.20,330.0 408.20,330.0 409.59,345.5 407.59,345.5z" fill="url(#dr)"/>
<path d="M407.59,345.5 409.59,345.5 412.41,376.8 410.41,376.8z" fill="url(#dw)"/>
<path d="M410.41,376.8 412.41,376.8 412.70,380.0 410.70,380.0z" fill="url(#dy)"/>
<path d="M410.70,380.0 412.70,380.0 414.94,405.1 412.94,405.1z" fill="#ffffff"/>
<path d="M412.94,405.1 414.94,405.1 416.00,420.0 414.00,420.0z" fill="url(#dw)"/>
<path d="M414.00,420.0 416.00,420.0 416.36,426.6 414.36,426.6z" fill="#ffffff"/>
<path d="M414.36,426.6 416.36,426.6 417.19,456.3 415.19,456.3z" fill="url(#dy)"/>
<path d="M415.19,456.3 417.19,456.3 417.20,460.0 415.20,460.0z" fill="url(#dr)"/>
<path d="M415.20,460.0 417.20,460.0 417.20,489.1 415.20,489.1z" fill="#ffffff"/>
<path d="M415.20,489.1 417.20,489.1 417.20,510.2 415.20,510.2z" fill="url(#dr)"/>
<path d="M415.20,510.2 417.20,510.2 417.20,529.1 415.20,529.1z" fill="url(#dw)"/>
<path d="M415.20,529.1 417.20,529.1 417.20,566.0 415.20,566.0z" fill="url(#dw)"/>
<path d="M415.20,566.0 417.20,566.0 417.20,590.2 415.20,590.2z" fill="url(#dw)"/>
<path d="M415.20,590.2 417.20,590.2 417.20,619.6 415.20,619.6z" fill="#ffffff"/>
<path d="M415.20,619.6 417.20,619.6 417.20,647.4 415.20,647.4z" fill="url(#dy)"/>
<path d="M415.20,647.4 417.20,647.4 417.20,675.6 415.20,675.6z" fill="url(#dw)"/>
<path d="M415.20,675.6 417.20,675.6 417.20,680.0 415.20,680.0z" fill="#ffffff"/>
<path d="M415.20,680.0 417.20,680.0 417.08,699.2 415.08,699.2z" fill="url(#dw)"/>
<path d="M415.08,699.2 417.08,699.2 416.69,718.8 414.69,718.8z" fill="url(#dw)"/>
<path d="M414.69,718.8 416.69,718.8 416.66,720.0 414.66,720.0z" fill="url(#dw)"/>
<path d="M414.66,720.0 416.66,720.0 415.46,751.6 413.46,751.6z" fill="url(#dy)"/>
<path d="M413.46,751.6 415.46,751.6 415.03,760.0 413.03,760.0z" fill="url(#dy)"/>
<path d="M413.03,760.0 415.03,760.0 413.54,783.9 411.54,783.9z" fill="url(#dy)"/>
<path d="M411.54,783.9 413.54,783.9 411.56,809.0 409.56,809.0z" fill="url(#dw)"/>
<path d="M394.62,118.0 396.62,118.0 398.26,136.2 396.26,136.2z" fill="url(#tw)"/>
<path d="M396.26,136.2 398.26,136.2 400.40,160.0 398.40,160.0z" fill="url(#tw)"/>
<path d="M398.40,160.0 400.40,160.0 401.02,166.9 399.02,166.9z" fill="url(#tw)"/>
<path d="M399.02,166.9 401.02,166.9 402.57,184.2 400.57,184.2z" fill="url(#dy)"/>
<path d="M400.57,184.2 402.57,184.2 404.00,200.0 402.00,200.0z" fill="url(#dw)"/>
<path d="M402.00,200.0 404.00,200.0 405.02,211.4 403.02,211.4z" fill="url(#dw)"/>
<path d="M403.03,211.4 405.03,211.4 407.34,237.1 405.34,237.1z" fill="#ffffff"/>
<path d="M405.34,237.1 407.34,237.1 407.60,240.0 405.60,240.0z" fill="url(#dw)"/>
<path d="M405.60,240.0 407.60,240.0 409.41,260.1 407.41,260.1z" fill="url(#dy)"/>
<path d="M407.41,260.1 409.41,260.1 411.20,280.0 409.20,280.0z" fill="#ffffff"/>
<path d="M409.20,280.0 411.20,280.0 411.40,282.2 409.40,282.2z" fill="url(#dw)"/>
<path d="M409.40,282.2 411.40,282.2 413.89,309.9 411.89,309.9z" fill="url(#dw)"/>
<path d="M411.89,309.9 413.89,309.9 415.70,330.0 413.70,330.0z" fill="url(#dy)"/>
<path d="M413.70,330.0 415.70,330.0 417.23,347.0 415.23,347.0z" fill="url(#dw)"/>
<path d="M415.23,347.0 417.23,347.0 420.20,380.0 418.20,380.0z" fill="#ffffff"/>
<path d="M418.20,380.0 420.20,380.0 420.39,382.1 418.39,382.1z" fill="#ffffff"/>
<path d="M418.39,382.1 420.39,382.1 422.47,405.5 420.47,405.5z" fill="#ffffff"/>
<path d="M420.47,405.5 422.47,405.5 423.50,420.0 421.50,420.0z" fill="#ffffff"/>
<path d="M421.50,420.0 423.50,420.0 424.26,435.7 422.26,435.7z" fill="url(#dw)"/>
<path d="M422.26,435.7 424.26,435.7 424.70,460.0 422.70,460.0z" fill="#ffffff"/>
<path d="M422.70,460.0 424.70,460.0 424.70,466.9 422.70,466.9z" fill="#ffffff"/>
<path d="M422.70,466.9 424.70,466.9 424.70,500.2 422.70,500.2z" fill="#ffffff"/>
<path d="M422.70,500.2 424.70,500.2 424.70,531.2 422.70,531.2z" fill="#ffffff"/>
<path d="M422.70,531.2 424.70,531.2 424.70,548.7 422.70,548.7z" fill="url(#dw)"/>
<path d="M422.70,548.7 424.70,548.7 424.70,568.2 422.70,568.2z" fill="url(#dy)"/>
<path d="M422.70,568.2 424.70,568.2 424.70,603.1 422.70,603.1z" fill="url(#dw)"/>
<path d="M422.70,603.1 424.70,603.1 424.70,625.4 422.70,625.4z" fill="#ffffff"/>
<path d="M422.70,625.4 424.70,625.4 424.70,655.0 422.70,655.0z" fill="url(#dy)"/>
<path d="M422.70,655.0 424.70,655.0 424.70,672.3 422.70,672.3z" fill="url(#dy)"/>
<path d="M422.70,672.3 424.70,672.3 424.70,680.0 422.70,680.0z" fill="#ffffff"/>
<path d="M422.70,680.0 424.70,680.0 424.53,702.2 422.53,702.2z" fill="#ffffff"/>
<path d="M422.53,702.2 424.53,702.2 424.16,720.0 422.16,720.0z" fill="url(#dw)"/>
<path d="M422.16,720.0 424.16,720.0 424.01,725.2 422.01,725.2z" fill="url(#dw)"/>
<path d="M422.01,725.2 424.01,725.2 423.39,742.2 421.39,742.2z" fill="url(#dw)"/>
<path d="M421.39,742.2 423.39,742.2 422.61,758.5 420.61,758.5z" fill="url(#dy)"/>
<path d="M420.61,758.5 422.61,758.5 422.53,760.0 420.53,760.0z" fill="#ffffff"/>
<path d="M420.53,760.0 422.53,760.0 421.29,780.2 419.29,780.2z" fill="url(#dy)"/>
<path d="M419.29,780.2 421.29,780.2 419.09,808.6 417.09,808.6z" fill="url(#dy)"/>
<path d="M397.62,118.0 399.62,118.0 401.59,139.9 399.59,139.9z" fill="url(#tw)"/>
<path d="M399.59,139.9 401.59,139.9 403.40,160.0 401.40,160.0z" fill="url(#dw)"/>
<path d="M401.40,160.0 403.40,160.0 404.57,173.0 402.57,173.0z" fill="url(#dw)"/>
<path d="M402.57,173.0 404.57,173.0 406.35,192.8 404.35,192.8z" fill="url(#dy)"/>
<path d="M404.35,192.8 406.35,192.8 407.00,200.0 405.00,200.0z" fill="url(#dw)"/>
<path d="M405.00,200.0 407.00,200.0 409.15,223.9 407.15,223.9z" fill="#ffffff"/>
<path d="M407.15,223.9 409.15,223.9 410.60,240.0 408.60,240.0z" fill="url(#dw)"/>
<path d="M408.60,240.0 410.60,240.0 412.29,258.8 410.29,258.8z" fill="url(#dw)"/>
<path d="M410.30,258.8 412.30,258.8 413.87,276.3 411.87,276.3z" fill="url(#dw)"/>
<path d="M411.87,276.3 413.87,276.3 414.20,280.0 412.20,280.0z" fill="#ffffff"/>
<path d="M412.20,280.0 414.20,280.0 415.92,299.1 413.92,299.1z" fill="#ffffff"/>
<path d="M413.92,299.1 415.92,299.1 418.07,323.0 416.07,323.0z" fill="url(#dy)"/>
<path d="M416.07,323.0 418.07,323.0 418.70,330.0 416.70,330.0z" fill="#ffffff"/>
<path d="M416.70,330.0 418.70,330.0 421.42,360.2 419.42,360.2z" fill="#ffffff"/>
<path d="M419.42,360.2 421.42,360.2 423.01,377.9 421.01,377.9z" fill="url(#dw)"/>
<path d="M421.01,377.9 423.01,377.9 423.20,380.0 421.20,380.0z" fill="#ffffff"/>
<path d="M421.20,380.0 423.20,380.0 425.33,403.8 423.33,403.8z" fill="#ffffff"/>
<path d="M423.33,403.8 425.33,403.8 426.50,420.0 424.50,420.0z" fill="#ffffff"/>
<path d="M424.50,420.0 426.50,420.0 427.50,443.6 425.50,443.6z" fill="url(#dw)"/>
<path d="M425.50,443.6 427.50,443.6 427.70,460.0 425.70,460.0z" fill="url(#dy)"/>
<path d="M425.70,460.0 427.70,460.0 427.70,461.9 425.70,461.9z" fill="#ffffff"/>
<path d="M425.70,461.9 427.70,461.9 427.70,500.8 425.70,500.8z" fill="url(#dy)"/>
<path d="M425.70,500.8 427.70,500.8 427.70,518.5 425.70,518.5z" fill="url(#dy)"/>
<path d="M425.70,518.5 427.70,518.5 427.70,547.6 425.70,547.6z" fill="#ffffff"/>
<path d="M425.70,547.6 427.70,547.6 427.70,574.4 425.70,574.4z" fill="url(#dw)"/>
<path d="M425.70,574.4 427.70,574.4 427.70,606.8 425.70,606.8z" fill="#ffffff"/>
<path d="M425.70,606.8 427.70,606.8 427.70,629.6 425.70,629.6z" fill="#ffffff"/>
<path d="M425.70,629.6 427.70,629.6 427.70,656.9 425.70,656.9z" fill="url(#dw)"/>
<path d="M425.70,656.9 427.70,656.9 427.70,680.0 425.70,680.0z" fill="#ffffff"/>
<path d="M425.70,680.0 427.70,680.0 427.64,693.7 425.64,693.7z" fill="url(#dy)"/>
<path d="M425.64,693.7 427.64,693.7 427.32,713.6 425.32,713.6z" fill="url(#dw)"/>
<path d="M425.32,713.6 427.32,713.6 427.16,720.0 425.16,720.0z" fill="url(#dy)"/>
<path d="M425.16,720.0 427.16,720.0 425.98,751.1 423.98,751.1z" fill="url(#dy)"/>
<path d="M423.98,751.1 425.98,751.1 425.53,760.0 423.53,760.0z" fill="url(#dy)"/>
<path d="M423.53,760.0 425.53,760.0 424.99,769.4 422.99,769.4z" fill="url(#dw)"/>
<path d="M422.99,769.4 424.99,769.4 423.63,789.6 421.63,789.6z" fill="url(#dy)"/>
<path d="M421.63,789.6 423.63,789.6 422.06,809.0 420.06,809.0z" fill="url(#dy)"/>
<path d="M405.02,118.0 407.02,118.0 408.77,137.5 406.77,137.5z" fill="url(#dw)"/>
<path d="M406.78,137.5 408.78,137.5 410.80,160.0 408.80,160.0z" fill="url(#dw)"/>
<path d="M408.80,160.0 410.80,160.0 411.20,164.4 409.20,164.4z" fill="url(#dy)"/>
<path d="M409.20,164.4 411.20,164.4 414.19,197.6 412.19,197.6z" fill="url(#dw)"/>
<path d="M412.19,197.6 414.19,197.6 414.40,200.0 412.40,200.0z" fill="url(#dr)"/>
<path d="M412.40,200.0 414.40,200.0 417.67,236.4 415.67,236.4z" fill="#ffffff"/>
<path d="M415.67,236.4 417.67,236.4 418.00,240.0 416.00,240.0z" fill="url(#dw)"/>
<path d="M416.00,240.0 418.00,240.0 419.29,254.3 417.29,254.3z" fill="url(#dw)"/>
<path d="M417.29,254.3 419.29,254.3 421.17,275.3 419.17,275.3z" fill="url(#dw)"/>
<path d="M419.18,275.3 421.18,275.3 421.60,280.0 419.60,280.0z" fill="url(#dy)"/>
<path d="M419.60,280.0 421.60,280.0 423.13,297.0 421.13,297.0z" fill="url(#dw)"/>
<path d="M421.13,297.0 423.13,297.0 425.12,319.1 423.12,319.1z" fill="url(#dy)"/>
<path d="M423.12,319.1 425.12,319.1 426.10,330.0 424.10,330.0z" fill="#ffffff"/>
<path d="M424.10,330.0 426.10,330.0 427.96,350.7 425.96,350.7z" fill="url(#dw)"/>
<path d="M425.96,350.7 427.96,350.7 430.29,376.5 428.29,376.5z" fill="url(#dr)"/>
<path d="M428.29,376.5 430.29,376.5 430.60,380.0 428.60,380.0z" fill="url(#dw)"/>
<path d="M428.60,380.0 430.60,380.0 433.56,414.7 431.56,414.7z" fill="#ffffff"/>
<path d="M431.56,414.7 433.56,414.7 433.90,420.0 431.90,420.0z" fill="url(#dr)"/>
<path d="M431.90,420.0 433.90,420.0 434.97,446.9 432.97,446.9z" fill="#ffffff"/>
<path d="M432.97,446.9 434.97,446.9 435.10,460.0 433.10,460.0z" fill="#ffffff"/>
<path d="M433.10,460.0 435.10,460.0 435.10,479.6 433.10,479.6z" fill="#ffffff"/>
<path d="M433.10,479.6 435.10,479.6 435.10,517.3 433.10,517.3z" fill="#ffffff"/>
<path d="M433.10,517.3 435.10,517.3 435.10,554.0 433.10,554.0z" fill="#ffffff"/>
<path d="M433.10,554.0 435.10,554.0 435.10,570.6 433.10,570.6z" fill="#ffffff"/>
<path d="M433.10,570.6 435.10,570.6 435.10,596.8 433.10,596.8z" fill="url(#dy)"/>
<path d="M433.10,596.8 435.10,596.8 435.10,628.4 433.10,628.4z" fill="url(#dw)"/>
<path d="M433.10,628.4 435.10,628.4 435.10,661.8 433.10,661.8z" fill="#ffffff"/>
<path d="M433.10,661.8 435.10,661.8 435.10,680.0 433.10,680.0z" fill="url(#dw)"/>
<path d="M433.10,680.0 435.10,680.0 434.97,699.5 432.97,699.5z" fill="url(#dw)"/>
<path d="M432.97,699.5 434.97,699.5 434.56,720.0 432.56,720.0z" fill="url(#dw)"/>
<path d="M432.55,720.4 434.55,720.4 433.52,748.3 431.52,748.3z" fill="#ffffff"/>
<path d="M431.52,748.3 433.52,748.3 432.93,760.0 430.93,760.0z" fill="url(#dw)"/>
<path d="M430.93,760.0 432.93,760.0 431.30,785.9 429.30,785.9z" fill="url(#dr)"/>
<path d="M429.30,785.9 431.30,785.9 429.69,806.3 427.69,806.3z" fill="url(#dw)"/>
<path d="M427.69,806.3 429.69,806.3 429.46,809.0 427.46,809.0z" fill="url(#dr)"/>
<path d="M408.02,118.0 410.02,118.0 412.04,140.4 410.04,140.4z" fill="url(#dy)"/>
<path d="M410.04,140.4 412.04,140.4 413.80,160.0 411.80,160.0z" fill="url(#dy)"/>
<path d="M411.80,160.0 413.80,160.0 414.77,170.8 412.77,170.8z" fill="url(#dw)"/>
<path d="M412.77,170.8 414.77,170.8 417.40,200.0 415.40,200.0z" fill="url(#dy)"/>
<path d="M415.40,200.0 417.40,200.0 417.77,204.1 415.77,204.1z" fill="url(#dy)"/>
<path d="M415.77,204.1 417.77,204.1 419.81,226.8 417.81,226.8z" fill="url(#dw)"/>
<path d="M417.82,226.8 419.82,226.8 421.00,240.0 419.00,240.0z" fill="url(#dr)"/>
<path d="M419.00,240.0 421.00,240.0 423.26,265.1 421.26,265.1z" fill="url(#dw)"/>
<path d="M421.26,265.1 423.26,265.1 424.60,280.0 422.60,280.0z" fill="#ffffff"/>
<path d="M422.60,280.0 424.60,280.0 425.24,287.1 423.24,287.1z" fill="url(#dy)"/>
<path d="M423.24,287.1 425.24,287.1 428.82,326.9 426.82,326.9z" fill="url(#dr)"/>
<path d="M426.82,326.9 428.82,326.9 429.10,330.0 427.10,330.0z" fill="url(#dy)"/>
<path d="M427.10,330.0 429.10,330.0 431.78,359.8 429.78,359.8z" fill="#ffffff"/>
<path d="M429.79,359.8 431.79,359.8 433.60,380.0 431.60,380.0z" fill="#ffffff"/>
<path d="M431.60,380.0 433.60,380.0 434.36,388.5 432.36,388.5z" fill="url(#dw)"/>
<path d="M432.37,388.5 434.37,388.5 436.80,418.4 434.80,418.4z" fill="url(#dy)"/>
<path d="M434.80,418.4 436.80,418.4 436.90,420.0 434.90,420.0z" fill="#ffffff"/>
<path d="M434.90,420.0 436.90,420.0 438.09,455.8 436.09,455.8z" fill="url(#dy)"/>
<path d="M436.09,455.8 438.09,455.8 438.10,460.0 436.10,460.0z" fill="#ffffff"/>
<path d="M436.10,460.0 438.10,460.0 438.10,492.4 436.10,492.4z" fill="#ffffff"/>
<path d="M436.10,492.4 438.10,492.4 438.10,509.4 436.10,509.4z" fill="#ffffff"/>
<path d="M436.10,509.4 438.10,509.4 438.10,533.0 436.10,533.0z" fill="url(#dw)"/>
<path d="M436.10,533.0 438.10,533.0 438.10,549.2 436.10,549.2z" fill="#ffffff"/>
<path d="M436.10,549.2 438.10,549.2 438.10,575.4 436.10,575.4z" fill="url(#dw)"/>
<path d="M436.10,575.4 438.10,575.4 438.10,608.3 436.10,608.3z" fill="#ffffff"/>
<path d="M436.10,608.3 438.10,608.3 438.10,633.6 436.10,633.6z" fill="#ffffff"/>
<path d="M436.10,633.6 438.10,633.6 438.10,663.1 436.10,663.1z" fill="url(#dw)"/>
<path d="M436.10,663.1 438.10,663.1 438.10,680.0 436.10,680.0z" fill="#ffffff"/>
<path d="M436.10,680.0 438.10,680.0 438.10,683.1 436.10,683.1z" fill="url(#dw)"/>
<path d="M436.10,683.1 438.10,683.1 437.90,704.0 435.90,704.0z" fill="url(#dw)"/>
<path d="M435.90,704.0 437.90,704.0 437.56,720.0 435.56,720.0z" fill="url(#dy)"/>
<path d="M435.56,720.0 437.56,720.0 437.32,728.0 435.32,728.0z" fill="url(#dw)"/>
<path d="M435.32,728.0 437.32,728.0 436.43,750.1 434.43,750.1z" fill="#ffffff"/>
<path d="M434.43,750.1 436.43,750.1 435.93,760.0 433.93,760.0z" fill="url(#dy)"/>
<path d="M433.93,760.0 435.93,760.0 434.49,783.2 432.49,783.2z" fill="url(#dw)"/>
<path d="M432.49,783.2 434.49,783.2 432.46,809.0 430.46,809.0z" fill="url(#dw)"/>
<path d="M417.82,118.0 419.82,118.0 422.66,149.6 420.66,149.6z" fill="url(#dw)"/>
<path d="M420.66,149.6 422.66,149.6 423.60,160.0 421.60,160.0z" fill="url(#dw)"/>
<path d="M421.60,160.0 423.60,160.0 425.00,175.6 423.00,175.6z" fill="url(#dy)"/>
<path d="M423.01,175.6 425.01,175.6 426.80,195.5 424.80,195.5z" fill="url(#dw)"/>
<path d="M424.80,195.5 426.80,195.5 427.20,200.0 425.20,200.0z" fill="url(#dw)"/>
<path d="M425.20,200.0 427.20,200.0 429.27,223.0 427.27,223.0z" fill="#ffffff"/>
<path d="M427.27,223.0 429.27,223.0 430.80,240.0 428.80,240.0z" fill="#ffffff"/>
<path d="M428.80,240.0 430.80,240.0 430.84,240.5 428.84,240.5z" fill="url(#dy)"/>
<path d="M428.85,240.5 430.85,240.5 432.46,258.4 430.46,258.4z" fill="url(#dw)"/>
<path d="M430.46,258.4 432.46,258.4 434.40,280.0 432.40,280.0z" fill="#ffffff"/>
<path d="M432.40,280.0 434.40,280.0 434.83,284.7 432.83,284.7z" fill="url(#dy)"/>
<path d="M432.83,284.7 434.83,284.7 437.00,308.9 435.00,308.9z" fill="url(#dw)"/>
<path d="M435.01,308.9 437.01,308.9 438.90,330.0 436.90,330.0z" fill="url(#dw)"/>
<path d="M436.90,330.0 438.90,330.0 440.18,344.2 438.18,344.2z" fill="#ffffff"/>
<path d="M438.18,344.2 440.18,344.2 441.73,361.5 439.73,361.5z" fill="#ffffff"/>
<path d="M439.73,361.5 441.73,361.5 443.40,380.0 441.40,380.0z" fill="url(#dy)"/>
<path d="M441.40,380.0 443.40,380.0 443.92,385.8 441.92,385.8z" fill="#ffffff"/>
<path d="M441.92,385.8 443.92,385.8 446.46,416.3 444.46,416.3z" fill="#ffffff"/>
<path d="M444.47,416.3 446.47,416.3 446.70,420.0 444.70,420.0z" fill="#ffffff"/>
<path d="M444.70,420.0 446.70,420.0 447.75,445.9 445.75,445.9z" fill="#ffffff"/>
<path d="M445.75,445.9 447.75,445.9 447.90,460.0 445.90,460.0z" fill="#ffffff"/>
<path d="M445.90,460.0 447.90,460.0 447.90,476.8 445.90,476.8z" fill="#ffffff"/>
<path d="M445.90,476.8 447.90,476.8 447.90,506.7 445.90,506.7z" fill="#ffffff"/>
<path d="M445.90,506.7 447.90,506.7 447.90,545.8 445.90,545.8z" fill="url(#dr)"/>
<path d="M445.90,545.8 447.90,545.8 447.90,567.2 445.90,567.2z" fill="url(#dw)"/>
<path d="M445.90,567.2 447.90,567.2 447.90,595.3 445.90,595.3z" fill="#ffffff"/>
<path d="M445.90,595.3 447.90,595.3 447.90,613.1 445.90,613.1z" fill="url(#dy)"/>
<path d="M445.90,613.1 447.90,613.1 447.90,647.5 445.90,647.5z" fill="url(#dw)"/>
<path d="M445.90,647.5 447.90,647.5 447.90,676.6 445.90,676.6z" fill="url(#dw)"/>
<path d="M445.90,676.6 447.90,676.6 447.90,680.0 445.90,680.0z" fill="url(#dw)"/>
<path d="M445.90,680.0 447.90,680.0 447.47,715.8 445.47,715.8z" fill="url(#dw)"/>
<path d="M445.46,715.8 447.46,715.8 447.36,720.0 445.36,720.0z" fill="url(#dr)"/>
<path d="M445.36,720.0 447.36,720.0 446.89,734.6 444.89,734.6z" fill="url(#dw)"/>
<path d="M444.89,734.6 446.89,734.6 445.73,760.0 443.73,760.0z" fill="url(#dy)"/>
<path d="M443.73,760.0 445.73,760.0 445.54,763.5 443.54,763.5z" fill="url(#dy)"/>
<path d="M443.53,763.5 445.53,763.5 444.10,785.9 442.10,785.9z" fill="url(#dw)"/>
<path d="M442.09,785.9 444.09,785.9 442.26,809.0 440.26,809.0z" fill="url(#dw)"/>
<path d="M420.82,118.0 422.82,118.0 425.29,145.4 423.29,145.4z" fill="url(#dy)"/>
<path d="M423.29,145.4 425.29,145.4 426.60,160.0 424.60,160.0z" fill="url(#dw)"/>
<path d="M424.60,160.0 426.60,160.0 427.11,165.7 425.11,165.7z" fill="url(#dw)"/>
<path d="M425.12,165.7 427.12,165.7 430.20,200.0 428.20,200.0z" fill="url(#dw)"/>
<path d="M428.20,200.0 430.20,200.0 430.51,203.4 428.51,203.4z" fill="url(#dw)"/>
<path d="M428.51,203.4 430.51,203.4 433.75,239.4 431.75,239.4z" fill="#ffffff"/>
<path d="M431.75,239.4 433.75,239.4 433.80,240.0 431.80,240.0z" fill="url(#dw)"/>
<path d="M431.80,240.0 433.80,240.0 435.92,263.6 433.92,263.6z" fill="#ffffff"/>
<path d="M433.93,263.6 435.93,263.6 437.40,280.0 435.40,280.0z" fill="url(#dr)"/>
<path d="M435.40,280.0 437.40,280.0 437.92,285.8 435.92,285.8z" fill="url(#dw)"/>
<path d="M435.92,285.8 437.92,285.8 439.65,305.0 437.65,305.0z" fill="#ffffff"/>
<path d="M437.65,305.0 439.65,305.0 441.54,326.0 439.54,326.0z" fill="url(#dw)"/>
<path d="M439.54,326.0 441.54,326.0 441.90,330.0 439.90,330.0z" fill="url(#dw)"/>
<path d="M439.90,330.0 441.90,330.0 443.57,348.6 441.57,348.6z" fill="#ffffff"/>
<path d="M441.57,348.6 443.57,348.6 445.69,372.1 443.69,372.1z" fill="url(#dw)"/>
<path d="M443.69,372.1 445.69,372.1 446.40,380.0 444.40,380.0z" fill="#ffffff"/>
<path d="M444.40,380.0 446.40,380.0 448.63,405.0 446.63,405.0z" fill="url(#dw)"/>
<path d="M446.63,405.0 448.63,405.0 449.70,420.0 447.70,420.0z" fill="#ffffff"/>
<path d="M447.70,420.0 449.70,420.0 449.84,422.4 447.84,422.4z" fill="url(#dy)"/>
<path d="M447.84,422.4 449.84,422.4 450.85,451.8 448.85,451.8z" fill="url(#dw)"/>
<path d="M448.85,451.8 450.85,451.8 450.90,460.0 448.90,460.0z" fill="#ffffff"/>
<path d="M448.90,460.0 450.90,460.0 450.90,487.2 448.90,487.2z" fill="#ffffff"/>
<path d="M448.90,487.2 450.90,487.2 450.90,509.0 448.90,509.0z" fill="#ffffff"/>
<path d="M448.90,509.0 450.90,509.0 450.90,540.2 448.90,540.2z" fill="url(#dw)"/>
<path d="M448.90,540.2 450.90,540.2 450.90,562.5 448.90,562.5z" fill="url(#dy)"/>
<path d="M448.90,562.5 450.90,562.5 450.90,600.0 448.90,600.0z" fill="#ffffff"/>
<path d="M448.90,600.0 450.90,600.0 450.90,628.0 448.90,628.0z" fill="url(#dy)"/>
<path d="M448.90,628.0 450.90,628.0 450.90,652.8 448.90,652.8z" fill="url(#dw)"/>
<path d="M448.90,652.8 450.90,652.8 450.90,680.0 448.90,680.0z" fill="#ffffff"/>
<path d="M448.90,680.0 450.90,680.0 450.86,691.0 448.86,691.0z" fill="#ffffff"/>
<path d="M448.86,691.0 450.86,691.0 450.38,719.3 448.38,719.3z" fill="url(#dr)"/>
<path d="M448.38,719.3 450.38,719.3 450.36,720.0 448.36,720.0z" fill="#ffffff"/>
<path d="M448.36,720.0 450.36,720.0 449.49,744.5 447.49,744.5z" fill="url(#dw)"/>
<path d="M447.49,744.5 449.49,744.5 448.73,760.0 446.73,760.0z" fill="url(#dw)"/>
<path d="M446.73,760.0 448.73,760.0 448.45,765.0 446.45,765.0z" fill="url(#dw)"/>
<path d="M446.45,765.0 448.45,765.0 447.26,783.6 445.26,783.6z" fill="#ffffff"/>
<path d="M445.26,783.6 447.26,783.6 445.42,807.1 443.42,807.1z" fill="url(#dw)"/>
<path d="M443.42,807.1 445.42,807.1 445.26,809.0 443.26,809.0z" fill="url(#dw)"/>
<path d="M427.02,118.0 429.02,118.0 431.96,150.7 429.96,150.7z" fill="url(#dr)"/>
<path d="M429.96,150.7 431.96,150.7 432.80,160.0 430.80,160.0z" fill="url(#dw)"/>
<path d="M430.80,160.0 432.80,160.0 433.42,166.9 431.42,166.9z" fill="url(#dr)"/>
<path d="M431.42,166.9 433.42,166.9 435.25,187.2 433.25,187.2z" fill="url(#dy)"/>
<path d="M433.25,187.2 435.25,187.2 436.40,200.0 434.40,200.0z" fill="url(#dw)"/>
<path d="M434.40,200.0 436.40,200.0 437.30,210.0 435.30,210.0z" fill="url(#dy)"/>
<path d="M435.30,210.0 437.30,210.0 439.12,230.3 437.12,230.3z" fill="url(#dr)"/>
<path d="M437.12,230.3 439.12,230.3 440.00,240.0 438.00,240.0z" fill="url(#dw)"/>
<path d="M438.00,240.0 440.00,240.0 442.32,265.8 440.32,265.8z" fill="url(#dw)"/>
<path d="M440.32,265.8 442.32,265.8 443.60,280.0 441.60,280.0z" fill="#ffffff"/>
<path d="M441.60,280.0 443.60,280.0 445.81,304.6 443.81,304.6z" fill="#ffffff"/>
<path d="M443.81,304.6 445.81,304.6 448.10,330.0 446.10,330.0z" fill="#ffffff"/>
<path d="M446.10,330.0 448.10,330.0 448.27,331.9 446.27,331.9z" fill="url(#dw)"/>
<path d="M446.27,331.9 448.27,331.9 450.43,355.9 448.43,355.9z" fill="url(#dw)"/>
<path d="M448.43,355.9 450.43,355.9 452.60,380.0 450.60,380.0z" fill="#ffffff"/>
<path d="M450.60,380.0 452.60,380.0 453.69,392.2 451.69,392.2z" fill="#ffffff"/>
<path d="M451.70,392.2 453.70,392.2 455.90,420.0 453.90,420.0z" fill="#ffffff"/>
<path d="M453.90,420.0 455.90,420.0 456.25,426.3 454.25,426.3z" fill="#ffffff"/>
<path d="M454.25,426.3 456.25,426.3 457.10,457.9 455.10,457.9z" fill="#ffffff"/>
<path d="M455.10,457.9 457.10,457.9 457.10,460.0 455.10,460.0z" fill="#ffffff"/>
<path d="M455.10,460.0 457.10,460.0 457.10,496.1 455.10,496.1z" fill="#ffffff"/>
<path d="M455.10,496.1 457.10,496.1 457.10,513.9 455.10,513.9z" fill="#ffffff"/>
<path d="M455.10,513.9 457.10,513.9 457.10,544.1 455.10,544.1z" fill="#ffffff"/>
<path d="M455.10,544.1 457.10,544.1 457.10,566.5 455.10,566.5z" fill="url(#dw)"/>
<path d="M455.10,566.5 457.10,566.5 457.10,605.7 455.10,605.7z" fill="#ffffff"/>
<path d="M455.10,605.7 457.10,605.7 457.10,623.3 455.10,623.3z" fill="#ffffff"/>
<path d="M455.10,623.3 457.10,623.3 457.10,660.5 455.10,660.5z" fill="#ffffff"/>
<path d="M455.10,660.5 457.10,660.5 457.10,680.0 455.10,680.0z" fill="#ffffff"/>
<path d="M455.10,680.0 457.10,680.0 456.98,698.5 454.98,698.5z" fill="#ffffff"/>
<path d="M454.98,698.5 456.98,698.5 456.66,715.9 454.66,715.9z" fill="url(#dw)"/>
<path d="M454.66,715.9 456.66,715.9 456.56,720.0 454.56,720.0z" fill="#ffffff"/>
<path d="M454.56,720.0 456.56,720.0 455.29,753.1 453.29,753.1z" fill="url(#dw)"/>
<path d="M453.29,753.1 455.29,753.1 454.93,760.0 452.93,760.0z" fill="url(#dw)"/>
<path d="M452.93,760.0 454.93,760.0 453.62,781.2 451.62,781.2z" fill="url(#dw)"/>
<path d="M451.62,781.2 453.62,781.2 451.46,809.0 449.46,809.0z" fill="url(#dr)"/>
<path d="M430.02,118.0 432.02,118.0 434.32,143.6 432.32,143.6z" fill="url(#dw)"/>
<path d="M432.32,143.6 434.32,143.6 435.80,160.0 433.80,160.0z" fill="url(#dy)"/>
<path d="M433.80,160.0 435.80,160.0 436.05,162.8 434.05,162.8z" fill="url(#dw)"/>
<path d="M434.05,162.8 436.05,162.8 439.22,198.0 437.22,198.0z" fill="url(#dw)"/>
<path d="M437.22,198.0 439.22,198.0 439.40,200.0 437.40,200.0z" fill="url(#dw)"/>
<path d="M437.40,200.0 439.40,200.0 441.77,226.3 439.77,226.3z" fill="url(#dr)"/>
<path d="M439.77,226.3 441.77,226.3 443.00,240.0 441.00,240.0z" fill="url(#dy)"/>
<path d="M441.00,240.0 443.00,240.0 444.21,253.5 442.21,253.5z" fill="url(#dy)"/>
<path d="M442.21,253.5 444.21,253.5 446.60,280.0 444.60,280.0z" fill="#ffffff"/>
<path d="M444.60,280.0 446.60,280.0 446.96,284.0 444.96,284.0z" fill="#ffffff"/>
<path d="M444.96,284.0 446.96,284.0 449.42,311.4 447.42,311.4z" fill="url(#dy)"/>
<path d="M447.42,311.4 449.42,311.4 451.10,330.0 449.10,330.0z" fill="url(#dw)"/>
<path d="M449.10,330.0 451.10,330.0 451.80,337.8 449.80,337.8z" fill="#ffffff"/>
<path d="M449.80,337.8 451.80,337.8 453.33,354.8 451.33,354.8z" fill="#ffffff"/>
<path d="M451.33,354.8 453.33,354.8 455.60,380.0 453.60,380.0z" fill="#ffffff"/>
<path d="M453.60,380.0 455.60,380.0 456.49,389.9 454.49,389.9z" fill="url(#dw)"/>
<path d="M454.50,389.9 456.50,389.9 458.85,419.2 456.85,419.2z" fill="#ffffff"/>
<path d="M456.85,419.2 458.85,419.2 458.90,420.0 456.90,420.0z" fill="#ffffff"/>
<path d="M456.90,420.0 458.90,420.0 460.06,452.3 458.06,452.3z" fill="url(#dy)"/>
<path d="M458.06,452.3 460.06,452.3 460.10,460.0 458.10,460.0z" fill="#ffffff"/>
<path d="M458.10,460.0 460.10,460.0 460.10,469.7 458.10,469.7z" fill="#ffffff"/>
<path d="M458.10,469.7 460.10,469.7 460.10,497.0 458.10,497.0z" fill="url(#dy)"/>
<path d="M458.10,497.0 460.10,497.0 460.10,521.3 458.10,521.3z" fill="url(#dy)"/>
<path d="M458.10,521.3 460.10,521.3 460.10,549.9 458.10,549.9z" fill="#ffffff"/>
<path d="M458.10,549.9 460.10,549.9 460.10,582.6 458.10,582.6z" fill="#ffffff"/>
<path d="M458.10,582.6 460.10,582.6 460.10,604.7 458.10,604.7z" fill="url(#dy)"/>
<path d="M458.10,604.7 460.10,604.7 460.10,638.3 458.10,638.3z" fill="url(#dw)"/>
<path d="M458.10,638.3 460.10,638.3 460.10,671.0 458.10,671.0z" fill="url(#dy)"/>
<path d="M458.10,671.0 460.10,671.0 460.10,680.0 458.10,680.0z" fill="url(#dw)"/>
<path d="M458.10,680.0 460.10,680.0 460.07,688.7 458.07,688.7z" fill="#ffffff"/>
<path d="M458.07,688.7 460.07,688.7 459.56,720.0 457.56,720.0z" fill="url(#dw)"/>
<path d="M457.56,720.0 459.56,720.0 459.40,725.4 457.40,725.4z" fill="#ffffff"/>
<path d="M457.40,725.4 459.40,725.4 458.12,756.4 456.12,756.4z" fill="#ffffff"/>
<path d="M456.12,756.4 458.12,756.4 457.93,760.0 455.93,760.0z" fill="url(#dy)"/>
<path d="M455.93,760.0 457.93,760.0 456.79,778.8 454.79,778.8z" fill="url(#dw)"/>
<path d="M454.79,778.8 456.79,778.8 454.46,809.0 452.46,809.0z" fill="url(#dy)"/>
<path d="M436.62,118.0 438.62,118.0 440.99,144.3 438.99,144.3z" fill="url(#dr)"/>
<path d="M438.99,144.3 440.99,144.3 442.40,160.0 440.40,160.0z" fill="url(#dy)"/>
<path d="M440.40,160.0 442.40,160.0 444.48,183.2 442.48,183.2z" fill="url(#dw)"/>
<path d="M442.49,183.2 444.49,183.2 446.00,200.0 444.00,200.0z" fill="url(#dy)"/>
<path d="M444.00,200.0 446.00,200.0 447.07,211.9 445.07,211.9z" fill="url(#dr)"/>
<path d="M445.07,211.9 447.07,211.9 448.71,230.2 446.71,230.2z" fill="url(#dy)"/>
<path d="M446.72,230.2 448.72,230.2 449.60,240.0 447.60,240.0z" fill="#ffffff"/>
<path d="M447.60,240.0 449.60,240.0 450.95,255.0 448.95,255.0z" fill="#ffffff"/>
<path d="M448.95,255.0 450.95,255.0 453.15,279.5 451.15,279.5z" fill="#ffffff"/>
<path d="M451.15,279.5 453.15,279.5 453.20,280.0 451.20,280.0z" fill="url(#dr)"/>
<path d="M451.20,280.0 453.20,280.0 454.92,299.1 452.92,299.1z" fill="url(#dw)"/>
<path d="M452.92,299.1 454.92,299.1 457.70,330.0 455.70,330.0z" fill="url(#dw)"/>
<path d="M455.71,330.1 457.71,330.1 460.34,359.4 458.34,359.4z" fill="#ffffff"/>
<path d="M458.35,359.4 460.35,359.4 462.20,380.0 460.20,380.0z" fill="#ffffff"/>
<path d="M460.20,380.0 462.20,380.0 463.30,392.3 461.30,392.3z" fill="url(#dw)"/>
<path d="M461.30,392.3 463.30,392.3 465.50,420.0 463.50,420.0z" fill="#ffffff"/>
<path d="M463.50,420.0 465.50,420.0 466.03,430.0 464.03,430.0z" fill="#ffffff"/>
<path d="M464.03,430.0 466.03,430.0 466.64,451.1 464.64,451.1z" fill="#ffffff"/>
<path d="M464.64,451.1 466.64,451.1 466.70,460.0 464.70,460.0z" fill="#ffffff"/>
<path d="M464.70,460.0 466.70,460.0 466.70,473.8 464.70,473.8z" fill="#ffffff"/>
<path d="M464.70,473.8 466.70,473.8 466.70,505.1 464.70,505.1z" fill="url(#dw)"/>
<path d="M464.70,505.1 466.70,505.1 466.70,538.8 464.70,538.8z" fill="#ffffff"/>
<path d="M464.70,538.8 466.70,538.8 466.70,571.4 464.70,571.4z" fill="#ffffff"/>
<path d="M464.70,571.4 466.70,571.4 466.70,588.7 464.70,588.7z" fill="url(#dw)"/>
<path d="M464.70,588.7 466.70,588.7 466.70,623.6 464.70,623.6z" fill="url(#dw)"/>
<path d="M464.70,623.6 466.70,623.6 466.70,645.4 464.70,645.4z" fill="#ffffff"/>
<path d="M464.70,645.4 466.70,645.4 466.70,663.2 464.70,663.2z" fill="#ffffff"/>
<path d="M464.70,663.2 466.70,663.2 466.70,680.0 464.70,680.0z" fill="#ffffff"/>
<path d="M464.70,680.0 466.70,680.0 466.53,702.4 464.53,702.4z" fill="url(#dy)"/>
<path d="M464.53,702.4 466.53,702.4 466.16,720.0 464.16,720.0z" fill="#ffffff"/>
<path d="M464.16,720.0 466.16,720.0 466.13,721.1 464.13,721.1z" fill="url(#dw)"/>
<path d="M464.13,721.1 466.13,721.1 464.54,759.9 462.54,759.9z" fill="#ffffff"/>
<path d="M462.53,760.0 464.53,760.0 463.24,781.0 461.24,781.0z" fill="url(#dy)"/>
<path d="M461.24,781.0 463.24,781.0 461.66,801.9 459.66,801.9z" fill="url(#dw)"/>
<path d="M459.66,801.9 461.66,801.9 461.06,809.0 459.06,809.0z" fill="#ffffff"/>
<path d="M439.62,118.0 441.62,118.0 444.26,147.4 442.26,147.4z" fill="url(#dy)"/>
<path d="M442.26,147.4 444.26,147.4 445.40,160.0 443.40,160.0z" fill="url(#dw)"/>
<path d="M443.40,160.0 445.40,160.0 446.85,176.1 444.85,176.1z" fill="url(#dw)"/>
<path d="M444.85,176.1 446.85,176.1 449.00,200.0 447.00,200.0z" fill="url(#dy)"/>
<path d="M447.00,200.0 449.00,200.0 449.66,207.3 447.66,207.3z" fill="url(#dw)"/>
<path d="M447.66,207.3 449.66,207.3 452.60,240.0 450.60,240.0z" fill="url(#dw)"/>
<path d="M450.60,240.0 452.60,240.0 452.92,243.5 450.92,243.5z" fill="#ffffff"/>
<path d="M450.92,243.5 452.92,243.5 456.19,279.9 454.19,279.9z" fill="#ffffff"/>
<path d="M454.20,280.0 456.20,280.0 458.37,304.1 456.37,304.1z" fill="#ffffff"/>
<path d="M456.37,304.1 458.37,304.1 460.70,330.0 458.70,330.0z" fill="#ffffff"/>
<path d="M458.72,330.2 460.72,330.2 462.48,349.8 460.48,349.8z" fill="url(#dy)"/>
<path d="M460.48,349.8 462.48,349.8 465.18,379.8 463.18,379.8z" fill="url(#dw)"/>
<path d="M463.20,380.0 465.20,380.0 467.44,405.1 465.44,405.1z" fill="#ffffff"/>
<path d="M465.44,405.1 467.44,405.1 468.50,420.0 466.50,420.0z" fill="#ffffff"/>
<path d="M466.50,420.0 468.50,420.0 469.33,437.8 467.33,437.8z" fill="#ffffff"/>
<path d="M467.33,437.8 469.33,437.8 469.70,460.0 467.70,460.0z" fill="#ffffff"/>
<path d="M467.70,460.0 469.70,460.0 469.70,461.1 467.70,461.1z" fill="url(#dw)"/>
<path d="M467.70,461.1 469.70,461.1 469.70,485.8 467.70,485.8z" fill="#ffffff"/>
<path d="M467.70,485.8 469.70,485.8 469.70,517.4 467.70,517.4z" fill="#ffffff"/>
<path d="M467.70,517.4 469.70,517.4 469.70,537.0 467.70,537.0z" fill="url(#dy)"/>
<path d="M467.70,537.0 469.70,537.0 469.70,558.7 467.70,558.7z" fill="#ffffff"/>
<path d="M467.70,558.7 469.70,558.7 469.70,588.0 467.70,588.0z" fill="#ffffff"/>
<path d="M467.70,588.0 469.70,588.0 469.70,620.0 467.70,620.0z" fill="#ffffff"/>
<path d="M467.70,620.0 469.70,620.0 469.70,638.9 467.70,638.9z" fill="#ffffff"/>
<path d="M467.70,638.9 469.70,638.9 469.70,664.8 467.70,664.8z" fill="#ffffff"/>
<path d="M467.70,664.8 469.70,664.8 469.70,680.0 467.70,680.0z" fill="#ffffff"/>
<path d="M467.70,680.0 469.70,680.0 469.65,691.7 467.65,691.7z" fill="url(#dy)"/>
<path d="M467.65,691.7 469.65,691.7 469.23,717.4 467.23,717.4z" fill="url(#dr)"/>
<path d="M467.23,717.4 469.23,717.4 469.16,720.0 467.16,720.0z" fill="url(#dr)"/>
<path d="M467.16,720.0 469.16,720.0 468.67,735.0 466.67,735.0z" fill="url(#dw)"/>
<path d="M466.67,735.0 468.67,735.0 467.53,760.0 465.53,760.0z" fill="#ffffff"/>
<path d="M465.53,760.0 467.53,760.0 467.10,767.5 465.10,767.5z" fill="url(#dr)"/>
<path d="M465.10,767.5 467.10,767.5 464.80,800.3 462.80,800.3z" fill="url(#dy)"/>
<path d="M462.79,800.3 464.79,800.3 464.06,809.0 462.06,809.0z" fill="#ffffff"/>
<path d="M445.72,118.0 447.72,118.0 450.86,152.9 448.86,152.9z" fill="url(#dy)"/>
<path d="M448.86,152.9 450.86,152.9 451.50,160.0 449.50,160.0z" fill="url(#dw)"/>
<path d="M449.50,160.0 451.50,160.0 452.90,175.6 450.90,175.6z" fill="url(#dw)"/>
<path d="M450.90,175.6 452.90,175.6 454.98,198.7 452.98,198.7z" fill="url(#dw)"/>
<path d="M452.98,198.7 454.98,198.7 455.10,200.0 453.10,200.0z" fill="url(#dw)"/>
<path d="M453.10,200.0 455.10,200.0 457.36,225.1 455.36,225.1z" fill="url(#dw)"/>
<path d="M455.36,225.1 457.36,225.1 458.70,240.0 456.70,240.0z" fill="url(#dw)"/>
<path d="M456.70,240.0 458.70,240.0 460.60,261.1 458.60,261.1z" fill="#ffffff"/>
<path d="M458.60,261.1 460.60,261.1 462.30,280.0 460.30,280.0z" fill="#ffffff"/>
<path d="M460.30,280.0 462.30,280.0 463.57,294.1 461.57,294.1z" fill="#ffffff"/>
<path d="M461.57,294.1 463.57,294.1 466.80,330.0 464.80,330.0z" fill="#ffffff"/>
<path d="M464.80,330.0 466.80,330.0 467.15,333.9 465.15,333.9z" fill="url(#dw)"/>
<path d="M465.15,333.9 467.15,333.9 468.60,350.0 466.60,350.0z" fill="#ffffff"/>
<path d="M466.60,350.0 468.60,350.0 470.98,376.5 468.98,376.5z" fill="#ffffff"/>
<path d="M468.98,376.5 470.98,376.5 471.30,380.0 469.30,380.0z" fill="#ffffff"/>
<path d="M469.30,380.0 471.30,380.0 473.72,407.3 471.72,407.3z" fill="#ffffff"/>
<path d="M471.72,407.3 473.72,407.3 474.60,420.0 472.60,420.0z" fill="#ffffff"/>
<path d="M472.60,420.0 474.60,420.0 475.30,434.1 473.30,434.1z" fill="url(#dw)"/>
<path d="M473.30,434.1 475.30,434.1 475.80,459.4 473.80,459.4z" fill="#ffffff"/>
<path d="M473.80,459.4 475.80,459.4 475.80,460.0 473.80,460.0z" fill="#ffffff"/>
<path d="M473.80,460.0 475.80,460.0 475.80,497.0 473.80,497.0z" fill="#ffffff"/>
<path d="M473.80,497.0 475.80,497.0 475.80,525.2 473.80,525.2z" fill="url(#dy)"/>
<path d="M473.80,525.2 475.80,525.2 475.80,544.8 473.80,544.8z" fill="#ffffff"/>
<path d="M473.80,544.8 475.80,544.8 475.80,570.1 473.80,570.1z" fill="#ffffff"/>
<path d="M473.80,570.1 475.80,570.1 475.80,595.7 473.80,595.7z" fill="url(#dw)"/>
<path d="M473.80,595.7 475.80,595.7 475.80,618.5 473.80,618.5z" fill="url(#dy)"/>
<path d="M473.80,618.5 475.80,618.5 475.80,636.9 473.80,636.9z" fill="#ffffff"/>
<path d="M473.80,636.9 475.80,636.9 475.80,673.0 473.80,673.0z" fill="#ffffff"/>
<path d="M473.80,673.0 475.80,673.0 475.80,680.0 473.80,680.0z" fill="#ffffff"/>
<path d="M473.80,680.0 475.80,680.0 475.57,705.8 473.57,705.8z" fill="#ffffff"/>
<path d="M473.57,705.8 475.57,705.8 475.26,720.0 473.26,720.0z" fill="#ffffff"/>
<path d="M473.26,720.0 475.26,720.0 474.36,745.1 472.36,745.1z" fill="url(#dby)"/>
<path d="M472.36,745.1 474.36,745.1 473.63,760.0 471.63,760.0z" fill="url(#db)"/>
<path d="M471.63,760.0 473.63,760.0 472.57,777.7 470.57,777.7z" fill="#ffffff"/>
<path d="M470.56,777.7 472.56,777.7 470.45,805.6 468.45,805.6z" fill="url(#db)"/>
<path d="M468.45,805.6 470.45,805.6 470.16,809.0 468.16,809.0z" fill="url(#dw)"/>
<path d="M448.72,118.0 450.72,118.0 453.89,153.2 451.89,153.2z" fill="url(#dw)"/>
<path d="M451.89,153.2 453.89,153.2 454.50,160.0 452.50,160.0z" fill="url(#dr)"/>
<path d="M452.50,160.0 454.50,160.0 457.34,191.5 455.34,191.5z" fill="url(#dw)"/>
<path d="M455.34,191.5 457.34,191.5 458.10,200.0 456.10,200.0z" fill="url(#dw)"/>
<path d="M456.10,200.0 458.10,200.0 460.71,229.1 458.71,229.1z" fill="url(#dy)"/>
<path d="M458.72,229.1 460.72,229.1 461.70,240.0 459.70,240.0z" fill="url(#dw)"/>
<path d="M459.70,240.0 461.70,240.0 464.19,267.6 462.19,267.6z" fill="#ffffff"/>
<path d="M462.19,267.6 464.19,267.6 465.30,280.0 463.30,280.0z" fill="#ffffff"/>
<path d="M463.30,280.0 465.30,280.0 466.44,292.7 464.44,292.7z" fill="#ffffff"/>
<path d="M464.45,292.7 466.45,292.7 468.85,319.5 466.85,319.5z" fill="url(#dy)"/>
<path d="M466.85,319.5 468.85,319.5 469.80,330.0 467.80,330.0z" fill="url(#dr)"/>
<path d="M467.80,330.0 469.80,330.0 472.18,356.5 470.18,356.5z" fill="#ffffff"/>
<path d="M470.18,356.5 472.18,356.5 473.98,376.5 471.98,376.5z" fill="#ffffff"/>
<path d="M471.99,376.5 473.99,376.5 474.30,380.0 472.30,380.0z" fill="#ffffff"/>
<path d="M472.30,380.0 474.30,380.0 477.22,414.1 475.22,414.1z" fill="#ffffff"/>
<path d="M475.22,414.1 477.22,414.1 477.60,420.0 475.60,420.0z" fill="#ffffff"/>
<path d="M475.60,420.0 477.60,420.0 478.72,449.7 476.72,449.7z" fill="#ffffff"/>
<path d="M476.72,449.7 478.72,449.7 478.80,460.0 476.80,460.0z" fill="url(#dy)"/>
<path d="M476.80,460.0 478.80,460.0 478.80,473.0 476.80,473.0z" fill="#ffffff"/>
<path d="M476.80,473.0 478.80,473.0 478.80,489.1 476.80,489.1z" fill="#ffffff"/>
<path d="M476.80,489.1 478.80,489.1 478.80,517.8 476.80,517.8z" fill="#ffffff"/>
<path d="M476.80,517.8 478.80,517.8 478.80,538.5 476.80,538.5z" fill="#ffffff"/>
<path d="M476.80,538.5 478.80,538.5 478.80,559.0 476.80,559.0z" fill="#ffffff"/>
<path d="M476.80,559.0 478.80,559.0 478.80,584.2 476.80,584.2z" fill="#ffffff"/>
<path d="M476.80,584.2 478.80,584.2 478.80,610.0 476.80,610.0z" fill="url(#dw)"/>
<path d="M476.80,610.0 478.80,610.0 478.80,643.8 476.80,643.8z" fill="url(#dy)"/>
<path d="M476.80,643.8 478.80,643.8 478.80,676.5 476.80,676.5z" fill="url(#db)"/>
<path d="M476.80,676.5 478.80,676.5 478.80,680.0 476.80,680.0z" fill="url(#db)"/>
<path d="M476.80,680.0 478.80,680.0 478.46,711.8 476.46,711.8z" fill="url(#dby)"/>
<path d="M476.46,711.8 478.46,711.8 478.26,720.0 476.26,720.0z" fill="url(#db)"/>
<path d="M476.26,720.0 478.26,720.0 477.30,746.5 475.30,746.5z" fill="url(#db)"/>
<path d="M475.30,746.5 477.30,746.5 476.63,760.0 474.63,760.0z" fill="url(#db)"/>
<path d="M474.63,760.0 476.63,760.0 475.92,772.1 473.92,772.1z" fill="url(#dby)"/>
<path d="M473.92,772.1 475.92,772.1 474.20,796.5 472.20,796.5z" fill="url(#db)"/>
<path d="M472.20,796.5 474.20,796.5 473.16,809.0 471.16,809.0z" fill="url(#db)"/>
<path d="M454.92,118.0 456.92,118.0 460.29,155.5 458.29,155.5z" fill="url(#dy)"/>
<path d="M458.29,155.5 460.29,155.5 460.70,160.0 458.70,160.0z" fill="url(#dw)"/>
<path d="M458.70,160.0 460.70,160.0 463.42,190.3 461.42,190.3z" fill="url(#dr)"/>
<path d="M461.43,190.3 463.43,190.3 464.30,200.0 462.30,200.0z" fill="url(#dy)"/>
<path d="M462.30,200.0 464.30,200.0 466.47,224.2 464.47,224.2z" fill="url(#dw)"/>
<path d="M464.47,224.2 466.47,224.2 467.90,240.0 465.90,240.0z" fill="#ffffff"/>
<path d="M465.90,240.0 467.90,240.0 469.82,261.4 467.82,261.4z" fill="#ffffff"/>
<path d="M467.83,261.4 469.83,261.4 471.50,280.0 469.50,280.0z" fill="url(#dy)"/>
<path d="M469.50,280.0 471.50,280.0 473.07,297.5 471.07,297.5z" fill="#ffffff"/>
<path d="M471.07,297.5 473.07,297.5 475.06,319.6 473.06,319.6z" fill="#ffffff"/>
<path d="M473.06,319.6 475.06,319.6 476.00,330.0 474.00,330.0z" fill="url(#dr)"/>
<path d="M474.00,330.0 476.00,330.0 478.46,357.4 476.46,357.4z" fill="url(#dw)"/>
<path d="M476.46,357.4 478.46,357.4 480.50,380.0 478.50,380.0z" fill="#ffffff"/>
<path d="M478.50,380.0 480.50,380.0 482.00,396.7 480.00,396.7z" fill="#ffffff"/>
<path d="M480.00,396.7 482.00,396.7 483.80,420.0 481.80,420.0z" fill="#ffffff"/>
<path d="M481.80,420.0 483.80,420.0 484.18,426.9 482.18,426.9z" fill="#ffffff"/>
<path d="M482.18,426.9 484.18,426.9 484.99,456.8 482.99,456.8z" fill="#ffffff"/>
<path d="M482.99,456.8 484.99,456.8 485.00,460.0 483.00,460.0z" fill="#ffffff"/>
<path d="M483.00,460.0 485.00,460.0 485.00,492.8 483.00,492.8z" fill="#ffffff"/>
<path d="M483.00,492.8 485.00,492.8 485.00,528.1 483.00,528.1z" fill="#ffffff"/>
<path d="M483.00,528.1 485.00,528.1 485.00,565.7 483.00,565.7z" fill="#ffffff"/>
<path d="M483.00,565.7 485.00,565.7 485.00,592.9 483.00,592.9z" fill="#ffffff"/>
<path d="M483.00,592.9 485.00,592.9 485.00,629.8 483.00,629.8z" fill="url(#dw)"/>
<path d="M483.00,629.8 485.00,629.8 485.00,656.4 483.00,656.4z" fill="#ffffff"/>
<path d="M483.00,656.4 485.00,656.4 485.00,680.0 483.00,680.0z" fill="url(#db)"/>
<path d="M483.00,680.0 485.00,680.0 485.00,683.0 483.00,683.0z" fill="url(#db)"/>
<path d="M483.00,683.0 485.00,683.0 484.68,710.9 482.68,710.9z" fill="url(#dby)"/>
<path d="M482.68,710.9 484.68,710.9 484.46,720.0 482.46,720.0z" fill="url(#db)"/>
<path d="M482.46,720.0 484.46,720.0 483.73,741.2 481.73,741.2z" fill="url(#db)"/>
<path d="M481.73,741.2 483.73,741.2 482.94,757.9 480.94,757.9z" fill="url(#dby)"/>
<path d="M480.94,757.9 482.94,757.9 482.83,760.0 480.83,760.0z" fill="url(#db)"/>
<path d="M480.83,760.0 482.83,760.0 481.65,779.4 479.65,779.4z" fill="url(#db)"/>
<path d="M479.65,779.4 481.65,779.4 479.36,809.0 477.36,809.0z" fill="#ffffff"/>
<path d="M457.92,118.0 459.92,118.0 461.44,134.9 459.44,134.9z" fill="url(#dw)"/>
<path d="M459.44,134.9 461.44,134.9 463.33,155.9 461.33,155.9z" fill="url(#dw)"/>
<path d="M461.33,155.9 463.33,155.9 463.70,160.0 461.70,160.0z" fill="url(#dr)"/>
<path d="M461.70,160.0 463.70,160.0 465.25,177.3 463.25,177.3z" fill="url(#dw)"/>
<path d="M463.26,177.3 465.26,177.3 467.30,200.0 465.30,200.0z" fill="url(#dw)"/>
<path d="M465.30,200.0 467.30,200.0 468.39,212.1 466.39,212.1z" fill="url(#dw)"/>
<path d="M466.39,212.1 468.39,212.1 470.90,240.0 468.90,240.0z" fill="url(#dy)"/>
<path d="M468.93,240.3 470.93,240.3 474.26,277.3 472.26,277.3z" fill="url(#dw)"/>
<path d="M472.26,277.3 474.26,277.3 474.50,280.0 472.50,280.0z" fill="#ffffff"/>
<path d="M472.50,280.0 474.50,280.0 476.48,302.0 474.48,302.0z" fill="#ffffff"/>
<path d="M474.48,302.0 476.48,302.0 478.24,321.6 476.24,321.6z" fill="#ffffff"/>
<path d="M476.24,321.6 478.24,321.6 479.00,330.0 477.00,330.0z" fill="#ffffff"/>
<path d="M477.00,330.0 479.00,330.0 480.30,344.5 478.30,344.5z" fill="url(#dy)"/>
<path d="M478.31,344.5 480.31,344.5 482.16,365.1 480.16,365.1z" fill="#ffffff"/>
<path d="M480.16,365.1 482.16,365.1 483.50,380.0 481.50,380.0z" fill="#ffffff"/>
<path d="M481.50,380.0 483.50,380.0 485.26,399.5 483.26,399.5z" fill="#ffffff"/>
<path d="M483.26,399.5 485.26,399.5 486.80,420.0 484.80,420.0z" fill="#ffffff"/>
<path d="M484.80,420.0 486.80,420.0 487.64,438.1 485.64,438.1z" fill="#ffffff"/>
<path d="M485.64,438.1 487.64,438.1 488.00,460.0 486.00,460.0z" fill="#ffffff"/>
<path d="M486.00,460.0 488.00,460.0 488.00,467.2 486.00,467.2z" fill="#ffffff"/>
<path d="M486.00,467.2 488.00,467.2 488.00,496.4 486.00,496.4z" fill="#ffffff"/>
<path d="M486.00,496.4 488.00,496.4 488.00,526.0 486.00,526.0z" fill="#ffffff"/>
<path d="M486.00,526.0 488.00,526.0 488.00,558.7 486.00,558.7z" fill="#ffffff"/>
<path d="M486.00,558.7 488.00,558.7 488.00,594.7 486.00,594.7z" fill="#ffffff"/>
<path d="M486.00,594.7 488.00,594.7 488.00,630.5 486.00,630.5z" fill="#ffffff"/>
<path d="M486.00,630.5 488.00,630.5 488.00,657.2 486.00,657.2z" fill="url(#db)"/>
<path d="M486.00,657.2 488.00,657.2 488.00,680.0 486.00,680.0z" fill="url(#db)"/>
<path d="M486.00,680.0 488.00,680.0 487.99,685.2 485.99,685.2z" fill="#ffffff"/>
<path d="M485.99,685.2 487.99,685.2 487.64,712.4 485.64,712.4z" fill="#ffffff"/>
<path d="M485.64,712.4 487.64,712.4 487.46,720.0 485.46,720.0z" fill="url(#db)"/>
<path d="M485.46,720.0 487.46,720.0 487.07,732.3 485.07,732.3z" fill="url(#dby)"/>
<path d="M485.07,732.3 487.07,732.3 486.34,750.1 484.34,750.1z" fill="#ffffff"/>
<path d="M484.33,750.1 486.33,750.1 485.83,760.0 483.83,760.0z" fill="#ffffff"/>
<path d="M483.83,760.0 485.83,760.0 484.20,785.8 482.20,785.8z" fill="url(#db)"/>
<path d="M482.20,785.8 484.20,785.8 482.36,809.0 480.36,809.0z" fill="url(#dby)"/>
<path d="M467.82,118.0 469.82,118.0 471.77,139.6 469.77,139.6z" fill="url(#dy)"/>
<path d="M469.77,139.6 471.77,139.6 473.60,160.0 471.60,160.0z" fill="url(#dw)"/>
<path d="M471.60,160.0 473.60,160.0 473.92,163.5 471.92,163.5z" fill="url(#dw)"/>
<path d="M471.92,163.5 473.92,163.5 477.16,199.5 475.16,199.5z" fill="url(#dy)"/>
<path d="M475.20,200.0 477.20,200.0 478.95,219.4 476.95,219.4z" fill="#ffffff"/>
<path d="M476.95,219.4 478.95,219.4 480.80,240.0 478.80,240.0z" fill="url(#dy)"/>
<path d="M478.80,240.0 480.80,240.0 481.06,242.9 479.06,242.9z" fill="#ffffff"/>
<path d="M479.07,242.9 481.07,242.9 483.20,266.6 481.20,266.6z" fill="#ffffff"/>
<path d="M481.20,266.6 483.20,266.6 484.40,280.0 482.40,280.0z" fill="#ffffff"/>
<path d="M482.40,280.0 484.40,280.0 485.94,297.1 483.94,297.1z" fill="#ffffff"/>
<path d="M483.94,297.1 485.94,297.1 488.90,330.0 486.90,330.0z" fill="#ffffff"/>
<path d="M486.92,330.2 488.92,330.2 490.70,350.0 488.70,350.0z" fill="#ffffff"/>
<path d="M488.70,350.0 490.70,350.0 493.07,376.4 491.07,376.4z" fill="#ffffff"/>
<path d="M491.08,376.4 493.08,376.4 493.40,380.0 491.40,380.0z" fill="#ffffff"/>
<path d="M491.40,380.0 493.40,380.0 496.25,413.1 494.25,413.1z" fill="#ffffff"/>
<path d="M494.25,413.1 496.25,413.1 496.70,420.0 494.70,420.0z" fill="#ffffff"/>
<path d="M494.70,420.0 496.70,420.0 497.73,444.8 495.73,444.8z" fill="#ffffff"/>
<path d="M495.73,444.8 497.73,444.8 497.90,460.0 495.90,460.0z" fill="#ffffff"/>
<path d="M495.90,460.0 497.90,460.0 497.90,481.5 495.90,481.5z" fill="#ffffff"/>
<path d="M495.90,481.5 497.90,481.5 497.90,517.9 495.90,517.9z" fill="#ffffff"/>
<path d="M495.90,517.9 497.90,517.9 497.90,546.6 495.90,546.6z" fill="#ffffff"/>
<path d="M495.90,546.6 497.90,546.6 497.90,569.2 495.90,569.2z" fill="#ffffff"/>
<path d="M495.90,569.2 497.90,569.2 497.90,592.8 495.90,592.8z" fill="url(#dw)"/>
<path d="M495.90,592.8 497.90,592.8 497.90,621.5 495.90,621.5z" fill="#ffffff"/>
<path d="M495.90,621.5 497.90,621.5 497.90,659.2 495.90,659.2z" fill="url(#db)"/>
<path d="M495.90,659.2 497.90,659.2 497.90,680.0 495.90,680.0z" fill="#ffffff"/>
<path d="M495.90,680.0 497.90,680.0 497.90,681.9 495.90,681.9z" fill="url(#dby)"/>
<path d="M495.90,681.9 497.90,681.9 497.44,716.7 495.44,716.7z" fill="url(#dw)"/>
<path d="M495.44,716.7 497.44,716.7 497.36,720.0 495.36,720.0z" fill="#ffffff"/>
<path d="M495.36,720.0 497.36,720.0 496.72,738.9 494.72,738.9z" fill="#ffffff"/>
<path d="M494.72,738.9 496.72,738.9 495.73,760.0 493.73,760.0z" fill="url(#db)"/>
<path d="M493.73,760.0 495.73,760.0 495.70,760.6 493.70,760.6z" fill="url(#dby)"/>
<path d="M493.69,760.6 495.69,760.6 494.65,777.9 492.65,777.9z" fill="url(#db)"/>
<path d="M492.65,777.9 494.65,777.9 492.74,803.4 490.74,803.4z" fill="url(#dby)"/>
<path d="M490.74,803.4 492.74,803.4 492.26,809.0 490.26,809.0z" fill="url(#db)"/>
<path d="M470.82,118.0 472.82,118.0 474.48,136.5 472.48,136.5z" fill="url(#dy)"/>
<path d="M472.48,136.5 474.48,136.5 476.60,160.0 474.60,160.0z" fill="url(#dr)"/>
<path d="M474.62,160.2 476.62,160.2 478.71,183.5 476.71,183.5z" fill="url(#dw)"/>
<path d="M476.71,183.5 478.71,183.5 480.20,200.0 478.20,200.0z" fill="url(#dy)"/>
<path d="M478.20,200.0 480.20,200.0 480.54,203.8 478.54,203.8z" fill="url(#dw)"/>
<path d="M478.54,203.8 480.54,203.8 483.24,233.8 481.24,233.8z" fill="url(#dw)"/>
<path d="M481.25,233.8 483.25,233.8 483.80,240.0 481.80,240.0z" fill="#ffffff"/>
<path d="M481.80,240.0 483.80,240.0 486.75,272.8 484.75,272.8z" fill="#ffffff"/>
<path d="M484.75,272.8 486.75,272.8 487.40,280.0 485.40,280.0z" fill="#ffffff"/>
<path d="M485.40,280.0 487.40,280.0 489.44,302.7 487.44,302.7z" fill="#ffffff"/>
<path d="M487.44,302.7 489.44,302.7 490.99,319.9 488.99,319.9z" fill="#ffffff"/>
<path d="M488.99,319.9 490.99,319.9 491.90,330.0 489.90,330.0z" fill="#ffffff"/>
<path d="M489.90,330.0 491.90,330.0 492.73,339.3 490.73,339.3z" fill="#ffffff"/>
<path d="M490.74,339.3 492.74,339.3 496.19,377.7 494.19,377.7z" fill="#ffffff"/>
<path d="M494.19,377.7 496.19,377.7 496.40,380.0 494.40,380.0z" fill="#ffffff"/>
<path d="M494.40,380.0 496.40,380.0 499.52,417.2 497.52,417.2z" fill="#ffffff"/>
<path d="M497.52,417.2 499.52,417.2 499.70,420.0 497.70,420.0z" fill="#ffffff"/>
<path d="M497.70,420.0 499.70,420.0 500.66,442.2 498.66,442.2z" fill="#ffffff"/>
<path d="M498.66,442.2 500.66,442.2 500.90,460.0 498.90,460.0z" fill="#ffffff"/>
<path d="M498.90,460.0 500.90,460.0 500.90,469.1 498.90,469.1z" fill="#ffffff"/>
<path d="M498.90,469.1 500.90,469.1 500.90,491.6 498.90,491.6z" fill="#ffffff"/>
<path d="M498.90,491.6 500.90,491.6 500.90,523.9 498.90,523.9z" fill="#ffffff"/>
<path d="M498.90,523.9 500.90,523.9 500.90,561.7 498.90,561.7z" fill="#ffffff"/>
<path d="M498.90,561.7 500.90,561.7 500.90,591.7 498.90,591.7z" fill="#ffffff"/>
<path d="M498.90,591.7 500.90,591.7 500.90,624.7 498.90,624.7z" fill="#ffffff"/>
<path d="M498.90,624.7 500.90,624.7 500.90,641.0 498.90,641.0z" fill="#ffffff"/>
<path d="M498.90,641.0 500.90,641.0 500.90,677.6 498.90,677.6z" fill="#ffffff"/>
<path d="M498.90,677.6 500.90,677.6 500.90,680.0 498.90,680.0z" fill="url(#db)"/>
<path d="M498.90,680.0 500.90,680.0 500.66,706.9 498.66,706.9z" fill="url(#db)"/>
<path d="M498.65,706.9 500.65,706.9 500.36,720.0 498.36,720.0z" fill="url(#dby)"/>
<path d="M498.36,720.0 500.36,720.0 500.25,723.9 498.25,723.9z" fill="url(#db)"/>
<path d="M498.25,723.9 500.25,723.9 499.34,747.9 497.34,747.9z" fill="#ffffff"/>
<path d="M497.34,747.9 499.34,747.9 498.73,760.0 496.73,760.0z" fill="url(#db)"/>
<path d="M496.73,760.0 498.73,760.0 497.40,781.6 495.40,781.6z" fill="url(#db)"/>
<path d="M495.40,781.6 497.40,781.6 495.81,802.5 493.81,802.5z" fill="url(#dby)"/>
<path d="M493.81,802.5 495.81,802.5 495.26,809.0 493.26,809.0z" fill="url(#db)"/>
<path d="M476.62,118.0 478.62,118.0 481.50,150.0 479.50,150.0z" fill="url(#dw)"/>
<path d="M479.50,150.0 481.50,150.0 482.40,160.0 480.40,160.0z" fill="url(#dw)"/>
<path d="M480.40,160.0 482.40,160.0 484.33,181.4 482.33,181.4z" fill="url(#dw)"/>
<path d="M482.33,181.4 484.33,181.4 486.00,200.0 484.00,200.0z" fill="url(#dw)"/>
<path d="M484.00,200.0 486.00,200.0 486.70,207.8 484.70,207.8z" fill="url(#dw)"/>
<path d="M484.70,207.8 486.70,207.8 489.58,239.8 487.58,239.8z" fill="#ffffff"/>
<path d="M487.60,240.0 489.60,240.0 491.15,257.2 489.15,257.2z" fill="#ffffff"/>
<path d="M489.15,257.2 491.15,257.2 493.08,278.7 491.08,278.7z" fill="#ffffff"/>
<path d="M491.09,278.7 493.09,278.7 493.20,280.0 491.20,280.0z" fill="#ffffff"/>
<path d="M491.20,280.0 493.20,280.0 494.73,297.0 492.73,297.0z" fill="#ffffff"/>
<path d="M492.73,297.0 494.73,297.0 497.65,329.5 495.65,329.5z" fill="#ffffff"/>
<path d="M495.70,330.0 497.70,330.0 500.65,362.8 498.65,362.8z" fill="#ffffff"/>
<path d="M498.65,362.8 500.65,362.8 502.20,380.0 500.20,380.0z" fill="#ffffff"/>
<path d="M500.20,380.0 502.20,380.0 503.62,395.8 501.62,395.8z" fill="#ffffff"/>
<path d="M501.62,395.8 503.62,395.8 505.50,420.0 503.50,420.0z" fill="#ffffff"/>
<path d="M503.50,420.0 505.50,420.0 505.88,426.9 503.88,426.9z" fill="#ffffff"/>
<path d="M503.88,426.9 505.88,426.9 506.64,450.9 504.64,450.9z" fill="#ffffff"/>
<path d="M504.64,450.9 506.64,450.9 506.70,460.0 504.70,460.0z" fill="#ffffff"/>
<path d="M504.70,460.0 506.70,460.0 506.70,479.1 504.70,479.1z" fill="#ffffff"/>
<path d="M504.70,479.1 506.70,479.1 506.70,505.3 504.70,505.3z" fill="#ffffff"/>
<path d="M504.70,505.3 506.70,505.3 506.70,524.8 504.70,524.8z" fill="#ffffff"/>
<path d="M504.70,524.8 506.70,524.8 506.70,560.2 504.70,560.2z" fill="#ffffff"/>
<path d="M504.70,560.2 506.70,560.2 506.70,579.5 504.70,579.5z" fill="#ffffff"/>
<path d="M504.70,579.5 506.70,579.5 506.70,602.2 504.70,602.2z" fill="#ffffff"/>
<path d="M504.70,602.2 506.70,602.2 506.70,636.0 504.70,636.0z" fill="url(#dr)"/>
<path d="M504.70,636.0 506.70,636.0 506.70,672.8 504.70,672.8z" fill="#ffffff"/>
<path d="M504.70,672.8 506.70,672.8 506.70,680.0 504.70,680.0z" fill="url(#db)"/>
<path d="M504.70,680.0 506.70,680.0 506.66,691.1 504.66,691.1z" fill="#ffffff"/>
<path d="M504.66,691.1 506.66,691.1 506.16,720.0 504.16,720.0z" fill="#ffffff"/>
<path d="M504.16,720.0 506.16,720.0 506.00,725.5 504.00,725.5z" fill="url(#dw)"/>
<path d="M504.00,725.5 506.00,725.5 505.16,747.3 503.16,747.3z" fill="url(#db)"/>
<path d="M503.16,747.3 505.16,747.3 504.53,760.0 502.53,760.0z" fill="url(#dby)"/>
<path d="M502.53,760.0 504.53,760.0 502.94,785.2 500.94,785.2z" fill="url(#db)"/>
<path d="M500.94,785.2 502.94,785.2 501.52,803.6 499.52,803.6z" fill="#ffffff"/>
<path d="M499.52,803.6 501.52,803.6 501.06,809.0 499.06,809.0z" fill="url(#db)"/>
<path d="M479.62,118.0 481.62,118.0 484.56,150.7 482.56,150.7z" fill="url(#dy)"/>
<path d="M482.56,150.7 484.56,150.7 485.40,160.0 483.40,160.0z" fill="url(#dw)"/>
<path d="M483.40,160.0 485.40,160.0 487.19,179.8 485.19,179.8z" fill="url(#dw)"/>
<path d="M485.19,179.8 487.19,179.8 489.00,200.0 487.00,200.0z" fill="url(#dw)"/>
<path d="M487.00,200.0 489.00,200.0 489.66,207.3 487.66,207.3z" fill="url(#dw)"/>
<path d="M487.66,207.3 489.66,207.3 492.30,236.7 490.30,236.7z" fill="url(#dy)"/>
<path d="M490.30,236.7 492.30,236.7 492.60,240.0 490.60,240.0z" fill="#ffffff"/>
<path d="M490.60,240.0 492.60,240.0 494.09,256.6 492.09,256.6z" fill="#ffffff"/>
<path d="M492.10,256.6 494.10,256.6 495.90,276.6 493.90,276.6z" fill="#ffffff"/>
<path d="M493.90,276.6 495.90,276.6 496.20,280.0 494.20,280.0z" fill="#ffffff"/>
<path d="M494.20,280.0 496.20,280.0 498.67,307.4 496.67,307.4z" fill="#ffffff"/>
<path d="M496.67,307.4 498.67,307.4 500.70,330.0 498.70,330.0z" fill="#ffffff"/>
<path d="M498.70,330.0 500.70,330.0 502.21,346.8 500.21,346.8z" fill="#ffffff"/>
<path d="M500.21,346.8 502.21,346.8 504.05,367.3 502.05,367.3z" fill="#ffffff"/>
<path d="M502.06,367.3 504.06,367.3 505.20,380.0 503.20,380.0z" fill="#ffffff"/>
<path d="M503.20,380.0 505.20,380.0 506.64,396.1 504.64,396.1z" fill="#ffffff"/>
<path d="M504.65,396.1 506.65,396.1 508.31,416.9 506.31,416.9z" fill="#ffffff"/>
<path d="M506.31,416.9 508.31,416.9 508.50,420.0 506.50,420.0z" fill="#ffffff"/>
<path d="M506.50,420.0 508.50,420.0 509.21,434.4 507.21,434.4z" fill="#ffffff"/>
<path d="M507.21,434.4 509.21,434.4 509.70,460.0 507.70,460.0z" fill="#ffffff"/>
<path d="M507.70,460.0 509.70,460.0 509.70,473.9 507.70,473.9z" fill="#ffffff"/>
<path d="M507.70,473.9 509.70,473.9 509.70,508.6 507.70,508.6z" fill="#ffffff"/>
<path d="M507.70,508.6 509.70,508.6 509.70,544.0 507.70,544.0z" fill="#ffffff"/>
<path d="M507.70,544.0 509.70,544.0 509.70,575.7 507.70,575.7z" fill="#ffffff"/>
<path d="M507.70,575.7 509.70,575.7 509.70,593.4 507.70,593.4z" fill="#ffffff"/>
<path d="M507.70,593.4 509.70,593.4 509.70,617.9 507.70,617.9z" fill="#ffffff"/>
<path d="M507.70,617.9 509.70,617.9 509.70,657.6 507.70,657.6z" fill="url(#dy)"/>
<path d="M507.70,657.6 509.70,657.6 509.70,680.0 507.70,680.0z" fill="#ffffff"/>
<path d="M507.70,680.0 509.70,680.0 509.69,685.0 507.69,685.0z" fill="url(#db)"/>
<path d="M507.69,685.0 509.69,685.0 509.21,718.1 507.21,718.1z" fill="#ffffff"/>
<path d="M507.21,718.1 509.21,718.1 509.16,720.0 507.16,720.0z" fill="#ffffff"/>
<path d="M507.16,720.0 509.16,720.0 507.68,757.1 505.68,757.1z" fill="url(#db)"/>
<path d="M505.68,757.1 507.68,757.1 507.53,760.0 505.53,760.0z" fill="url(#db)"/>
<path d="M505.53,760.0 507.53,760.0 505.58,790.2 503.58,790.2z" fill="url(#db)"/>
<path d="M503.58,790.2 505.58,790.2 504.06,809.0 502.06,809.0z" fill="#ffffff"/>
<path d="M484.32,118.0 486.32,118.0 489.59,154.4 487.59,154.4z" fill="url(#dy)"/>
<path d="M487.59,154.4 489.59,154.4 490.10,160.0 488.10,160.0z" fill="url(#dw)"/>
<path d="M488.10,160.0 490.10,160.0 491.26,172.9 489.26,172.9z" fill="url(#dw)"/>
<path d="M489.26,172.9 491.26,172.9 493.70,200.0 491.70,200.0z" fill="url(#dw)"/>
<path d="M491.70,200.0 493.70,200.0 494.52,209.1 492.52,209.1z" fill="url(#dy)"/>
<path d="M492.52,209.1 494.52,209.1 497.30,240.0 495.30,240.0z" fill="#ffffff"/>
<path d="M495.30,240.0 497.30,240.0 497.41,241.2 495.41,241.2z" fill="#ffffff"/>
<path d="M495.41,241.2 497.41,241.2 500.46,275.1 498.46,275.1z" fill="#ffffff"/>
<path d="M498.46,275.1 500.46,275.1 500.90,280.0 498.90,280.0z" fill="#ffffff"/>
<path d="M498.90,280.0 500.90,280.0 503.49,308.8 501.49,308.8z" fill="#ffffff"/>
<path d="M501.50,308.8 503.50,308.8 505.00,325.6 503.00,325.6z" fill="#ffffff"/>
<path d="M503.00,325.6 505.00,325.6 505.40,330.0 503.40,330.0z" fill="#ffffff"/>
<path d="M503.40,330.0 505.40,330.0 507.33,351.4 505.33,351.4z" fill="#ffffff"/>
<path d="M505.33,351.4 507.33,351.4 509.90,380.0 507.90,380.0z" fill="#ffffff"/>
<path d="M507.90,380.0 509.90,380.0 510.57,387.5 508.57,387.5z" fill="#ffffff"/>
<path d="M508.57,387.5 510.57,387.5 513.20,420.0 511.20,420.0z" fill="#ffffff"/>
<path d="M511.22,420.3 513.22,420.3 514.38,454.4 512.38,454.4z" fill="#ffffff"/>
<path d="M512.38,454.4 514.38,454.4 514.40,460.0 512.40,460.0z" fill="#ffffff"/>
<path d="M512.40,460.0 514.40,460.0 514.40,485.2 512.40,485.2z" fill="#ffffff"/>
<path d="M512.40,485.2 514.40,485.2 514.40,510.4 512.40,510.4z" fill="#ffffff"/>
<path d="M512.40,510.4 514.40,510.4 514.40,546.4 512.40,546.4z" fill="#ffffff"/>
<path d="M512.40,546.4 514.40,546.4 514.40,565.6 512.40,565.6z" fill="#ffffff"/>
<path d="M512.40,565.6 514.40,565.6 514.40,602.1 512.40,602.1z" fill="#ffffff"/>
<path d="M512.40,602.1 514.40,602.1 514.40,638.0 512.40,638.0z" fill="url(#dy)"/>
<path d="M512.40,638.0 514.40,638.0 514.40,665.6 512.40,665.6z" fill="#ffffff"/>
<path d="M512.40,665.6 514.40,665.6 514.40,680.0 512.40,680.0z" fill="url(#db)"/>
<path d="M512.40,680.0 514.40,680.0 514.31,695.9 512.31,695.9z" fill="url(#dby)"/>
<path d="M512.31,695.9 514.31,695.9 513.86,720.0 511.86,720.0z" fill="#ffffff"/>
<path d="M511.86,720.0 513.86,720.0 513.59,729.0 511.59,729.0z" fill="url(#db)"/>
<path d="M511.58,729.0 513.58,729.0 512.94,745.5 510.94,745.5z" fill="url(#dby)"/>
<path d="M510.94,745.5 512.94,745.5 512.23,760.0 510.23,760.0z" fill="url(#db)"/>
<path d="M510.23,760.0 512.23,760.0 511.93,765.3 509.93,765.3z" fill="url(#db)"/>
<path d="M509.93,765.3 511.93,765.3 509.47,800.6 507.47,800.6z" fill="#ffffff"/>
<path d="M507.46,800.6 509.46,800.6 508.76,809.0 506.76,809.0z" fill="url(#db)"/>
<path d="M487.32,118.0 489.32,118.0 491.65,143.9 489.65,143.9z" fill="url(#dr)"/>
<path d="M489.65,143.9 491.65,143.9 493.10,160.0 491.10,160.0z" fill="url(#dw)"/>
<path d="M491.13,160.3 493.13,160.3 496.41,196.8 494.41,196.8z" fill="url(#dw)"/>
<path d="M494.41,196.8 496.41,196.8 496.70,200.0 494.70,200.0z" fill="url(#dw)"/>
<path d="M494.70,200.0 496.70,200.0 499.69,233.2 497.69,233.2z" fill="#ffffff"/>
<path d="M497.69,233.2 499.69,233.2 500.30,240.0 498.30,240.0z" fill="#ffffff"/>
<path d="M498.30,240.0 500.30,240.0 501.31,251.2 499.31,251.2z" fill="#ffffff"/>
<path d="M499.31,251.2 501.31,251.2 503.51,275.7 501.51,275.7z" fill="#ffffff"/>
<path d="M501.51,275.7 503.51,275.7 503.90,280.0 501.90,280.0z" fill="#ffffff"/>
<path d="M501.90,280.0 503.90,280.0 505.49,297.6 503.49,297.6z" fill="#ffffff"/>
<path d="M503.49,297.6 505.49,297.6 508.33,329.3 506.33,329.3z" fill="#ffffff"/>
<path d="M506.33,329.3 508.33,329.3 508.40,330.0 506.40,330.0z" fill="#ffffff"/>
<path d="M506.40,330.0 508.40,330.0 510.88,357.6 508.88,357.6z" fill="#ffffff"/>
<path d="M508.88,357.6 510.88,357.6 512.90,380.0 510.90,380.0z" fill="#ffffff"/>
<path d="M510.90,380.0 512.90,380.0 513.52,386.9 511.52,386.9z" fill="#ffffff"/>
<path d="M511.53,386.9 513.53,386.9 516.20,420.0 514.20,420.0z" fill="#ffffff"/>
<path d="M514.20,420.0 516.20,420.0 516.41,423.6 514.41,423.6z" fill="#ffffff"/>
<path d="M514.41,423.6 516.41,423.6 517.37,453.4 515.37,453.4z" fill="#ffffff"/>
<path d="M515.37,453.4 517.37,453.4 517.40,460.0 515.40,460.0z" fill="#ffffff"/>
<path d="M515.40,460.0 517.40,460.0 517.40,483.1 515.40,483.1z" fill="#ffffff"/>
<path d="M515.40,483.1 517.40,483.1 517.40,516.6 515.40,516.6z" fill="#ffffff"/>
<path d="M515.40,516.6 517.40,516.6 517.40,538.2 515.40,538.2z" fill="#ffffff"/>
<path d="M515.40,538.2 517.40,538.2 517.40,572.0 515.40,572.0z" fill="#ffffff"/>
<path d="M515.40,572.0 517.40,572.0 517.40,610.3 515.40,610.3z" fill="#ffffff"/>
<path d="M515.40,610.3 517.40,610.3 517.40,641.1 515.40,641.1z" fill="url(#dw)"/>
<path d="M515.40,641.1 517.40,641.1 517.40,679.0 515.40,679.0z" fill="#ffffff"/>
<path d="M515.40,679.0 517.40,679.0 517.40,680.0 515.40,680.0z" fill="url(#db)"/>
<path d="M515.40,680.0 517.40,680.0 517.23,702.6 515.23,702.6z" fill="url(#db)"/>
<path d="M515.23,702.6 517.23,702.6 516.86,720.0 514.86,720.0z" fill="#ffffff"/>
<path d="M514.86,720.0 516.86,720.0 516.68,726.2 514.68,726.2z" fill="url(#db)"/>
<path d="M514.68,726.2 516.68,726.2 515.45,755.8 513.45,755.8z" fill="url(#db)"/>
<path d="M513.45,755.8 515.45,755.8 515.23,760.0 513.23,760.0z" fill="url(#db)"/>
<path d="M513.23,760.0 515.23,760.0 514.45,773.2 512.45,773.2z" fill="url(#db)"/>
<path d="M512.45,773.2 514.45,773.2 512.37,801.8 510.37,801.8z" fill="url(#dby)"/>
<path d="M510.37,801.8 512.37,801.8 511.76,809.0 509.76,809.0z" fill="url(#dw)"/>
<path d="M491.25,118.0 493.25,118.0 494.77,134.9 492.77,134.9z" fill="url(#dy)"/>
<path d="M492.77,134.9 494.77,134.9 496.73,156.7 494.73,156.7z" fill="url(#dy)"/>
<path d="M494.73,156.7 496.73,156.7 497.03,160.0 495.03,160.0z" fill="url(#dy)"/>
<path d="M495.03,160.0 497.03,160.0 500.23,195.6 498.23,195.6z" fill="url(#dy)"/>
<path d="M498.23,195.6 500.23,195.6 500.63,200.0 498.63,200.0z" fill="url(#dw)"/>
<path d="M498.63,200.0 500.63,200.0 502.39,219.5 500.39,219.5z" fill="url(#dr)"/>
<path d="M500.39,219.5 502.39,219.5 504.23,240.0 502.23,240.0z" fill="#ffffff"/>
<path d="M502.23,240.0 504.23,240.0 505.87,258.2 503.87,258.2z" fill="#ffffff"/>
<path d="M503.87,258.2 505.87,258.2 507.83,280.0 505.83,280.0z" fill="#ffffff"/>
<path d="M505.83,280.0 507.83,280.0 508.13,283.4 506.13,283.4z" fill="#ffffff"/>
<path d="M506.13,283.4 508.13,283.4 509.66,300.4 507.66,300.4z" fill="#ffffff"/>
<path d="M507.67,300.4 509.67,300.4 512.33,330.0 510.33,330.0z" fill="#ffffff"/>
<path d="M510.33,330.0 512.33,330.0 512.80,335.2 510.80,335.2z" fill="#ffffff"/>
<path d="M510.80,335.2 512.80,335.2 515.81,368.7 513.81,368.7z" fill="#ffffff"/>
<path d="M513.81,368.7 515.81,368.7 516.83,380.0 514.83,380.0z" fill="#ffffff"/>
<path d="M514.83,380.0 516.83,380.0 518.51,398.6 516.51,398.6z" fill="#ffffff"/>
<path d="M516.51,398.6 518.51,398.6 520.13,420.0 518.13,420.0z" fill="#ffffff"/>
<path d="M518.13,420.0 520.13,420.0 520.56,427.9 518.56,427.9z" fill="#ffffff"/>
<path d="M518.56,427.9 520.56,427.9 521.33,460.0 519.33,460.0z" fill="#ffffff"/>
<path d="M519.33,460.0 521.33,460.0 521.33,460.7 519.33,460.7z" fill="#ffffff"/>
<path d="M519.33,460.7 521.33,460.7 521.33,480.8 519.33,480.8z" fill="#ffffff"/>
<path d="M519.33,480.8 521.33,480.8 521.33,505.1 519.33,505.1z" fill="#ffffff"/>
<path d="M519.33,505.1 521.33,505.1 521.33,530.5 519.33,530.5z" fill="#ffffff"/>
<path d="M519.33,530.5 521.33,530.5 521.33,549.5 519.33,549.5z" fill="#ffffff"/>
<path d="M519.33,549.5 521.33,549.5 521.33,580.5 519.33,580.5z" fill="#ffffff"/>
<path d="M519.33,580.5 521.33,580.5 521.33,609.8 519.33,609.8z" fill="#ffffff"/>
<path d="M519.33,609.8 521.33,609.8 521.33,629.4 519.33,629.4z" fill="url(#dw)"/>
<path d="M519.33,629.4 521.33,629.4 521.33,666.2 519.33,666.2z" fill="#ffffff"/>
<path d="M519.33,666.2 521.33,666.2 521.33,680.0 519.33,680.0z" fill="#ffffff"/>
<path d="M519.33,680.0 521.33,680.0 521.33,684.2 519.33,684.2z" fill="url(#db)"/>
<path d="M519.33,684.2 521.33,684.2 521.04,709.2 519.04,709.2z" fill="#ffffff"/>
<path d="M519.04,709.2 521.04,709.2 520.79,720.0 518.79,720.0z" fill="url(#db)"/>
<path d="M518.79,720.0 520.79,720.0 520.48,730.0 518.48,730.0z" fill="url(#db)"/>
<path d="M518.48,730.0 520.48,730.0 519.16,760.0 517.16,760.0z" fill="url(#db)"/>
<path d="M517.16,760.0 519.16,760.0 518.92,764.3 516.92,764.3z" fill="#ffffff"/>
<path d="M516.92,764.3 518.92,764.3 517.61,784.8 515.61,784.8z" fill="#ffffff"/>
<path d="M515.61,784.8 517.61,784.8 516.25,802.4 514.25,802.4z" fill="url(#dw)"/>
<path d="M514.25,802.4 516.25,802.4 515.69,809.0 513.69,809.0z" fill="url(#dby)"/>
<path d="M494.25,118.0 496.25,118.0 499.79,157.3 497.79,157.3z" fill="url(#dr)"/>
<path d="M497.79,157.3 499.79,157.3 500.03,160.0 498.03,160.0z" fill="url(#dy)"/>
<path d="M498.03,160.0 500.03,160.0 502.39,186.2 500.39,186.2z" fill="url(#dy)"/>
<path d="M500.39,186.2 502.39,186.2 503.63,200.0 501.63,200.0z" fill="url(#dw)"/>
<path d="M501.63,200.0 503.63,200.0 505.40,219.7 503.40,219.7z" fill="url(#dr)"/>
<path d="M503.41,219.7 505.41,219.7 507.02,237.7 505.02,237.7z" fill="url(#dy)"/>
<path d="M505.02,237.7 507.02,237.7 507.23,240.0 505.23,240.0z" fill="#ffffff"/>
<path d="M505.23,240.0 507.23,240.0 508.53,254.4 506.53,254.4z" fill="#ffffff"/>
<path d="M506.53,254.4 508.53,254.4 510.20,273.0 508.20,273.0z" fill="url(#dw)"/>
<path d="M508.20,273.0 510.20,273.0 510.83,280.0 508.83,280.0z" fill="#ffffff"/>
<path d="M508.83,280.0 510.83,280.0 512.99,304.0 510.99,304.0z" fill="#ffffff"/>
<path d="M511.00,304.0 513.00,304.0 515.33,330.0 513.33,330.0z" fill="#ffffff"/>
<path d="M513.33,330.0 515.33,330.0 516.49,342.8 514.49,342.8z" fill="#ffffff"/>
<path d="M514.49,342.8 516.49,342.8 518.95,370.2 516.95,370.2z" fill="#ffffff"/>
<path d="M516.95,370.2 518.95,370.2 519.83,380.0 517.83,380.0z" fill="#ffffff"/>
<path d="M517.83,380.0 519.83,380.0 522.32,408.2 520.32,408.2z" fill="#ffffff"/>
<path d="M520.32,408.2 522.32,408.2 523.13,420.0 521.13,420.0z" fill="#ffffff"/>
<path d="M521.13,420.0 523.13,420.0 523.60,428.9 521.60,428.9z" fill="#ffffff"/>
<path d="M521.61,428.9 523.61,428.9 524.33,460.0 522.33,460.0z" fill="#ffffff"/>
<path d="M522.33,460.0 524.33,460.0 524.33,461.6 522.33,461.6z" fill="#ffffff"/>
<path d="M522.33,461.6 524.33,461.6 524.33,492.9 522.33,492.9z" fill="#ffffff"/>
<path d="M522.33,492.9 524.33,492.9 524.33,512.2 522.33,512.2z" fill="#ffffff"/>
<path d="M522.33,512.2 524.33,512.2 524.33,535.6 522.33,535.6z" fill="#ffffff"/>
<path d="M522.33,535.6 524.33,535.6 524.33,568.8 522.33,568.8z" fill="#ffffff"/>
<path d="M522.33,568.8 524.33,568.8 524.33,597.5 522.33,597.5z" fill="url(#dy)"/>
<path d="M522.33,597.5 524.33,597.5 524.33,630.4 522.33,630.4z" fill="url(#dr)"/>
<path d="M522.33,630.4 524.33,630.4 524.33,658.4 522.33,658.4z" fill="#ffffff"/>
<path d="M522.33,658.4 524.33,658.4 524.33,680.0 522.33,680.0z" fill="url(#db)"/>
<path d="M522.33,680.0 524.33,680.0 524.26,694.3 522.26,694.3z" fill="#ffffff"/>
<path d="M522.26,694.3 524.26,694.3 523.79,720.0 521.79,720.0z" fill="url(#db)"/>
<path d="M521.79,720.0 523.79,720.0 523.66,724.4 521.66,724.4z" fill="url(#dby)"/>
<path d="M521.66,724.4 523.66,724.4 522.46,754.2 520.46,754.2z" fill="#ffffff"/>
<path d="M520.46,754.2 522.46,754.2 522.16,760.0 520.16,760.0z" fill="url(#db)"/>
<path d="M520.16,760.0 522.16,760.0 520.21,790.2 518.21,790.2z" fill="url(#db)"/>
<path d="M518.21,790.2 520.21,790.2 518.69,809.0 516.69,809.0z" fill="url(#dby)"/>
<path d="M499.04,118.0 501.04,118.0 502.79,137.4 500.79,137.4z" fill="url(#dw)"/>
<path d="M500.79,137.4 502.79,137.4 504.82,160.0 502.82,160.0z" fill="url(#dw)"/>
<path d="M502.82,160.0 504.82,160.0 505.76,170.4 503.76,170.4z" fill="url(#dw)"/>
<path d="M503.76,170.4 505.76,170.4 508.26,198.2 506.26,198.2z" fill="url(#dw)"/>
<path d="M506.26,198.2 508.26,198.2 508.42,200.0 506.42,200.0z" fill="url(#dw)"/>
<path d="M506.42,200.0 508.42,200.0 511.77,237.1 509.77,237.1z" fill="url(#dy)"/>
<path d="M509.77,237.1 511.77,237.1 512.02,240.0 510.02,240.0z" fill="#ffffff"/>
<path d="M510.02,240.0 512.02,240.0 514.12,263.4 512.12,263.4z" fill="#ffffff"/>
<path d="M512.13,263.4 514.13,263.4 515.62,280.0 513.62,280.0z" fill="#ffffff"/>
<path d="M513.62,280.0 515.62,280.0 516.39,288.5 514.39,288.5z" fill="url(#dr)"/>
<path d="M514.39,288.5 516.39,288.5 518.49,311.9 516.49,311.9z" fill="#ffffff"/>
<path d="M516.49,311.9 518.49,311.9 520.12,330.0 518.12,330.0z" fill="#ffffff"/>
<path d="M518.12,330.0 520.12,330.0 520.37,332.8 518.37,332.8z" fill="#ffffff"/>
<path d="M518.37,332.8 520.37,332.8 523.17,363.9 521.17,363.9z" fill="#ffffff"/>
<path d="M521.18,363.9 523.18,363.9 524.62,380.0 522.62,380.0z" fill="#ffffff"/>
<path d="M522.62,380.0 524.62,380.0 524.95,383.7 522.95,383.7z" fill="#ffffff"/>
<path d="M522.96,383.7 524.96,383.7 527.04,407.3 525.04,407.3z" fill="#ffffff"/>
<path d="M525.04,407.3 527.04,407.3 527.92,420.0 525.92,420.0z" fill="#ffffff"/>
<path d="M525.92,420.0 527.92,420.0 528.67,435.3 526.67,435.3z" fill="#ffffff"/>
<path d="M526.67,435.3 528.67,435.3 529.12,460.0 527.12,460.0z" fill="#ffffff"/>
<path d="M527.12,460.0 529.12,460.0 529.12,471.8 527.12,471.8z" fill="#ffffff"/>
<path d="M527.12,471.8 529.12,471.8 529.12,493.0 527.12,493.0z" fill="#ffffff"/>
<path d="M527.12,493.0 529.12,493.0 529.12,512.7 527.12,512.7z" fill="#ffffff"/>
<path d="M527.12,512.7 529.12,512.7 529.12,550.9 527.12,550.9z" fill="#ffffff"/>
<path d="M527.12,550.9 529.12,550.9 529.12,584.0 527.12,584.0z" fill="#ffffff"/>
<path d="M527.12,584.0 529.12,584.0 529.12,609.1 527.12,609.1z" fill="url(#dy)"/>
<path d="M527.12,609.1 529.12,609.1 529.12,627.0 527.12,627.0z" fill="#ffffff"/>
<path d="M527.12,627.0 529.12,627.0 529.12,650.6 527.12,650.6z" fill="#ffffff"/>
<path d="M527.12,650.6 529.12,650.6 529.12,671.2 527.12,671.2z" fill="#ffffff"/>
<path d="M527.12,671.2 529.12,671.2 529.12,680.0 527.12,680.0z" fill="#ffffff"/>
<path d="M527.12,680.0 529.12,680.0 529.10,688.9 527.10,688.9z" fill="#ffffff"/>
<path d="M527.10,688.9 529.10,688.9 528.76,712.8 526.76,712.8z" fill="#ffffff"/>
<path d="M526.76,712.8 528.76,712.8 528.58,720.0 526.58,720.0z" fill="#ffffff"/>
<path d="M526.58,720.0 528.58,720.0 527.98,738.1 525.98,738.1z" fill="url(#db)"/>
<path d="M525.98,738.1 527.98,738.1 526.95,760.0 524.95,760.0z" fill="url(#dby)"/>
<path d="M524.95,760.0 526.95,760.0 526.28,771.6 524.28,771.6z" fill="#ffffff"/>
<path d="M524.28,771.6 526.28,771.6 523.48,809.0 521.48,809.0z" fill="url(#db)"/>
<path d="M502.04,118.0 504.04,118.0 506.91,149.9 504.91,149.9z" fill="url(#dw)"/>
<path d="M504.92,149.9 506.92,149.9 507.82,160.0 505.82,160.0z" fill="url(#dr)"/>
<path d="M505.82,160.0 507.82,160.0 510.09,185.2 508.09,185.2z" fill="url(#dw)"/>
<path d="M508.10,185.2 510.10,185.2 511.42,200.0 509.42,200.0z" fill="url(#dw)"/>
<path d="M509.42,200.0 511.42,200.0 512.13,207.9 510.13,207.9z" fill="url(#dy)"/>
<path d="M510.14,207.9 512.14,207.9 514.52,234.4 512.52,234.4z" fill="url(#dw)"/>
<path d="M512.52,234.4 514.52,234.4 515.02,240.0 513.02,240.0z" fill="#ffffff"/>
<path d="M513.02,240.0 515.02,240.0 516.86,260.5 514.86,260.5z" fill="#ffffff"/>
<path d="M514.87,260.5 516.87,260.5 518.62,280.0 516.62,280.0z" fill="#ffffff"/>
<path d="M516.62,280.0 518.62,280.0 519.30,287.5 517.30,287.5z" fill="#ffffff"/>
<path d="M517.30,287.5 519.30,287.5 521.48,311.8 519.48,311.8z" fill="#ffffff"/>
<path d="M519.48,311.8 521.48,311.8 523.06,329.3 521.06,329.3z" fill="#ffffff"/>
<path d="M521.07,329.3 523.07,329.3 523.12,330.0 521.12,330.0z" fill="#ffffff"/>
<path d="M521.12,330.0 523.12,330.0 524.96,350.5 522.96,350.5z" fill="#ffffff"/>
<path d="M522.97,350.5 524.97,350.5 527.31,376.5 525.31,376.5z" fill="#ffffff"/>
<path d="M525.31,376.5 527.31,376.5 527.62,380.0 525.62,380.0z" fill="#ffffff"/>
<path d="M525.62,380.0 527.62,380.0 529.25,398.1 527.25,398.1z" fill="#ffffff"/>
<path d="M527.25,398.1 529.25,398.1 530.92,420.0 528.92,420.0z" fill="#ffffff"/>
<path d="M528.92,420.0 530.92,420.0 531.34,427.7 529.34,427.7z" fill="#ffffff"/>
<path d="M529.34,427.7 531.34,427.7 532.08,452.2 530.08,452.2z" fill="#ffffff"/>
<path d="M530.08,452.2 532.08,452.2 532.12,460.0 530.12,460.0z" fill="#ffffff"/>
<path d="M530.12,460.0 532.12,460.0 532.12,483.6 530.12,483.6z" fill="#ffffff"/>
<path d="M530.12,483.6 532.12,483.6 532.12,504.6 530.12,504.6z" fill="#ffffff"/>
<path d="M530.12,504.6 532.12,504.6 532.12,534.5 530.12,534.5z" fill="#ffffff"/>
<path d="M530.12,534.5 532.12,534.5 532.12,564.3 530.12,564.3z" fill="#ffffff"/>
<path d="M530.12,564.3 532.12,564.3 532.12,602.9 530.12,602.9z" fill="url(#dw)"/>
<path d="M530.12,602.9 532.12,602.9 532.12,637.1 530.12,637.1z" fill="#ffffff"/>
<path d="M530.12,637.1 532.12,637.1 532.12,674.2 530.12,674.2z" fill="#ffffff"/>
<path d="M530.12,674.2 532.12,674.2 532.12,680.0 530.12,680.0z" fill="#ffffff"/>
<path d="M530.12,680.0 532.12,680.0 531.95,702.8 529.95,702.8z" fill="#ffffff"/>
<path d="M529.95,702.8 531.95,702.8 531.58,720.0 529.58,720.0z" fill="url(#db)"/>
<path d="M529.58,720.0 531.58,720.0 531.20,732.1 529.20,732.1z" fill="url(#db)"/>
<path d="M529.20,732.1 531.20,732.1 530.52,748.9 528.52,748.9z" fill="url(#dby)"/>
<path d="M528.51,748.9 530.51,748.9 529.95,760.0 527.95,760.0z" fill="#ffffff"/>
<path d="M527.95,760.0 529.95,760.0 528.95,776.8 526.95,776.8z" fill="url(#db)"/>
<path d="M526.95,776.8 528.95,776.8 526.95,803.5 524.95,803.5z" fill="url(#db)"/>
<path d="M524.95,803.5 526.95,803.5 526.48,809.0 524.48,809.0z" fill="#ffffff"/>
<path d="M507.29,118.0 509.29,118.0 511.24,139.7 509.24,139.7z" fill="url(#dy)"/>
<path d="M509.24,139.7 511.24,139.7 513.07,160.0 511.07,160.0z" fill="url(#dw)"/>
<path d="M511.07,160.0 513.07,160.0 514.35,174.2 512.35,174.2z" fill="url(#dw)"/>
<path d="M512.35,174.2 514.35,174.2 516.67,200.0 514.67,200.0z" fill="url(#dr)"/>
<path d="M514.67,200.0 516.67,200.0 517.06,204.3 515.06,204.3z" fill="url(#dw)"/>
<path d="M515.06,204.3 517.06,204.3 520.27,240.0 518.27,240.0z" fill="#ffffff"/>
<path d="M518.27,240.0 520.27,240.0 520.39,241.3 518.39,241.3z" fill="#ffffff"/>
<path d="M518.40,241.3 520.40,241.3 523.60,276.9 521.60,276.9z" fill="#ffffff"/>
<path d="M521.60,276.9 523.60,276.9 523.87,280.0 521.87,280.0z" fill="#ffffff"/>
<path d="M521.87,280.0 523.87,280.0 525.08,293.5 523.08,293.5z" fill="#ffffff"/>
<path d="M523.09,293.5 525.09,293.5 527.88,324.5 525.88,324.5z" fill="#ffffff"/>
<path d="M525.88,324.5 527.88,324.5 528.37,330.0 526.37,330.0z" fill="#ffffff"/>
<path d="M526.37,330.0 528.37,330.0 531.01,359.3 529.01,359.3z" fill="#ffffff"/>
<path d="M529.01,359.3 531.01,359.3 532.87,380.0 530.87,380.0z" fill="#ffffff"/>
<path d="M530.87,380.0 532.87,380.0 533.68,389.0 531.68,389.0z" fill="#ffffff"/>
<path d="M531.68,389.0 533.68,389.0 536.17,420.0 534.17,420.0z" fill="#ffffff"/>
<path d="M534.17,420.0 536.17,420.0 536.39,423.7 534.39,423.7z" fill="#ffffff"/>
<path d="M534.39,423.7 536.39,423.7 537.36,456.5 535.36,456.5z" fill="#ffffff"/>
<path d="M535.36,456.5 537.36,456.5 537.37,460.0 535.37,460.0z" fill="#ffffff"/>
<path d="M535.37,460.0 537.37,460.0 537.37,485.1 535.37,485.1z" fill="#ffffff"/>
<path d="M535.37,485.1 537.37,485.1 537.37,521.9 535.37,521.9z" fill="#ffffff"/>
<path d="M535.37,521.9 537.37,521.9 537.37,554.4 535.37,554.4z" fill="#ffffff"/>
<path d="M535.37,554.4 537.37,554.4 537.37,576.5 535.37,576.5z" fill="#ffffff"/>
<path d="M535.37,576.5 537.37,576.5 537.37,606.2 535.37,606.2z" fill="#ffffff"/>
<path d="M535.37,606.2 537.37,606.2 537.37,643.5 535.37,643.5z" fill="#ffffff"/>
<path d="M535.37,643.5 537.37,643.5 537.37,675.1 535.37,675.1z" fill="url(#dby)"/>
<path d="M535.37,675.1 537.37,675.1 537.37,680.0 535.37,680.0z" fill="url(#dby)"/>
<path d="M535.37,680.0 537.37,680.0 537.02,712.2 535.02,712.2z" fill="url(#dby)"/>
<path d="M535.02,712.2 537.02,712.2 536.83,720.0 534.83,720.0z" fill="url(#db)"/>
<path d="M534.83,720.0 536.83,720.0 536.51,730.5 534.51,730.5z" fill="url(#db)"/>
<path d="M534.51,730.5 536.51,730.5 535.61,752.1 533.61,752.1z" fill="#ffffff"/>
<path d="M533.61,752.1 535.61,752.1 535.20,760.0 533.20,760.0z" fill="url(#dby)"/>
<path d="M533.20,760.0 535.20,760.0 534.22,776.5 532.22,776.5z" fill="url(#dby)"/>
<path d="M532.22,776.5 534.22,776.5 531.92,806.8 529.92,806.8z" fill="url(#db)"/>
<path d="M529.92,806.8 531.92,806.8 531.73,809.0 529.73,809.0z" fill="url(#dw)"/>
<path d="M510.29,118.0 512.29,118.0 514.27,140.0 512.27,140.0z" fill="url(#dr)"/>
<path d="M512.28,140.0 514.28,140.0 515.74,156.3 513.74,156.3z" fill="url(#dw)"/>
<path d="M513.75,156.3 515.75,156.3 516.07,160.0 514.07,160.0z" fill="url(#dw)"/>
<path d="M514.07,160.0 516.07,160.0 517.37,174.4 515.37,174.4z" fill="url(#dw)"/>
<path d="M515.37,174.4 517.37,174.4 519.67,200.0 517.67,200.0z" fill="url(#dy)"/>
<path d="M517.67,200.0 519.67,200.0 520.62,210.5 518.62,210.5z" fill="url(#dy)"/>
<path d="M518.62,210.5 520.62,210.5 522.73,233.9 520.73,233.9z" fill="#ffffff"/>
<path d="M520.73,233.9 522.73,233.9 523.27,240.0 521.27,240.0z" fill="#ffffff"/>
<path d="M521.27,240.0 523.27,240.0 524.98,258.9 522.98,258.9z" fill="#ffffff"/>
<path d="M522.98,258.9 524.98,258.9 526.87,280.0 524.87,280.0z" fill="#ffffff"/>
<path d="M524.87,280.0 526.87,280.0 528.46,297.7 526.46,297.7z" fill="#ffffff"/>
<path d="M526.47,297.7 528.47,297.7 530.43,319.5 528.43,319.5z" fill="#ffffff"/>
<path d="M528.43,319.5 530.43,319.5 531.37,330.0 529.37,330.0z" fill="#ffffff"/>
<path d="M529.37,330.0 531.37,330.0 533.77,356.6 531.77,356.6z" fill="#ffffff"/>
<path d="M531.77,356.6 533.77,356.6 535.87,380.0 533.87,380.0z" fill="#ffffff"/>
<path d="M533.87,380.0 535.87,380.0 535.96,381.0 533.96,381.0z" fill="#ffffff"/>
<path d="M533.96,381.0 535.96,381.0 539.01,417.4 537.01,417.4z" fill="url(#dw)"/>
<path d="M537.01,417.4 539.01,417.4 539.17,420.0 537.17,420.0z" fill="#ffffff"/>
<path d="M537.17,420.0 539.17,420.0 540.36,456.1 538.36,456.1z" fill="#ffffff"/>
<path d="M538.36,456.1 540.36,456.1 540.37,460.0 538.37,460.0z" fill="#ffffff"/>
<path d="M538.37,460.0 540.37,460.0 540.37,484.9 538.37,484.9z" fill="#ffffff"/>
<path d="M538.37,484.9 540.37,484.9 540.37,522.5 538.37,522.5z" fill="#ffffff"/>
<path d="M538.37,522.5 540.37,522.5 540.37,546.1 538.37,546.1z" fill="#ffffff"/>
<path d="M538.37,546.1 540.37,546.1 540.37,568.7 538.37,568.7z" fill="#ffffff"/>
<path d="M538.37,568.7 540.37,568.7 540.37,603.1 538.37,603.1z" fill="url(#dr)"/>
<path d="M538.37,603.1 540.37,603.1 540.37,636.9 538.37,636.9z" fill="#ffffff"/>
<path d="M538.37,636.9 540.37,636.9 540.37,675.3 538.37,675.3z" fill="url(#db)"/>
<path d="M538.37,675.3 540.37,675.3 540.37,680.0 538.37,680.0z" fill="#ffffff"/>
<path d="M538.37,680.0 540.37,680.0 540.20,702.5 538.20,702.5z" fill="#ffffff"/>
<path d="M538.20,702.5 540.20,702.5 539.83,720.0 537.83,720.0z" fill="url(#db)"/>
<path d="M537.83,720.0 539.83,720.0 539.13,740.5 537.13,740.5z" fill="url(#db)"/>
<path d="M537.13,740.5 539.13,740.5 538.33,757.6 536.33,757.6z" fill="url(#db)"/>
<path d="M536.33,757.6 538.33,757.6 538.20,760.0 536.20,760.0z" fill="url(#db)"/>
<path d="M536.20,760.0 538.20,760.0 535.76,796.6 533.76,796.6z" fill="url(#dby)"/>
<path d="M533.76,796.6 535.76,796.6 534.73,809.0 532.73,809.0z" fill="url(#db)"/>
<path d="M514.15,118.0 516.15,118.0 518.00,138.6 516.00,138.6z" fill="url(#dy)"/>
<path d="M516.00,138.6 518.00,138.6 519.62,156.6 517.62,156.6z" fill="url(#dw)"/>
<path d="M517.62,156.6 519.62,156.6 519.92,160.0 517.92,160.0z" fill="url(#dy)"/>
<path d="M517.93,160.0 519.93,160.0 522.07,183.9 520.07,183.9z" fill="url(#dr)"/>
<path d="M520.07,183.9 522.07,183.9 523.52,200.0 521.52,200.0z" fill="url(#dw)"/>
<path d="M521.53,200.0 523.53,200.0 523.64,201.3 521.64,201.3z" fill="url(#dy)"/>
<path d="M521.64,201.3 523.64,201.3 525.86,226.0 523.86,226.0z" fill="#ffffff"/>
<path d="M523.86,226.0 525.86,226.0 527.12,240.0 525.12,240.0z" fill="#ffffff"/>
<path d="M525.13,240.0 527.13,240.0 528.47,254.9 526.47,254.9z" fill="#ffffff"/>
<path d="M526.47,254.9 528.47,254.9 530.72,280.0 528.72,280.0z" fill="#ffffff"/>
<path d="M528.73,280.0 530.73,280.0 531.68,290.6 529.68,290.6z" fill="#ffffff"/>
<path d="M529.68,290.6 531.68,290.6 533.81,314.2 531.81,314.2z" fill="#ffffff"/>
<path d="M531.81,314.2 533.81,314.2 535.22,330.0 533.22,330.0z" fill="#ffffff"/>
<path d="M533.23,330.0 535.23,330.0 536.71,346.5 534.71,346.5z" fill="#ffffff"/>
<path d="M534.71,346.5 536.71,346.5 538.80,369.7 536.80,369.7z" fill="#ffffff"/>
<path d="M536.80,369.7 538.80,369.7 539.72,380.0 537.72,380.0z" fill="#ffffff"/>
<path d="M537.73,380.0 539.73,380.0 540.95,393.6 538.95,393.6z" fill="#ffffff"/>
<path d="M538.95,393.6 540.95,393.6 542.85,417.2 540.85,417.2z" fill="#ffffff"/>
<path d="M540.85,417.2 542.85,417.2 543.02,420.0 541.02,420.0z" fill="#ffffff"/>
<path d="M541.03,420.0 543.03,420.0 544.02,443.5 542.02,443.5z" fill="#ffffff"/>
<path d="M542.02,443.5 544.02,443.5 544.22,460.0 542.22,460.0z" fill="#ffffff"/>
<path d="M542.22,460.0 544.22,460.0 544.22,461.4 542.22,461.4z" fill="#ffffff"/>
<path d="M542.22,461.4 544.22,461.4 544.22,490.2 542.22,490.2z" fill="#ffffff"/>
<path d="M542.22,490.2 544.22,490.2 544.22,527.6 542.22,527.6z" fill="#ffffff"/>
<path d="M542.22,527.6 544.22,527.6 544.22,553.6 542.22,553.6z" fill="#ffffff"/>
<path d="M542.22,553.6 544.22,553.6 544.22,584.2 542.22,584.2z" fill="#ffffff"/>
<path d="M542.22,584.2 544.22,584.2 544.22,613.4 542.22,613.4z" fill="#ffffff"/>
<path d="M542.22,613.4 544.22,613.4 544.22,642.6 542.22,642.6z" fill="url(#dw)"/>
<path d="M542.22,642.6 544.22,642.6 544.22,659.8 542.22,659.8z" fill="url(#dby)"/>
<path d="M542.22,659.8 544.22,659.8 544.22,676.3 542.22,676.3z" fill="#ffffff"/>
<path d="M542.22,676.3 544.22,676.3 544.22,680.0 542.22,680.0z" fill="#ffffff"/>
<path d="M542.22,680.0 544.22,680.0 544.10,699.3 542.10,699.3z" fill="#ffffff"/>
<path d="M542.10,699.3 544.10,699.3 543.68,720.0 541.68,720.0z" fill="url(#dby)"/>
<path d="M541.68,720.0 543.68,720.0 543.15,736.3 541.15,736.3z" fill="#ffffff"/>
<path d="M541.15,736.3 543.15,736.3 542.42,753.0 540.42,753.0z" fill="url(#db)"/>
<path d="M540.41,753.0 542.41,753.0 542.05,760.0 540.05,760.0z" fill="url(#db)"/>
<path d="M540.05,760.0 542.05,760.0 540.63,783.0 538.63,783.0z" fill="url(#dby)"/>
<path d="M538.63,783.0 540.63,783.0 539.15,802.4 537.15,802.4z" fill="url(#db)"/>
<path d="M537.14,802.4 539.14,802.4 538.58,809.0 536.58,809.0z" fill="url(#db)"/>
<path d="M517.15,118.0 519.15,118.0 521.18,140.6 519.18,140.6z" fill="url(#dw)"/>
<path d="M519.18,140.6 521.18,140.6 522.92,160.0 520.92,160.0z" fill="url(#dw)"/>
<path d="M520.93,160.0 522.93,160.0 523.15,162.5 521.15,162.5z" fill="url(#dy)"/>
<path d="M521.15,162.5 523.15,162.5 524.67,179.4 522.67,179.4z" fill="url(#dw)"/>
<path d="M522.67,179.4 524.67,179.4 526.52,200.0 524.52,200.0z" fill="url(#dy)"/>
<path d="M524.53,200.0 526.53,200.0 526.95,204.7 524.95,204.7z" fill="url(#dw)"/>
<path d="M524.95,204.7 526.95,204.7 529.25,230.2 527.25,230.2z" fill="#ffffff"/>
<path d="M527.25,230.2 529.25,230.2 530.12,240.0 528.12,240.0z" fill="#ffffff"/>
<path d="M528.13,240.0 530.13,240.0 532.60,267.5 530.60,267.5z" fill="#ffffff"/>
<path d="M530.60,267.5 532.60,267.5 533.72,280.0 531.72,280.0z" fill="#ffffff"/>
<path d="M531.73,280.0 533.73,280.0 535.58,300.6 533.58,300.6z" fill="#ffffff"/>
<path d="M533.58,300.6 535.58,300.6 538.19,329.6 536.19,329.6z" fill="#ffffff"/>
<path d="M536.23,330.0 538.23,330.0 541.69,368.6 539.69,368.6z" fill="#ffffff"/>
<path d="M539.70,368.6 541.70,368.6 542.72,380.0 540.72,380.0z" fill="#ffffff"/>
<path d="M540.73,380.0 542.73,380.0 543.58,389.6 541.58,389.6z" fill="#ffffff"/>
<path d="M541.59,389.6 543.59,389.6 545.91,418.1 543.91,418.1z" fill="#ffffff"/>
<path d="M543.91,418.1 545.91,418.1 546.02,420.0 544.02,420.0z" fill="#ffffff"/>
<path d="M544.03,420.0 546.03,420.0 547.22,457.4 545.22,457.4z" fill="#ffffff"/>
<path d="M545.22,457.4 547.22,457.4 547.22,460.0 545.22,460.0z" fill="#ffffff"/>
<path d="M545.22,460.0 547.22,460.0 547.22,473.9 545.22,473.9z" fill="#ffffff"/>
<path d="M545.22,473.9 547.22,473.9 547.22,494.1 545.22,494.1z" fill="#ffffff"/>
<path d="M545.22,494.1 547.22,494.1 547.22,513.7 545.22,513.7z" fill="#ffffff"/>
<path d="M545.22,513.7 547.22,513.7 547.22,533.8 545.22,533.8z" fill="#ffffff"/>
<path d="M545.22,533.8 547.22,533.8 547.22,561.5 545.22,561.5z" fill="#ffffff"/>
<path d="M545.22,561.5 547.22,561.5 547.22,592.3 545.22,592.3z" fill="#ffffff"/>
<path d="M545.22,592.3 547.22,592.3 547.22,632.0 545.22,632.0z" fill="#ffffff"/>
<path d="M545.22,632.0 547.22,632.0 547.22,656.8 545.22,656.8z" fill="url(#dby)"/>
<path d="M545.22,656.8 547.22,656.8 547.22,680.0 545.22,680.0z" fill="#ffffff"/>
<path d="M545.22,680.0 547.22,680.0 547.14,695.6 545.14,695.6z" fill="url(#db)"/>
<path d="M545.14,695.6 547.14,695.6 546.78,716.3 544.78,716.3z" fill="url(#dby)"/>
<path d="M544.78,716.3 546.78,716.3 546.68,720.0 544.68,720.0z" fill="#ffffff"/>
<path d="M544.68,720.0 546.68,720.0 546.22,734.4 544.22,734.4z" fill="url(#db)"/>
<path d="M544.22,734.4 546.22,734.4 545.05,760.0 543.05,760.0z" fill="url(#dby)"/>
<path d="M543.05,760.0 545.05,760.0 544.72,766.0 542.72,766.0z" fill="url(#dby)"/>
<path d="M542.71,766.0 544.71,766.0 542.17,802.1 540.17,802.1z" fill="url(#dby)"/>
<path d="M540.17,802.1 542.17,802.1 541.58,809.0 539.58,809.0z" fill="#ffffff"/>
<path d="M522.49,118.0 524.49,118.0 527.51,151.5 525.51,151.5z" fill="url(#dw)"/>
<path d="M525.51,151.5 527.51,151.5 528.27,160.0 526.27,160.0z" fill="url(#dw)"/>
<path d="M526.27,160.0 528.27,160.0 529.05,168.7 527.05,168.7z" fill="url(#dw)"/>
<path d="M527.06,168.7 529.06,168.7 530.89,189.2 528.89,189.2z" fill="url(#dy)"/>
<path d="M528.90,189.2 530.90,189.2 531.87,200.0 529.87,200.0z" fill="url(#dw)"/>
<path d="M529.87,200.0 531.87,200.0 533.12,213.9 531.12,213.9z" fill="#ffffff"/>
<path d="M531.12,213.9 533.12,213.9 534.97,234.5 532.97,234.5z" fill="#ffffff"/>
<path d="M532.97,234.5 534.97,234.5 535.47,240.0 533.47,240.0z" fill="#ffffff"/>
<path d="M533.47,240.0 535.47,240.0 537.82,266.1 535.82,266.1z" fill="#ffffff"/>
<path d="M535.82,266.1 537.82,266.1 539.07,280.0 537.07,280.0z" fill="#ffffff"/>
<path d="M537.07,280.0 539.07,280.0 540.56,296.6 538.56,296.6z" fill="#ffffff"/>
<path d="M538.56,296.6 540.56,296.6 543.33,327.3 541.33,327.3z" fill="#ffffff"/>
<path d="M541.33,327.3 543.33,327.3 543.57,330.0 541.57,330.0z" fill="#ffffff"/>
<path d="M541.57,330.0 543.57,330.0 546.82,366.1 544.82,366.1z" fill="#ffffff"/>
<path d="M544.82,366.1 546.82,366.1 548.07,380.0 546.07,380.0z" fill="#ffffff"/>
<path d="M546.07,380.0 548.07,380.0 548.40,383.7 546.40,383.7z" fill="#ffffff"/>
<path d="M546.40,383.7 548.40,383.7 550.90,412.8 548.90,412.8z" fill="#ffffff"/>
<path d="M548.90,412.8 550.90,412.8 551.37,420.0 549.37,420.0z" fill="#ffffff"/>
<path d="M549.37,420.0 551.37,420.0 551.97,431.8 549.97,431.8z" fill="#ffffff"/>
<path d="M549.97,431.8 551.97,431.8 552.55,454.8 550.55,454.8z" fill="#ffffff"/>
<path d="M550.55,454.8 552.55,454.8 552.57,460.0 550.57,460.0z" fill="#ffffff"/>
<path d="M550.57,460.0 552.57,460.0 552.57,480.6 550.57,480.6z" fill="#ffffff"/>
<path d="M550.57,480.6 552.57,480.6 552.57,514.9 550.57,514.9z" fill="#ffffff"/>
<path d="M550.57,514.9 552.57,514.9 552.57,548.4 550.57,548.4z" fill="#ffffff"/>
<path d="M550.57,548.4 552.57,548.4 552.57,577.0 550.57,577.0z" fill="#ffffff"/>
<path d="M550.57,577.0 552.57,577.0 552.57,611.6 550.57,611.6z" fill="#ffffff"/>
<path d="M550.57,611.6 552.57,611.6 552.57,637.2 550.57,637.2z" fill="url(#dw)"/>
<path d="M550.57,637.2 552.57,637.2 552.57,661.1 550.57,661.1z" fill="#ffffff"/>
<path d="M550.57,661.1 552.57,661.1 552.57,680.0 550.57,680.0z" fill="#ffffff"/>
<path d="M550.57,680.0 552.57,680.0 552.55,688.0 550.55,688.0z" fill="url(#db)"/>
<path d="M550.55,688.0 552.55,688.0 552.03,720.0 550.03,720.0z" fill="#ffffff"/>
<path d="M550.03,720.0 552.03,720.0 551.88,725.2 549.88,725.2z" fill="#ffffff"/>
<path d="M549.88,725.2 551.88,725.2 550.44,759.3 548.44,759.3z" fill="url(#dby)"/>
<path d="M548.44,759.3 550.44,759.3 550.40,760.0 548.40,760.0z" fill="url(#dby)"/>
<path d="M548.40,760.0 550.40,760.0 548.70,786.8 546.70,786.8z" fill="url(#db)"/>
<path d="M546.70,786.8 548.70,786.8 546.93,809.0 544.93,809.0z" fill="#ffffff"/>
<path d="M525.49,118.0 527.49,118.0 529.27,137.8 527.27,137.8z" fill="url(#dy)"/>
<path d="M527.27,137.8 529.27,137.8 531.27,160.0 529.27,160.0z" fill="url(#dy)"/>
<path d="M529.27,160.0 531.27,160.0 531.80,165.9 529.80,165.9z" fill="url(#dw)"/>
<path d="M529.81,165.9 531.81,165.9 533.67,186.7 531.67,186.7z" fill="url(#dy)"/>
<path d="M531.67,186.7 533.67,186.7 534.87,200.0 532.87,200.0z" fill="url(#dw)"/>
<path d="M532.87,200.0 534.87,200.0 536.51,218.2 534.51,218.2z" fill="url(#dw)"/>
<path d="M534.51,218.2 536.51,218.2 538.47,240.0 536.47,240.0z" fill="#ffffff"/>
<path d="M536.47,240.0 538.47,240.0 539.65,253.1 537.65,253.1z" fill="#ffffff"/>
<path d="M537.65,253.1 539.65,253.1 542.07,280.0 540.07,280.0z" fill="#ffffff"/>
<path d="M540.07,280.0 542.07,280.0 542.59,285.8 540.59,285.8z" fill="#ffffff"/>
<path d="M540.59,285.8 542.59,285.8 544.56,307.7 542.56,307.7z" fill="#ffffff"/>
<path d="M542.56,307.7 544.56,307.7 546.57,330.0 544.57,330.0z" fill="#ffffff"/>
<path d="M544.57,330.0 546.57,330.0 547.14,336.4 545.14,336.4z" fill="#ffffff"/>
<path d="M545.14,336.4 547.14,336.4 550.65,375.3 548.65,375.3z" fill="#ffffff"/>
<path d="M548.65,375.3 550.65,375.3 551.07,380.0 549.07,380.0z" fill="#ffffff"/>
<path d="M549.07,380.0 551.07,380.0 553.47,407.1 551.47,407.1z" fill="#ffffff"/>
<path d="M551.47,407.1 553.47,407.1 554.37,420.0 552.37,420.0z" fill="#ffffff"/>
<path d="M552.37,420.0 554.37,420.0 555.02,433.1 553.02,433.1z" fill="#ffffff"/>
<path d="M553.02,433.1 555.02,433.1 555.49,449.7 553.49,449.7z" fill="#ffffff"/>
<path d="M553.49,449.7 555.49,449.7 555.57,460.0 553.57,460.0z" fill="#ffffff"/>
<path d="M553.57,460.0 555.57,460.0 555.57,485.6 553.57,485.6z" fill="#ffffff"/>
<path d="M553.57,485.6 555.57,485.6 555.57,517.1 553.57,517.1z" fill="#ffffff"/>
<path d="M553.57,517.1 555.57,517.1 555.57,544.5 553.57,544.5z" fill="#ffffff"/>
<path d="M553.57,544.5 555.57,544.5 555.57,580.0 553.57,580.0z" fill="#ffffff"/>
<path d="M553.57,580.0 555.57,580.0 555.57,618.4 553.57,618.4z" fill="#ffffff"/>
<path d="M553.57,618.4 555.57,618.4 555.57,638.7 553.57,638.7z" fill="url(#dw)"/>
<path d="M553.57,638.7 555.57,638.7 555.57,664.8 553.57,664.8z" fill="#ffffff"/>
<path d="M553.57,664.8 555.57,664.8 555.57,680.0 553.57,680.0z" fill="url(#dby)"/>
<path d="M553.57,680.0 555.57,680.0 555.48,695.8 553.48,695.8z" fill="url(#dw)"/>
<path d="M553.48,695.8 555.48,695.8 555.22,712.3 553.22,712.3z" fill="#ffffff"/>
<path d="M553.22,712.3 555.22,712.3 555.03,720.0 553.03,720.0z" fill="url(#db)"/>
<path d="M553.03,720.0 555.03,720.0 554.35,739.9 552.35,739.9z" fill="url(#db)"/>
<path d="M552.35,739.9 554.35,739.9 553.40,760.0 551.40,760.0z" fill="url(#db)"/>
<path d="M551.40,760.0 553.40,760.0 552.41,776.5 550.41,776.5z" fill="url(#db)"/>
<path d="M550.41,776.5 552.41,776.5 550.77,799.0 548.77,799.0z" fill="url(#dby)"/>
<path d="M548.77,799.0 550.77,799.0 549.93,809.0 547.93,809.0z" fill="url(#db)"/>
<path d="M529.51,118.0 531.51,118.0 533.95,145.2 531.95,145.2z" fill="url(#dy)"/>
<path d="M531.96,145.2 533.96,145.2 535.29,160.0 533.29,160.0z" fill="url(#dw)"/>
<path d="M533.29,160.0 535.29,160.0 536.58,174.4 534.58,174.4z" fill="url(#dw)"/>
<path d="M534.59,174.4 536.59,174.4 538.89,200.0 536.89,200.0z" fill="url(#dy)"/>
<path d="M536.89,200.0 538.89,200.0 539.00,201.2 537.00,201.2z" fill="url(#dy)"/>
<path d="M537.00,201.2 539.00,201.2 540.96,222.9 538.96,222.9z" fill="url(#dw)"/>
<path d="M538.96,222.9 540.96,222.9 542.49,240.0 540.49,240.0z" fill="#ffffff"/>
<path d="M540.49,240.0 542.49,240.0 543.14,247.2 541.14,247.2z" fill="#ffffff"/>
<path d="M541.14,247.2 543.14,247.2 545.75,276.2 543.75,276.2z" fill="#ffffff"/>
<path d="M543.75,276.2 545.75,276.2 546.09,280.0 544.09,280.0z" fill="#ffffff"/>
<path d="M544.09,280.0 546.09,280.0 547.66,297.4 545.66,297.4z" fill="#ffffff"/>
<path d="M545.66,297.4 547.66,297.4 550.33,327.1 548.33,327.1z" fill="#ffffff"/>
<path d="M548.33,327.1 550.33,327.1 550.59,330.0 548.59,330.0z" fill="#ffffff"/>
<path d="M548.59,330.0 550.59,330.0 551.86,344.1 549.86,344.1z" fill="#ffffff"/>
<path d="M549.86,344.1 551.86,344.1 553.75,365.1 551.75,365.1z" fill="#ffffff"/>
<path d="M551.75,365.1 553.75,365.1 555.09,380.0 553.09,380.0z" fill="#ffffff"/>
<path d="M553.09,380.0 555.09,380.0 555.74,387.2 553.74,387.2z" fill="#ffffff"/>
<path d="M553.74,387.2 555.74,387.2 557.26,404.2 555.26,404.2z" fill="#ffffff"/>
<path d="M555.26,404.2 557.26,404.2 558.39,420.0 556.39,420.0z" fill="#ffffff"/>
<path d="M556.39,420.0 558.39,420.0 558.45,420.9 556.45,420.9z" fill="#ffffff"/>
<path d="M556.45,420.9 558.45,420.9 559.49,448.5 557.49,448.5z" fill="#ffffff"/>
<path d="M557.49,448.5 559.49,448.5 559.59,460.0 557.59,460.0z" fill="#ffffff"/>
<path d="M557.59,460.0 559.59,460.0 559.59,479.0 557.59,479.0z" fill="#ffffff"/>
<path d="M557.59,479.0 559.59,479.0 559.59,510.5 557.59,510.5z" fill="#ffffff"/>
<path d="M557.59,510.5 559.59,510.5 559.59,548.6 557.59,548.6z" fill="#ffffff"/>
<path d="M557.59,548.6 559.59,548.6 559.59,574.1 557.59,574.1z" fill="#ffffff"/>
<path d="M557.59,574.1 559.59,574.1 559.59,604.2 557.59,604.2z" fill="#ffffff"/>
<path d="M557.59,604.2 559.59,604.2 559.59,623.3 557.59,623.3z" fill="url(#dy)"/>
<path d="M557.59,623.3 559.59,623.3 559.59,645.6 557.59,645.6z" fill="#ffffff"/>
<path d="M557.59,645.6 559.59,645.6 559.59,663.0 557.59,663.0z" fill="#ffffff"/>
<path d="M557.59,663.0 559.59,663.0 559.59,680.0 557.59,680.0z" fill="url(#db)"/>
<path d="M557.59,680.0 559.59,680.0 559.45,700.3 557.45,700.3z" fill="url(#db)"/>
<path d="M557.45,700.3 559.45,700.3 559.05,720.0 557.05,720.0z" fill="url(#db)"/>
<path d="M557.05,720.0 559.05,720.0 558.58,734.5 556.58,734.5z" fill="url(#dby)"/>
<path d="M556.58,734.5 558.58,734.5 557.42,760.0 555.42,760.0z" fill="url(#dw)"/>
<path d="M555.42,760.0 557.42,760.0 556.99,767.6 554.99,767.6z" fill="#ffffff"/>
<path d="M554.99,767.6 556.99,767.6 554.26,805.4 552.26,805.4z" fill="url(#db)"/>
<path d="M552.26,805.4 554.26,805.4 553.95,809.0 551.95,809.0z" fill="url(#dby)"/>
<path d="M532.51,118.0 534.51,118.0 536.04,135.0 534.04,135.0z" fill="url(#dr)"/>
<path d="M534.05,135.0 536.05,135.0 538.29,160.0 536.29,160.0z" fill="url(#dy)"/>
<path d="M536.29,160.0 538.29,160.0 538.55,162.8 536.55,162.8z" fill="url(#dy)"/>
<path d="M536.55,162.8 538.55,162.8 540.25,181.8 538.25,181.8z" fill="url(#dw)"/>
<path d="M538.25,181.8 540.25,181.8 541.89,200.0 539.89,200.0z" fill="url(#dw)"/>
<path d="M540.29,200.0 541.49,200.0 542.90,215.6 541.70,215.6z" fill="#ffffff"/>
<path d="M541.70,215.6 542.90,215.6 545.09,240.0 543.89,240.0z" fill="#ffffff"/>
<path d="M543.89,240.0 545.09,240.0 545.89,248.9 544.69,248.9z" fill="#ffffff"/>
<path d="M544.70,248.9 545.90,248.9 548.69,280.0 547.49,280.0z" fill="#ffffff"/>
<path d="M547.49,280.0 548.69,280.0 548.91,282.4 547.71,282.4z" fill="#ffffff"/>
<path d="M547.71,282.4 548.91,282.4 550.77,303.1 549.57,303.1z" fill="#ffffff"/>
<path d="M549.57,303.1 550.77,303.1 553.19,330.0 551.99,330.0z" fill="#ffffff"/>
<path d="M552.02,330.3 553.22,330.3 555.06,350.7 553.86,350.7z" fill="#ffffff"/>
<path d="M553.86,350.7 555.06,350.7 557.69,380.0 556.49,380.0z" fill="#ffffff"/>
<path d="M556.49,380.0 557.69,380.0 558.02,383.6 556.82,383.6z" fill="#ffffff"/>
<path d="M556.82,383.6 558.02,383.6 559.46,399.6 558.26,399.6z" fill="#ffffff"/>
<path d="M558.26,399.6 559.46,399.6 560.99,420.0 559.79,420.0z" fill="#ffffff"/>
<path d="M559.79,420.0 560.99,420.0 561.72,435.0 560.52,435.0z" fill="#ffffff"/>
<path d="M560.52,435.0 561.72,435.0 562.19,460.0 560.99,460.0z" fill="#ffffff"/>
<path d="M560.99,460.0 562.19,460.0 562.19,474.5 560.99,474.5z" fill="#ffffff"/>
<path d="M560.99,474.5 562.19,474.5 562.19,510.2 560.99,510.2z" fill="#ffffff"/>
<path d="M560.99,510.2 562.19,510.2 562.19,542.9 560.99,542.9z" fill="#ffffff"/>
<path d="M560.99,542.9 562.19,542.9 562.19,573.5 560.99,573.5z" fill="#ffffff"/>
<path d="M560.99,573.5 562.19,573.5 562.19,600.4 560.99,600.4z" fill="#ffffff"/>
<path d="M560.59,600.4 562.59,600.4 562.59,630.0 560.59,630.0z" fill="url(#dy)"/>
<path d="M560.99,630.0 562.19,630.0 562.19,658.1 560.99,658.1z" fill="#ffffff"/>
<path d="M560.59,658.1 562.59,658.1 562.59,680.0 560.59,680.0z" fill="url(#db)"/>
<path d="M560.99,680.0 562.19,680.0 562.19,682.9 560.99,682.9z" fill="#ffffff"/>
<path d="M560.99,682.9 562.19,682.9 561.85,712.0 560.65,712.0z" fill="#ffffff"/>
<path d="M560.65,712.0 561.85,712.0 561.65,720.0 560.45,720.0z" fill="#ffffff"/>
<path d="M560.05,720.0 562.05,720.0 561.71,731.0 559.71,731.0z" fill="url(#db)"/>
<path d="M559.71,731.0 561.71,731.0 560.99,748.8 558.99,748.8z" fill="url(#dw)"/>
<path d="M558.99,748.8 560.99,748.8 560.42,760.0 558.42,760.0z" fill="url(#db)"/>
<path d="M558.82,760.0 560.02,760.0 559.33,771.9 558.13,771.9z" fill="#ffffff"/>
<path d="M557.73,771.9 559.73,771.9 556.95,809.0 554.95,809.0z" fill="url(#db)"/>
<path d="M536.53,118.0 538.53,118.0 541.87,155.1 539.87,155.1z" fill="url(#dw)"/>
<path d="M539.87,155.1 541.87,155.1 542.31,160.0 540.31,160.0z" fill="url(#dy)"/>
<path d="M540.31,160.0 542.31,160.0 543.58,174.1 541.58,174.1z" fill="url(#dw)"/>
<path d="M541.58,174.1 543.58,174.1 545.91,200.0 543.91,200.0z" fill="url(#dr)"/>
<path d="M543.91,200.0 545.91,200.0 546.39,205.3 544.39,205.3z" fill="url(#dy)"/>
<path d="M544.39,205.3 546.39,205.3 548.12,224.5 546.12,224.5z" fill="url(#dw)"/>
<path d="M546.12,224.5 548.12,224.5 549.51,240.0 547.51,240.0z" fill="#ffffff"/>
<path d="M547.51,240.0 549.51,240.0 549.87,244.1 547.87,244.1z" fill="#ffffff"/>
<path d="M547.88,244.1 549.88,244.1 552.43,272.5 550.43,272.5z" fill="#ffffff"/>
<path d="M550.43,272.5 552.43,272.5 553.11,280.0 551.11,280.0z" fill="#ffffff"/>
<path d="M551.11,280.0 553.11,280.0 555.61,307.8 553.61,307.8z" fill="#ffffff"/>
<path d="M553.61,307.8 555.61,307.8 557.61,330.0 555.61,330.0z" fill="#ffffff"/>
<path d="M555.65,330.4 557.65,330.4 560.43,361.4 558.43,361.4z" fill="#ffffff"/>
<path d="M558.43,361.4 560.43,361.4 562.11,380.0 560.11,380.0z" fill="#ffffff"/>
<path d="M560.11,380.0 562.11,380.0 563.84,399.3 561.84,399.3z" fill="#ffffff"/>
<path d="M561.84,399.3 563.84,399.3 565.41,420.0 563.41,420.0z" fill="#ffffff"/>
<path d="M563.41,420.0 565.41,420.0 565.89,429.1 563.89,429.1z" fill="#ffffff"/>
<path d="M563.89,429.1 565.89,429.1 566.58,454.0 564.58,454.0z" fill="#ffffff"/>
<path d="M564.58,454.0 566.58,454.0 566.61,460.0 564.61,460.0z" fill="#ffffff"/>
<path d="M564.61,460.0 566.61,460.0 566.61,477.2 564.61,477.2z" fill="#ffffff"/>
<path d="M564.61,477.2 566.61,477.2 566.61,511.2 564.61,511.2z" fill="#ffffff"/>
<path d="M564.61,511.2 566.61,511.2 566.61,543.4 564.61,543.4z" fill="#ffffff"/>
<path d="M564.61,543.4 566.61,543.4 566.61,575.2 564.61,575.2z" fill="#ffffff"/>
<path d="M564.61,575.2 566.61,575.2 566.61,607.0 564.61,607.0z" fill="#ffffff"/>
<path d="M564.61,607.0 566.61,607.0 566.61,638.2 564.61,638.2z" fill="#ffffff"/>
<path d="M564.61,638.2 566.61,638.2 566.61,666.1 564.61,666.1z" fill="#ffffff"/>
<path d="M564.61,666.1 566.61,666.1 566.61,680.0 564.61,680.0z" fill="url(#db)"/>
<path d="M564.61,680.0 566.61,680.0 566.39,705.3 564.39,705.3z" fill="url(#db)"/>
<path d="M564.39,705.3 566.39,705.3 566.07,720.0 564.07,720.0z" fill="url(#db)"/>
<path d="M564.07,720.0 566.07,720.0 565.96,723.9 563.96,723.9z" fill="url(#db)"/>
<path d="M563.95,723.9 565.95,723.9 565.34,741.2 563.34,741.2z" fill="url(#db)"/>
<path d="M563.34,741.2 565.34,741.2 564.44,760.0 562.44,760.0z" fill="#ffffff"/>
<path d="M562.44,760.0 564.44,760.0 563.92,769.0 561.92,769.0z" fill="#ffffff"/>
<path d="M561.92,769.0 563.92,769.0 561.14,807.0 559.14,807.0z" fill="url(#db)"/>
<path d="M559.14,807.0 561.14,807.0 560.97,809.0 558.97,809.0z" fill="url(#db)"/>
<path d="M539.53,118.0 541.53,118.0 544.14,147.1 542.14,147.1z" fill="url(#dw)"/>
<path d="M542.14,147.1 544.14,147.1 545.31,160.0 543.31,160.0z" fill="url(#dr)"/>
<path d="M543.31,160.0 545.31,160.0 547.40,183.3 545.40,183.3z" fill="url(#dw)"/>
<path d="M545.40,183.3 547.40,183.3 548.91,200.0 546.91,200.0z" fill="url(#dw)"/>
<path d="M547.32,200.2 548.52,200.2 551.33,231.4 550.13,231.4z" fill="#ffffff"/>
<path d="M550.13,231.4 551.33,231.4 552.11,240.0 550.91,240.0z" fill="#ffffff"/>
<path d="M550.91,240.0 552.11,240.0 553.06,250.6 551.86,250.6z" fill="#ffffff"/>
<path d="M551.86,250.6 553.06,250.6 555.71,280.0 554.51,280.0z" fill="#ffffff"/>
<path d="M554.51,280.0 555.71,280.0 556.61,290.0 555.41,290.0z" fill="#ffffff"/>
<path d="M555.41,290.0 556.61,290.0 558.40,309.9 557.20,309.9z" fill="#ffffff"/>
<path d="M557.20,309.9 558.40,309.9 560.21,330.0 559.01,330.0z" fill="#ffffff"/>
<path d="M558.61,330.0 560.61,330.0 560.76,331.6 558.76,331.6z" fill="url(#dw)"/>
<path d="M559.16,331.6 560.36,331.6 563.83,370.3 562.63,370.3z" fill="#ffffff"/>
<path d="M562.63,370.3 563.83,370.3 564.71,380.0 563.51,380.0z" fill="#ffffff"/>
<path d="M563.51,380.0 564.71,380.0 567.14,407.5 565.94,407.5z" fill="#ffffff"/>
<path d="M565.94,407.5 567.14,407.5 568.01,420.0 566.81,420.0z" fill="#ffffff"/>
<path d="M566.81,420.0 568.01,420.0 569.00,443.4 567.80,443.4z" fill="#ffffff"/>
<path d="M567.80,443.4 569.00,443.4 569.21,459.7 568.01,459.7z" fill="#ffffff"/>
<path d="M568.01,460.0 569.21,460.0 569.21,476.7 568.01,476.7z" fill="#ffffff"/>
<path d="M568.01,476.7 569.21,476.7 569.21,493.2 568.01,493.2z" fill="#ffffff"/>
<path d="M568.01,493.2 569.21,493.2 569.21,521.7 568.01,521.7z" fill="#ffffff"/>
<path d="M568.01,521.7 569.21,521.7 569.21,560.1 568.01,560.1z" fill="#ffffff"/>
<path d="M568.01,560.1 569.21,560.1 569.21,579.7 568.01,579.7z" fill="#ffffff"/>
<path d="M567.61,579.7 569.61,579.7 569.61,603.3 567.61,603.3z" fill="url(#dy)"/>
<path d="M567.61,603.3 569.61,603.3 569.61,631.0 567.61,631.0z" fill="url(#dy)"/>
<path d="M568.01,631.0 569.21,631.0 569.21,660.4 568.01,660.4z" fill="#ffffff"/>
<path d="M568.01,660.4 569.21,660.4 569.21,680.0 568.01,680.0z" fill="#ffffff"/>
<path d="M568.01,680.0 569.21,680.0 569.09,698.9 567.89,698.9z" fill="#ffffff"/>
<path d="M567.89,698.9 569.09,698.9 568.67,720.0 567.47,720.0z" fill="#ffffff"/>
<path d="M567.07,720.0 569.07,720.0 569.02,721.7 567.02,721.7z" fill="url(#dby)"/>
<path d="M567.02,721.7 569.02,721.7 568.12,746.2 566.12,746.2z" fill="url(#dby)"/>
<path d="M566.12,746.2 568.12,746.2 567.44,760.0 565.44,760.0z" fill="url(#dw)"/>
<path d="M565.44,760.0 567.44,760.0 566.30,778.8 564.30,778.8z" fill="url(#db)"/>
<path d="M564.30,778.8 566.30,778.8 564.41,803.8 562.41,803.8z" fill="url(#dby)"/>
<path d="M562.41,803.8 564.41,803.8 563.97,809.0 561.97,809.0z" fill="url(#db)"/>
<path d="M543.58,118.0 545.58,118.0 548.19,147.0 546.19,147.0z" fill="url(#dw)"/>
<path d="M546.19,147.0 548.19,147.0 549.36,160.0 547.36,160.0z" fill="url(#dy)"/>
<path d="M547.36,160.0 549.36,160.0 550.52,172.8 548.52,172.8z" fill="url(#dy)"/>
<path d="M548.52,172.8 550.52,172.8 552.96,200.0 550.96,200.0z" fill="url(#dr)"/>
<path d="M550.96,200.0 552.96,200.0 553.07,201.2 551.07,201.2z" fill="#ffffff"/>
<path d="M551.07,201.2 553.07,201.2 556.10,234.9 554.10,234.9z" fill="url(#dw)"/>
<path d="M554.10,234.9 556.10,234.9 556.56,240.0 554.56,240.0z" fill="#ffffff"/>
<path d="M554.56,240.0 556.56,240.0 557.90,254.9 555.90,254.9z" fill="#ffffff"/>
<path d="M555.90,254.9 557.90,254.9 559.92,277.3 557.92,277.3z" fill="#ffffff"/>
<path d="M557.92,277.3 559.92,277.3 560.16,280.0 558.16,280.0z" fill="#ffffff"/>
<path d="M558.16,280.0 560.16,280.0 563.05,312.1 561.05,312.1z" fill="#ffffff"/>
<path d="M561.06,312.1 563.06,312.1 564.66,330.0 562.66,330.0z" fill="#ffffff"/>
<path d="M562.66,330.0 564.66,330.0 565.16,335.5 563.16,335.5z" fill="#ffffff"/>
<path d="M563.16,335.5 565.16,335.5 567.36,360.0 565.36,360.0z" fill="#ffffff"/>
<path d="M565.36,360.0 567.36,360.0 569.16,380.0 567.16,380.0z" fill="#ffffff"/>
<path d="M567.16,380.0 569.16,380.0 570.75,397.6 568.75,397.6z" fill="#ffffff"/>
<path d="M568.75,397.6 570.75,397.6 572.08,414.0 570.08,414.0z" fill="#ffffff"/>
<path d="M570.08,414.0 572.08,414.0 572.46,420.0 570.46,420.0z" fill="#ffffff"/>
<path d="M570.46,420.0 572.46,420.0 573.33,438.8 571.33,438.8z" fill="#ffffff"/>
<path d="M571.33,438.8 573.33,438.8 573.66,459.0 571.66,459.0z" fill="#ffffff"/>
<path d="M571.66,459.0 573.66,459.0 573.66,460.0 571.66,460.0z" fill="#ffffff"/>
<path d="M571.66,460.0 573.66,460.0 573.66,498.6 571.66,498.6z" fill="#ffffff"/>
<path d="M571.66,498.6 573.66,498.6 573.66,537.0 571.66,537.0z" fill="#ffffff"/>
<path d="M571.66,537.0 573.66,537.0 573.66,574.8 571.66,574.8z" fill="#ffffff"/>
<path d="M571.66,574.8 573.66,574.8 573.66,603.0 571.66,603.0z" fill="url(#dw)"/>
<path d="M571.66,603.0 573.66,603.0 573.66,632.6 571.66,632.6z" fill="#ffffff"/>
<path d="M571.66,632.6 573.66,632.6 573.66,663.2 571.66,663.2z" fill="url(#db)"/>
<path d="M571.66,663.2 573.66,663.2 573.66,680.0 571.66,680.0z" fill="url(#db)"/>
<path d="M571.66,680.0 573.66,680.0 573.57,696.7 571.57,696.7z" fill="#ffffff"/>
<path d="M571.57,696.7 573.57,696.7 573.12,720.0 571.12,720.0z" fill="url(#db)"/>
<path d="M571.12,720.0 573.12,720.0 572.76,731.6 570.76,731.6z" fill="url(#db)"/>
<path d="M570.76,731.6 572.76,731.6 571.49,760.0 569.49,760.0z" fill="#ffffff"/>
<path d="M569.49,760.0 571.49,760.0 571.01,768.4 569.01,768.4z" fill="url(#dby)"/>
<path d="M569.01,768.4 571.01,768.4 568.87,798.9 566.87,798.9z" fill="url(#dw)"/>
<path d="M566.87,798.9 568.87,798.9 568.02,809.0 566.02,809.0z" fill="url(#dw)"/>
<path d="M546.58,118.0 548.58,118.0 551.29,148.1 549.29,148.1z" fill="url(#dw)"/>
<path d="M549.30,148.1 551.30,148.1 552.36,160.0 550.36,160.0z" fill="url(#dw)"/>
<path d="M550.36,160.0 552.36,160.0 554.19,180.3 552.19,180.3z" fill="url(#dy)"/>
<path d="M552.19,180.3 554.19,180.3 555.96,200.0 553.96,200.0z" fill="url(#dy)"/>
<path d="M553.96,200.0 555.96,200.0 557.01,211.7 555.01,211.7z" fill="url(#dr)"/>
<path d="M555.42,211.7 556.62,211.7 559.16,240.0 557.96,240.0z" fill="#ffffff"/>
<path d="M557.96,240.0 559.16,240.0 559.31,241.6 558.11,241.6z" fill="#ffffff"/>
<path d="M558.11,241.6 559.31,241.6 562.08,272.4 560.88,272.4z" fill="#ffffff"/>
<path d="M560.88,272.4 562.08,272.4 562.76,280.0 561.56,280.0z" fill="#ffffff"/>
<path d="M561.56,280.0 562.76,280.0 564.07,294.6 562.87,294.6z" fill="#ffffff"/>
<path d="M562.87,294.6 564.07,294.6 567.08,328.0 565.88,328.0z" fill="#ffffff"/>
<path d="M565.89,328.0 567.09,328.0 567.26,330.0 566.06,330.0z" fill="#ffffff"/>
<path d="M566.06,330.0 567.26,330.0 570.14,362.0 568.94,362.0z" fill="#ffffff"/>
<path d="M568.94,362.0 570.14,362.0 571.76,380.0 570.56,380.0z" fill="#ffffff"/>
<path d="M570.56,380.0 571.76,380.0 572.89,392.5 571.69,392.5z" fill="#ffffff"/>
<path d="M571.69,392.5 572.89,392.5 574.87,416.9 573.67,416.9z" fill="#ffffff"/>
<path d="M573.67,416.9 574.87,416.9 575.06,420.0 573.86,420.0z" fill="#ffffff"/>
<path d="M573.86,420.0 575.06,420.0 576.00,441.5 574.80,441.5z" fill="#ffffff"/>
<path d="M574.81,441.5 576.01,441.5 576.26,460.0 575.06,460.0z" fill="#ffffff"/>
<path d="M575.06,460.0 576.26,460.0 576.26,464.1 575.06,464.1z" fill="#ffffff"/>
<path d="M575.06,464.1 576.26,464.1 576.26,481.1 575.06,481.1z" fill="#ffffff"/>
<path d="M575.06,481.1 576.26,481.1 576.26,510.2 575.06,510.2z" fill="#ffffff"/>
<path d="M575.06,510.2 576.26,510.2 576.26,547.1 575.06,547.1z" fill="#ffffff"/>
<path d="M575.06,547.1 576.26,547.1 576.26,576.2 575.06,576.2z" fill="#ffffff"/>
<path d="M574.66,576.2 576.66,576.2 576.66,615.7 574.66,615.7z" fill="url(#dw)"/>
<path d="M575.06,615.7 576.26,615.7 576.26,645.6 575.06,645.6z" fill="#ffffff"/>
<path d="M574.66,645.6 576.66,645.6 576.66,662.5 574.66,662.5z" fill="url(#db)"/>
<path d="M575.06,662.5 576.26,662.5 576.26,680.0 575.06,680.0z" fill="#ffffff"/>
<path d="M575.06,680.0 576.26,680.0 576.21,693.0 575.01,693.0z" fill="#ffffff"/>
<path d="M575.01,693.0 576.21,693.0 575.97,709.6 574.77,709.6z" fill="#ffffff"/>
<path d="M574.37,709.6 576.37,709.6 576.12,720.0 574.12,720.0z" fill="url(#db)"/>
<path d="M574.12,720.0 576.12,720.0 575.67,734.0 573.67,734.0z" fill="url(#db)"/>
<path d="M573.67,734.0 575.67,734.0 574.49,760.0 572.49,760.0z" fill="url(#db)"/>
<path d="M572.49,760.0 574.49,760.0 573.68,773.8 571.68,773.8z" fill="url(#db)"/>
<path d="M571.68,773.8 573.68,773.8 571.02,809.0 569.02,809.0z" fill="url(#dw)"/>
<path d="M551.30,118.0 553.30,118.0 555.67,144.3 553.67,144.3z" fill="url(#dw)"/>
<path d="M553.67,144.3 555.67,144.3 557.08,160.0 555.08,160.0z" fill="url(#dw)"/>
<path d="M555.08,160.0 557.08,160.0 558.00,170.3 556.00,170.3z" fill="url(#dw)"/>
<path d="M556.00,170.3 558.00,170.3 559.83,190.6 557.83,190.6z" fill="url(#dw)"/>
<path d="M557.83,190.6 559.83,190.6 560.68,200.0 558.68,200.0z" fill="url(#dr)"/>
<path d="M558.68,200.0 560.68,200.0 562.98,225.6 560.98,225.6z" fill="#ffffff"/>
<path d="M560.98,225.6 562.98,225.6 564.28,240.0 562.28,240.0z" fill="#ffffff"/>
<path d="M562.28,240.0 564.28,240.0 566.05,259.7 564.05,259.7z" fill="#ffffff"/>
<path d="M564.05,259.7 566.05,259.7 567.88,280.0 565.88,280.0z" fill="#ffffff"/>
<path d="M565.88,280.0 567.88,280.0 569.21,294.8 567.21,294.8z" fill="#ffffff"/>
<path d="M567.21,294.8 569.21,294.8 571.04,315.1 569.04,315.1z" fill="#ffffff"/>
<path d="M569.04,315.1 571.04,315.1 572.38,330.0 570.38,330.0z" fill="#ffffff"/>
<path d="M570.38,330.0 572.38,330.0 573.27,339.9 571.27,339.9z" fill="#ffffff"/>
<path d="M571.27,339.9 573.27,339.9 576.17,372.2 574.17,372.2z" fill="#ffffff"/>
<path d="M574.18,372.2 576.18,372.2 576.88,380.0 574.88,380.0z" fill="#ffffff"/>
<path d="M574.88,380.0 576.88,380.0 577.83,390.6 575.83,390.6z" fill="#ffffff"/>
<path d="M575.83,390.6 577.83,390.6 580.18,420.0 578.18,420.0z" fill="#ffffff"/>
<path d="M578.18,420.0 580.18,420.0 580.45,424.8 578.45,424.8z" fill="#ffffff"/>
<path d="M578.45,424.8 580.45,424.8 581.29,448.9 579.29,448.9z" fill="#ffffff"/>
<path d="M579.29,448.9 581.29,448.9 581.38,460.0 579.38,460.0z" fill="#ffffff"/>
<path d="M579.38,460.0 581.38,460.0 581.38,464.9 579.38,464.9z" fill="#ffffff"/>
<path d="M579.38,464.9 581.38,464.9 581.38,489.2 579.38,489.2z" fill="#ffffff"/>
<path d="M579.38,489.2 581.38,489.2 581.38,527.1 579.38,527.1z" fill="#ffffff"/>
<path d="M579.38,527.1 581.38,527.1 581.38,551.8 579.38,551.8z" fill="#ffffff"/>
<path d="M579.38,551.8 581.38,551.8 581.38,575.5 579.38,575.5z" fill="#ffffff"/>
<path d="M579.38,575.5 581.38,575.5 581.38,594.1 579.38,594.1z" fill="url(#dy)"/>
<path d="M579.38,594.1 581.38,594.1 581.38,619.3 579.38,619.3z" fill="#ffffff"/>
<path d="M579.38,619.3 581.38,619.3 581.38,637.6 579.38,637.6z" fill="#ffffff"/>
<path d="M579.38,637.6 581.38,637.6 581.38,653.9 579.38,653.9z" fill="url(#db)"/>
<path d="M579.38,653.9 581.38,653.9 581.38,680.0 579.38,680.0z" fill="#ffffff"/>
<path d="M579.38,680.0 581.38,680.0 581.37,685.4 579.37,685.4z" fill="#ffffff"/>
<path d="M579.37,685.4 581.37,685.4 580.84,720.0 578.84,720.0z" fill="url(#db)"/>
<path d="M578.82,720.5 580.82,720.5 579.90,746.0 577.90,746.0z" fill="url(#db)"/>
<path d="M577.90,746.0 579.90,746.0 579.21,760.0 577.21,760.0z" fill="url(#db)"/>
<path d="M577.21,760.0 579.21,760.0 577.67,784.5 575.67,784.5z" fill="url(#dby)"/>
<path d="M575.67,784.5 577.67,784.5 575.73,809.0 573.73,809.0z" fill="url(#dby)"/>
<path d="M554.30,118.0 556.30,118.0 557.99,136.8 555.99,136.8z" fill="url(#dw)"/>
<path d="M556.00,136.8 558.00,136.8 560.08,160.0 558.08,160.0z" fill="url(#dy)"/>
<path d="M558.08,160.0 560.08,160.0 561.44,175.1 559.44,175.1z" fill="url(#dw)"/>
<path d="M559.44,175.1 561.44,175.1 563.68,200.0 561.68,200.0z" fill="url(#dw)"/>
<path d="M562.08,200.0 563.28,200.0 564.55,214.2 563.35,214.2z" fill="#ffffff"/>
<path d="M563.36,214.2 564.56,214.2 566.88,240.0 565.68,240.0z" fill="#ffffff"/>
<path d="M565.68,240.0 566.88,240.0 566.98,241.1 565.78,241.1z" fill="#ffffff"/>
<path d="M565.78,241.1 566.98,241.1 568.49,257.9 567.29,257.9z" fill="#ffffff"/>
<path d="M566.89,257.9 568.89,257.9 570.88,280.0 568.88,280.0z" fill="url(#dw)"/>
<path d="M569.29,280.1 570.49,280.1 572.15,298.6 570.95,298.6z" fill="#ffffff"/>
<path d="M570.96,298.6 572.16,298.6 573.96,318.7 572.76,318.7z" fill="#ffffff"/>
<path d="M572.76,318.7 573.96,318.7 574.98,330.0 573.78,330.0z" fill="#ffffff"/>
<path d="M573.78,330.0 574.98,330.0 576.00,341.3 574.80,341.3z" fill="#ffffff"/>
<path d="M574.80,341.3 576.00,341.3 578.64,370.7 577.44,370.7z" fill="#ffffff"/>
<path d="M577.44,370.7 578.64,370.7 579.48,380.0 578.28,380.0z" fill="#ffffff"/>
<path d="M578.28,380.0 579.48,380.0 580.29,389.0 579.09,389.0z" fill="#ffffff"/>
<path d="M579.09,389.0 580.29,389.0 582.78,420.0 581.58,420.0z" fill="#ffffff"/>
<path d="M581.58,420.0 582.78,420.0 583.19,427.6 581.99,427.6z" fill="#ffffff"/>
<path d="M581.99,427.6 583.19,427.6 583.96,454.8 582.76,454.8z" fill="#ffffff"/>
<path d="M582.76,454.8 583.96,454.8 583.98,460.0 582.78,460.0z" fill="#ffffff"/>
<path d="M582.78,460.0 583.98,460.0 583.98,476.9 582.78,476.9z" fill="#ffffff"/>
<path d="M582.78,476.9 583.98,476.9 583.98,493.4 582.78,493.4z" fill="#ffffff"/>
<path d="M582.78,493.4 583.98,493.4 583.98,523.5 582.78,523.5z" fill="#ffffff"/>
<path d="M582.78,523.5 583.98,523.5 583.98,558.9 582.78,558.9z" fill="#ffffff"/>
<path d="M582.78,558.9 583.98,558.9 583.98,595.4 582.78,595.4z" fill="#ffffff"/>
<path d="M582.78,595.4 583.98,595.4 583.98,626.3 582.78,626.3z" fill="#ffffff"/>
<path d="M582.38,626.3 584.38,626.3 584.38,655.4 582.38,655.4z" fill="url(#db)"/>
<path d="M582.78,655.4 583.98,655.4 583.98,671.8 582.78,671.8z" fill="#ffffff"/>
<path d="M582.78,671.8 583.98,671.8 583.98,680.0 582.78,680.0z" fill="#ffffff"/>
<path d="M582.78,680.0 583.98,680.0 583.88,697.3 582.68,697.3z" fill="#ffffff"/>
<path d="M582.28,697.3 584.28,697.3 583.84,720.0 581.84,720.0z" fill="url(#dby)"/>
<path d="M582.23,720.0 583.43,720.0 582.88,737.0 581.68,737.0z" fill="#ffffff"/>
<path d="M581.28,737.0 583.28,737.0 582.35,757.2 580.35,757.2z" fill="url(#db)"/>
<path d="M580.35,757.2 582.35,757.2 582.21,760.0 580.21,760.0z" fill="url(#db)"/>
<path d="M580.21,760.0 582.21,760.0 580.04,793.1 578.04,793.1z" fill="url(#db)"/>
<path d="M578.04,793.1 580.04,793.1 578.73,809.0 576.73,809.0z" fill="url(#db)"/>
<path d="M557.21,118.0 559.21,118.0 562.14,150.6 560.14,150.6z" fill="url(#dw)"/>
<path d="M560.15,150.6 562.15,150.6 562.99,160.0 560.99,160.0z" fill="url(#dy)"/>
<path d="M560.99,160.0 562.99,160.0 565.31,185.8 563.31,185.8z" fill="url(#dy)"/>
<path d="M563.31,185.8 565.31,185.8 566.59,200.0 564.59,200.0z" fill="url(#dw)"/>
<path d="M564.59,200.0 566.59,200.0 566.75,201.8 564.75,201.8z" fill="url(#dy)"/>
<path d="M564.75,201.8 566.75,201.8 569.67,234.3 567.67,234.3z" fill="url(#dr)"/>
<path d="M567.67,234.3 569.67,234.3 570.19,240.0 568.19,240.0z" fill="#ffffff"/>
<path d="M568.19,240.0 570.19,240.0 572.54,266.1 570.54,266.1z" fill="#ffffff"/>
<path d="M570.54,266.1 572.54,266.1 573.79,280.0 571.79,280.0z" fill="#ffffff"/>
<path d="M571.79,280.0 573.79,280.0 574.38,286.6 572.38,286.6z" fill="#ffffff"/>
<path d="M572.39,286.6 574.39,286.6 575.99,304.4 573.99,304.4z" fill="#ffffff"/>
<path d="M573.99,304.4 575.99,304.4 578.29,330.0 576.29,330.0z" fill="#ffffff"/>
<path d="M576.29,330.0 578.29,330.0 578.92,337.0 576.92,337.0z" fill="#ffffff"/>
<path d="M576.92,337.0 578.92,337.0 581.25,362.9 579.25,362.9z" fill="#ffffff"/>
<path d="M579.25,362.9 581.25,362.9 582.79,380.0 580.79,380.0z" fill="#ffffff"/>
<path d="M580.79,380.0 582.79,380.0 583.46,387.5 581.46,387.5z" fill="#ffffff"/>
<path d="M581.46,387.5 583.46,387.5 586.09,420.0 584.09,420.0z" fill="#ffffff"/>
<path d="M584.09,420.0 586.09,420.0 586.40,425.6 584.40,425.6z" fill="#ffffff"/>
<path d="M584.40,425.6 586.40,425.6 587.29,460.0 585.29,460.0z" fill="#ffffff"/>
<path d="M585.29,460.0 587.29,460.0 587.29,462.2 585.29,462.2z" fill="#ffffff"/>
<path d="M585.29,462.2 587.29,462.2 587.29,483.0 585.29,483.0z" fill="#ffffff"/>
<path d="M585.29,483.0 587.29,483.0 587.29,517.0 585.29,517.0z" fill="#ffffff"/>
<path d="M585.29,517.0 587.29,517.0 587.29,533.5 585.29,533.5z" fill="#ffffff"/>
<path d="M585.29,533.5 587.29,533.5 587.29,556.5 585.29,556.5z" fill="#ffffff"/>
<path d="M585.29,556.5 587.29,556.5 587.29,572.6 585.29,572.6z" fill="#ffffff"/>
<path d="M585.29,572.6 587.29,572.6 587.29,604.7 585.29,604.7z" fill="url(#dr)"/>
<path d="M585.29,604.7 587.29,604.7 587.29,625.3 585.29,625.3z" fill="#ffffff"/>
<path d="M585.29,625.3 587.29,625.3 587.29,653.2 585.29,653.2z" fill="url(#dw)"/>
<path d="M585.29,653.2 587.29,653.2 587.29,676.5 585.29,676.5z" fill="#ffffff"/>
<path d="M585.29,676.5 587.29,676.5 587.29,680.0 585.29,680.0z" fill="url(#dby)"/>
<path d="M585.29,680.0 587.29,680.0 587.18,698.0 585.18,698.0z" fill="url(#db)"/>
<path d="M585.18,698.0 587.18,698.0 586.75,720.0 584.75,720.0z" fill="url(#dby)"/>
<path d="M584.74,720.0 586.74,720.0 586.37,732.1 584.37,732.1z" fill="url(#db)"/>
<path d="M584.37,732.1 586.37,732.1 585.44,753.8 583.44,753.8z" fill="#ffffff"/>
<path d="M583.44,753.8 585.44,753.8 585.12,760.0 583.12,760.0z" fill="url(#dw)"/>
<path d="M583.12,760.0 585.12,760.0 583.56,784.9 581.56,784.9z" fill="url(#dby)"/>
<path d="M581.56,784.9 583.56,784.9 581.64,809.0 579.64,809.0z" fill="url(#dby)"/>
<path d="M560.21,118.0 562.21,118.0 564.90,147.9 562.90,147.9z" fill="url(#dw)"/>
<path d="M562.90,147.9 564.90,147.9 565.99,160.0 563.99,160.0z" fill="url(#dy)"/>
<path d="M563.99,160.0 565.99,160.0 568.13,183.8 566.13,183.8z" fill="url(#dy)"/>
<path d="M566.13,183.8 568.13,183.8 569.59,200.0 567.59,200.0z" fill="url(#dw)"/>
<path d="M567.99,200.0 569.19,200.0 570.44,213.9 569.24,213.9z" fill="#ffffff"/>
<path d="M569.24,213.9 570.44,213.9 572.79,240.0 571.59,240.0z" fill="#ffffff"/>
<path d="M571.59,240.0 572.79,240.0 573.76,250.8 572.56,250.8z" fill="#ffffff"/>
<path d="M572.56,250.8 573.76,250.8 576.39,280.0 575.19,280.0z" fill="#ffffff"/>
<path d="M575.19,280.0 576.39,280.0 577.23,289.4 576.03,289.4z" fill="#ffffff"/>
<path d="M576.04,289.4 577.24,289.4 578.78,306.6 577.58,306.6z" fill="#ffffff"/>
<path d="M577.59,306.6 578.79,306.6 580.89,330.0 579.69,330.0z" fill="#ffffff"/>
<path d="M579.69,330.0 580.89,330.0 581.56,337.5 580.36,337.5z" fill="#ffffff"/>
<path d="M580.36,337.5 581.56,337.5 585.11,376.9 583.91,376.9z" fill="#ffffff"/>
<path d="M583.91,376.9 585.11,376.9 585.39,380.0 584.19,380.0z" fill="#ffffff"/>
<path d="M584.19,380.0 585.39,380.0 587.34,401.7 586.14,401.7z" fill="#ffffff"/>
<path d="M586.14,401.7 587.34,401.7 588.58,418.3 587.38,418.3z" fill="#ffffff"/>
<path d="M587.38,418.3 588.58,418.3 588.69,420.0 587.49,420.0z" fill="#ffffff"/>
<path d="M587.49,420.0 588.69,420.0 589.69,443.7 588.49,443.7z" fill="#ffffff"/>
<path d="M588.49,443.7 589.69,443.7 589.89,460.0 588.69,460.0z" fill="#ffffff"/>
<path d="M588.69,460.0 589.89,460.0 589.89,473.8 588.69,473.8z" fill="#ffffff"/>
<path d="M588.69,473.8 589.89,473.8 589.89,495.9 588.69,495.9z" fill="#ffffff"/>
<path d="M588.69,495.9 589.89,495.9 589.89,533.6 588.69,533.6z" fill="#ffffff"/>
<path d="M588.69,533.6 589.89,533.6 589.89,549.8 588.69,549.8z" fill="#ffffff"/>
<path d="M588.69,549.8 589.89,549.8 589.89,572.9 588.69,572.9z" fill="#ffffff"/>
<path d="M588.69,572.9 589.89,572.9 589.89,608.4 588.69,608.4z" fill="#ffffff"/>
<path d="M588.69,608.4 589.89,608.4 589.89,630.3 588.69,630.3z" fill="#ffffff"/>
<path d="M588.29,630.3 590.29,630.3 590.29,650.7 588.29,650.7z" fill="url(#db)"/>
<path d="M588.69,650.7 589.89,650.7 589.89,674.0 588.69,674.0z" fill="#ffffff"/>
<path d="M588.69,674.0 589.89,674.0 589.89,680.0 588.69,680.0z" fill="#ffffff"/>
<path d="M588.29,680.0 590.29,680.0 590.21,694.7 588.21,694.7z" fill="url(#db)"/>
<path d="M588.21,694.7 590.21,694.7 589.75,720.0 587.75,720.0z" fill="url(#db)"/>
<path d="M588.14,720.0 589.34,720.0 589.10,728.3 587.90,728.3z" fill="#ffffff"/>
<path d="M587.90,728.3 589.10,728.3 587.72,760.0 586.52,760.0z" fill="#ffffff"/>
<path d="M586.52,760.0 587.72,760.0 587.43,765.0 586.23,765.0z" fill="#ffffff"/>
<path d="M585.83,765.0 587.83,765.0 586.44,786.5 584.44,786.5z" fill="url(#dby)"/>
<path d="M584.44,786.5 586.44,786.5 584.64,809.0 582.64,809.0z" fill="url(#db)"/>
<path d="M565.04,118.0 567.04,118.0 569.75,148.1 567.75,148.1z" fill="url(#dr)"/>
<path d="M567.75,148.1 569.75,148.1 570.82,160.0 568.82,160.0z" fill="url(#dw)"/>
<path d="M568.82,160.0 570.82,160.0 572.81,182.0 570.81,182.0z" fill="url(#dw)"/>
<path d="M570.81,182.0 572.81,182.0 574.42,200.0 572.42,200.0z" fill="url(#dw)"/>
<path d="M572.42,200.0 574.42,200.0 574.49,200.8 572.49,200.8z" fill="url(#dw)"/>
<path d="M572.49,200.8 574.49,200.8 576.33,221.2 574.33,221.2z" fill="#ffffff"/>
<path d="M574.33,221.2 576.33,221.2 578.02,240.0 576.02,240.0z" fill="#ffffff"/>
<path d="M576.02,240.0 578.02,240.0 579.61,257.6 577.61,257.6z" fill="#ffffff"/>
<path d="M577.61,257.6 579.61,257.6 581.61,279.8 579.61,279.8z" fill="#ffffff"/>
<path d="M579.62,280.0 581.62,280.0 584.65,313.7 582.65,313.7z" fill="#ffffff"/>
<path d="M582.66,313.7 584.66,313.7 586.12,330.0 584.12,330.0z" fill="#ffffff"/>
<path d="M584.12,330.0 586.12,330.0 587.07,340.5 585.07,340.5z" fill="#ffffff"/>
<path d="M585.07,340.5 587.07,340.5 589.21,364.3 587.21,364.3z" fill="#ffffff"/>
<path d="M587.21,364.3 589.21,364.3 590.62,380.0 588.62,380.0z" fill="#ffffff"/>
<path d="M588.62,380.0 590.62,380.0 592.68,403.0 590.68,403.0z" fill="#ffffff"/>
<path d="M590.69,403.0 592.69,403.0 593.92,420.0 591.92,420.0z" fill="#ffffff"/>
<path d="M591.92,420.0 593.92,420.0 594.63,434.4 592.63,434.4z" fill="#ffffff"/>
<path d="M592.63,434.4 594.63,434.4 595.08,452.4 593.08,452.4z" fill="#ffffff"/>
<path d="M593.08,452.4 595.08,452.4 595.12,460.0 593.12,460.0z" fill="#ffffff"/>
<path d="M593.12,460.0 595.12,460.0 595.12,475.2 593.12,475.2z" fill="#ffffff"/>
<path d="M593.12,475.2 595.12,475.2 595.12,496.8 593.12,496.8z" fill="#ffffff"/>
<path d="M593.12,496.8 595.12,496.8 595.12,535.5 593.12,535.5z" fill="#ffffff"/>
<path d="M593.12,535.5 595.12,535.5 595.12,566.8 593.12,566.8z" fill="#ffffff"/>
<path d="M593.12,566.8 595.12,566.8 595.12,587.9 593.12,587.9z" fill="#ffffff"/>
<path d="M593.12,587.9 595.12,587.9 595.12,613.8 593.12,613.8z" fill="#ffffff"/>
<path d="M593.12,613.8 595.12,613.8 595.12,632.8 593.12,632.8z" fill="#ffffff"/>
<path d="M593.12,632.8 595.12,632.8 595.12,649.0 593.12,649.0z" fill="url(#dby)"/>
<path d="M593.12,649.0 595.12,649.0 595.12,677.8 593.12,677.8z" fill="#ffffff"/>
<path d="M593.12,677.8 595.12,677.8 595.12,680.0 593.12,680.0z" fill="url(#db)"/>
<path d="M593.12,680.0 595.12,680.0 594.94,703.5 592.94,703.5z" fill="url(#dby)"/>
<path d="M592.94,703.5 594.94,703.5 594.58,720.0 592.58,720.0z" fill="url(#dby)"/>
<path d="M592.58,720.0 594.58,720.0 594.35,727.9 592.35,727.9z" fill="url(#db)"/>
<path d="M592.35,727.9 594.35,727.9 592.95,760.0 590.95,760.0z" fill="url(#db)"/>
<path d="M590.95,760.0 592.95,760.0 592.74,763.9 590.74,763.9z" fill="url(#db)"/>
<path d="M590.74,763.9 592.74,763.9 590.36,798.6 588.36,798.6z" fill="#ffffff"/>
<path d="M588.36,798.6 590.36,798.6 589.48,809.0 587.48,809.0z" fill="url(#dby)"/>
<path d="M568.04,118.0 570.04,118.0 572.40,144.2 570.40,144.2z" fill="url(#dw)"/>
<path d="M570.40,144.2 572.40,144.2 573.82,160.0 571.82,160.0z" fill="url(#dr)"/>
<path d="M571.82,160.0 573.82,160.0 573.96,161.5 571.96,161.5z" fill="url(#dr)"/>
<path d="M571.96,161.5 573.96,161.5 577.02,195.5 575.02,195.5z" fill="url(#dy)"/>
<path d="M575.02,195.5 577.02,195.5 577.42,200.0 575.42,200.0z" fill="url(#dw)"/>
<path d="M575.42,200.0 577.42,200.0 579.67,225.0 577.67,225.0z" fill="url(#dw)"/>
<path d="M578.07,225.0 579.27,225.0 580.62,240.0 579.42,240.0z" fill="#ffffff"/>
<path d="M579.42,240.0 580.62,240.0 581.06,244.8 579.86,244.8z" fill="#ffffff"/>
<path d="M579.86,244.8 581.06,244.8 583.91,276.6 582.71,276.6z" fill="#ffffff"/>
<path d="M582.72,276.6 583.92,276.6 584.22,280.0 583.02,280.0z" fill="#ffffff"/>
<path d="M583.02,280.0 584.22,280.0 587.05,311.4 585.85,311.4z" fill="#ffffff"/>
<path d="M585.85,311.4 587.05,311.4 588.72,330.0 587.52,330.0z" fill="#ffffff"/>
<path d="M587.52,330.0 588.72,330.0 588.93,332.3 587.73,332.3z" fill="#ffffff"/>
<path d="M587.73,332.3 588.93,332.3 592.40,370.8 591.20,370.8z" fill="#ffffff"/>
<path d="M591.20,370.8 592.40,370.8 593.22,380.0 592.02,380.0z" fill="#ffffff"/>
<path d="M592.02,380.0 593.22,380.0 595.06,400.4 593.86,400.4z" fill="#ffffff"/>
<path d="M593.86,400.4 595.06,400.4 596.52,420.0 595.32,420.0z" fill="#ffffff"/>
<path d="M595.32,420.0 596.52,420.0 597.43,440.2 596.23,440.2z" fill="#ffffff"/>
<path d="M596.23,440.2 597.43,440.2 597.72,460.0 596.52,460.0z" fill="#ffffff"/>
<path d="M596.52,460.0 597.72,460.0 597.72,462.2 596.52,462.2z" fill="#ffffff"/>
<path d="M596.52,462.2 597.72,462.2 597.72,493.4 596.52,493.4z" fill="#ffffff"/>
<path d="M596.52,493.4 597.72,493.4 597.72,522.0 596.52,522.0z" fill="#ffffff"/>
<path d="M596.52,522.0 597.72,522.0 597.72,541.8 596.52,541.8z" fill="#ffffff"/>
<path d="M596.52,541.8 597.72,541.8 597.72,560.9 596.52,560.9z" fill="#ffffff"/>
<path d="M596.52,560.9 597.72,560.9 597.72,579.0 596.52,579.0z" fill="#ffffff"/>
<path d="M596.52,579.0 597.72,579.0 597.72,616.4 596.52,616.4z" fill="#ffffff"/>
<path d="M596.52,616.4 597.72,616.4 597.72,655.5 596.52,655.5z" fill="#ffffff"/>
<path d="M596.52,655.5 597.72,655.5 597.72,672.4 596.52,672.4z" fill="#ffffff"/>
<path d="M596.52,672.4 597.72,672.4 597.72,680.0 596.52,680.0z" fill="#ffffff"/>
<path d="M596.12,680.0 598.12,680.0 598.00,699.0 596.00,699.0z" fill="url(#db)"/>
<path d="M596.40,699.0 597.60,699.0 597.18,720.0 595.98,720.0z" fill="#ffffff"/>
<path d="M595.98,720.0 597.18,720.0 596.90,729.4 595.70,729.4z" fill="#ffffff"/>
<path d="M595.30,729.4 597.30,729.4 596.02,758.8 594.02,758.8z" fill="url(#dby)"/>
<path d="M594.02,758.8 596.02,758.8 595.95,760.0 593.95,760.0z" fill="url(#db)"/>
<path d="M593.95,760.0 595.95,760.0 594.10,789.0 592.10,789.0z" fill="url(#db)"/>
<path d="M592.10,789.0 594.10,789.0 592.48,809.0 590.48,809.0z" fill="url(#dby)"/>
<path d="M570.80,118.0 572.80,118.0 574.80,140.3 572.80,140.3z" fill="url(#dw)"/>
<path d="M572.80,140.3 574.80,140.3 576.57,159.9 574.57,159.9z" fill="url(#dw)"/>
<path d="M574.58,160.0 576.58,160.0 578.50,181.4 576.50,181.4z" fill="url(#dy)"/>
<path d="M576.51,181.4 578.51,181.4 580.18,200.0 578.18,200.0z" fill="url(#dw)"/>
<path d="M578.18,200.0 580.18,200.0 580.42,202.8 578.42,202.8z" fill="url(#dw)"/>
<path d="M578.42,202.8 580.42,202.8 583.30,234.8 581.30,234.8z" fill="url(#dw)"/>
<path d="M581.31,234.8 583.31,234.8 583.78,240.0 581.78,240.0z" fill="#ffffff"/>
<path d="M581.78,240.0 583.78,240.0 585.68,261.2 583.68,261.2z" fill="#ffffff"/>
<path d="M583.68,261.2 585.68,261.2 587.38,280.0 585.38,280.0z" fill="#ffffff"/>
<path d="M585.38,280.0 587.38,280.0 589.07,298.9 587.07,298.9z" fill="#ffffff"/>
<path d="M587.07,298.9 589.07,298.9 591.88,330.0 589.88,330.0z" fill="#ffffff"/>
<path d="M589.88,330.0 591.88,330.0 592.27,334.4 590.27,334.4z" fill="#ffffff"/>
<path d="M590.27,334.4 592.27,334.4 594.75,361.9 592.75,361.9z" fill="#ffffff"/>
<path d="M592.75,361.9 594.75,361.9 596.38,380.0 594.38,380.0z" fill="#ffffff"/>
<path d="M594.38,380.0 596.38,380.0 597.21,389.3 595.21,389.3z" fill="#ffffff"/>
<path d="M595.21,389.3 597.21,389.3 599.52,417.4 597.52,417.4z" fill="#ffffff"/>
<path d="M597.52,417.4 599.52,417.4 599.68,420.0 597.68,420.0z" fill="#ffffff"/>
<path d="M597.68,420.0 599.68,420.0 600.87,456.8 598.87,456.8z" fill="#ffffff"/>
<path d="M598.87,456.8 600.87,456.8 600.88,460.0 598.88,460.0z" fill="#ffffff"/>
<path d="M598.88,460.0 600.88,460.0 600.88,482.9 598.88,482.9z" fill="#ffffff"/>
<path d="M598.88,482.9 600.88,482.9 600.88,509.2 598.88,509.2z" fill="#ffffff"/>
<path d="M598.88,509.2 600.88,509.2 600.88,529.1 598.88,529.1z" fill="#ffffff"/>
<path d="M598.88,529.1 600.88,529.1 600.88,566.6 598.88,566.6z" fill="#ffffff"/>
<path d="M598.88,566.6 600.88,566.6 600.88,601.7 598.88,601.7z" fill="#ffffff"/>
<path d="M598.88,601.7 600.88,601.7 600.88,633.9 598.88,633.9z" fill="url(#dw)"/>
<path d="M598.88,633.9 600.88,633.9 600.88,668.6 598.88,668.6z" fill="#ffffff"/>
<path d="M598.88,668.6 600.88,668.6 600.88,680.0 598.88,680.0z" fill="url(#db)"/>
<path d="M598.88,680.0 600.88,680.0 600.81,693.8 598.81,693.8z" fill="url(#db)"/>
<path d="M598.81,693.8 600.81,693.8 600.33,720.0 598.33,720.0z" fill="#ffffff"/>
<path d="M598.33,720.0 600.33,720.0 600.04,729.6 598.04,729.6z" fill="url(#dby)"/>
<path d="M598.04,729.6 600.04,729.6 599.19,750.5 597.19,750.5z" fill="url(#dw)"/>
<path d="M597.19,750.5 599.19,750.5 598.71,760.0 596.71,760.0z" fill="url(#dby)"/>
<path d="M596.70,760.0 598.70,760.0 598.34,766.5 596.34,766.5z" fill="url(#db)"/>
<path d="M596.34,766.5 598.34,766.5 596.10,798.7 594.10,798.7z" fill="url(#db)"/>
<path d="M594.10,798.7 596.10,798.7 595.23,809.0 593.23,809.0z" fill="url(#db)"/>
<path d="M573.80,118.0 575.80,118.0 579.12,154.9 577.12,154.9z" fill="url(#dy)"/>
<path d="M577.12,154.9 579.12,154.9 579.58,160.0 577.58,160.0z" fill="url(#dw)"/>
<path d="M577.58,160.0 579.58,160.0 581.65,183.1 579.65,183.1z" fill="url(#dw)"/>
<path d="M579.65,183.1 581.65,183.1 583.18,200.0 581.18,200.0z" fill="url(#dy)"/>
<path d="M581.18,200.0 583.18,200.0 584.48,214.5 582.48,214.5z" fill="url(#dy)"/>
<path d="M582.88,214.5 584.08,214.5 585.54,230.8 584.34,230.8z" fill="#ffffff"/>
<path d="M584.35,230.8 585.55,230.8 586.38,240.0 585.18,240.0z" fill="#ffffff"/>
<path d="M585.18,240.0 586.38,240.0 589.11,270.4 587.91,270.4z" fill="#ffffff"/>
<path d="M587.91,270.4 589.11,270.4 589.98,280.0 588.78,280.0z" fill="#ffffff"/>
<path d="M588.78,280.0 589.98,280.0 590.61,287.1 589.41,287.1z" fill="#ffffff"/>
<path d="M589.41,287.1 590.61,287.1 594.18,326.7 592.98,326.7z" fill="#ffffff"/>
<path d="M592.98,326.7 594.18,326.7 594.48,330.0 593.28,330.0z" fill="#ffffff"/>
<path d="M593.28,330.0 594.48,330.0 596.97,357.8 595.77,357.8z" fill="#ffffff"/>
<path d="M595.77,357.8 596.97,357.8 598.98,380.0 597.78,380.0z" fill="#ffffff"/>
<path d="M597.78,380.0 598.98,380.0 599.43,385.0 598.23,385.0z" fill="#ffffff"/>
<path d="M598.23,385.0 599.43,385.0 602.05,416.5 600.85,416.5z" fill="#ffffff"/>
<path d="M600.86,416.5 602.06,416.5 602.28,420.0 601.08,420.0z" fill="#ffffff"/>
<path d="M601.08,420.0 602.28,420.0 603.28,443.9 602.08,443.9z" fill="#ffffff"/>
<path d="M602.08,443.9 603.28,443.9 603.48,460.0 602.28,460.0z" fill="#ffffff"/>
<path d="M602.28,460.0 603.48,460.0 603.48,482.4 602.28,482.4z" fill="#ffffff"/>
<path d="M602.28,482.4 603.48,482.4 603.48,517.9 602.28,517.9z" fill="#ffffff"/>
<path d="M602.28,517.9 603.48,517.9 603.48,534.2 602.28,534.2z" fill="#ffffff"/>
<path d="M602.28,534.2 603.48,534.2 603.48,560.5 602.28,560.5z" fill="#ffffff"/>
<path d="M602.28,560.5 603.48,560.5 603.48,584.2 602.28,584.2z" fill="#ffffff"/>
<path d="M602.28,584.2 603.48,584.2 603.48,618.9 602.28,618.9z" fill="#ffffff"/>
<path d="M601.88,618.9 603.88,618.9 603.88,642.6 601.88,642.6z" fill="url(#dy)"/>
<path d="M602.28,642.6 603.48,642.6 603.48,667.0 602.28,667.0z" fill="#ffffff"/>
<path d="M601.88,667.0 603.88,667.0 603.88,680.0 601.88,680.0z" fill="url(#dby)"/>
<path d="M601.88,680.0 603.88,680.0 603.65,705.7 601.65,705.7z" fill="url(#db)"/>
<path d="M602.05,705.7 603.25,705.7 602.93,720.0 601.73,720.0z" fill="#ffffff"/>
<path d="M601.33,720.0 603.33,720.0 602.85,735.1 600.85,735.1z" fill="url(#db)"/>
<path d="M601.25,735.1 602.45,735.1 601.36,759.1 600.16,759.1z" fill="#ffffff"/>
<path d="M600.15,759.1 601.35,759.1 601.31,760.0 600.11,760.0z" fill="#ffffff"/>
<path d="M600.10,760.0 601.30,760.0 600.03,780.8 598.83,780.8z" fill="#ffffff"/>
<path d="M598.43,780.8 600.43,780.8 599.23,797.0 597.23,797.0z" fill="url(#db)"/>
<path d="M597.23,797.0 599.23,797.0 598.23,809.0 596.23,809.0z" fill="url(#db)"/>
<path d="M576.97,118.0 578.97,118.0 580.49,134.9 578.49,134.9z" fill="url(#dr)"/>
<path d="M578.49,134.9 580.49,134.9 582.75,160.0 580.75,160.0z" fill="url(#dw)"/>
<path d="M580.75,160.0 582.75,160.0 583.71,170.7 581.71,170.7z" fill="url(#dw)"/>
<path d="M581.71,170.7 583.71,170.7 585.23,187.6 583.23,187.6z" fill="url(#dy)"/>
<path d="M583.23,187.6 585.23,187.6 586.35,200.0 584.35,200.0z" fill="url(#dw)"/>
<path d="M584.35,200.0 586.35,200.0 587.48,212.6 585.48,212.6z" fill="url(#dw)"/>
<path d="M585.48,212.6 587.48,212.6 589.95,240.0 587.95,240.0z" fill="#ffffff"/>
<path d="M587.95,240.0 589.95,240.0 590.74,248.8 588.74,248.8z" fill="#ffffff"/>
<path d="M588.74,248.8 590.74,248.8 593.55,280.0 591.55,280.0z" fill="#ffffff"/>
<path d="M591.55,280.0 593.55,280.0 593.96,284.7 591.96,284.7z" fill="#ffffff"/>
<path d="M591.97,284.7 593.97,284.7 596.01,307.3 594.01,307.3z" fill="#ffffff"/>
<path d="M594.01,307.3 596.01,307.3 597.48,323.7 595.48,323.7z" fill="#ffffff"/>
<path d="M595.48,323.7 597.48,323.7 598.05,330.0 596.05,330.0z" fill="#ffffff"/>
<path d="M596.05,330.0 598.05,330.0 600.75,360.1 598.75,360.1z" fill="#ffffff"/>
<path d="M598.75,360.1 600.75,360.1 602.55,380.0 600.55,380.0z" fill="#ffffff"/>
<path d="M600.55,380.0 602.55,380.0 603.60,391.7 601.60,391.7z" fill="#ffffff"/>
<path d="M601.60,391.7 603.60,391.7 605.85,420.0 603.85,420.0z" fill="#ffffff"/>
<path d="M603.85,420.0 605.85,420.0 606.36,429.7 604.36,429.7z" fill="#ffffff"/>
<path d="M604.36,429.7 606.36,429.7 607.05,460.0 605.05,460.0z" fill="#ffffff"/>
<path d="M605.05,460.0 607.05,460.0 607.05,462.3 605.05,462.3z" fill="#ffffff"/>
<path d="M605.05,462.3 607.05,462.3 607.05,496.5 605.05,496.5z" fill="#ffffff"/>
<path d="M605.05,496.5 607.05,496.5 607.05,527.3 605.05,527.3z" fill="#ffffff"/>
<path d="M605.05,527.3 607.05,527.3 607.05,559.6 605.05,559.6z" fill="#ffffff"/>
<path d="M605.05,559.6 607.05,559.6 607.05,590.5 605.05,590.5z" fill="#ffffff"/>
<path d="M605.05,590.5 607.05,590.5 607.05,609.3 605.05,609.3z" fill="#ffffff"/>
<path d="M605.05,609.3 607.05,609.3 607.05,631.3 605.05,631.3z" fill="url(#dw)"/>
<path d="M605.05,631.3 607.05,631.3 607.05,664.7 605.05,664.7z" fill="#ffffff"/>
<path d="M605.05,664.7 607.05,664.7 607.05,680.0 605.05,680.0z" fill="url(#db)"/>
<path d="M605.05,680.0 607.05,680.0 606.87,703.1 604.87,703.1z" fill="#ffffff"/>
<path d="M604.86,703.1 606.86,703.1 606.50,720.0 604.50,720.0z" fill="#ffffff"/>
<path d="M604.50,720.0 606.50,720.0 606.42,722.9 604.42,722.9z" fill="url(#db)"/>
<path d="M604.42,722.9 606.42,722.9 605.68,743.5 603.68,743.5z" fill="url(#dby)"/>
<path d="M603.68,743.5 605.68,743.5 604.88,760.0 602.88,760.0z" fill="url(#db)"/>
<path d="M602.88,760.0 604.88,760.0 604.48,767.0 602.48,767.0z" fill="url(#db)"/>
<path d="M602.48,767.0 604.48,767.0 602.44,796.5 600.44,796.5z" fill="url(#db)"/>
<path d="M600.44,796.5 602.44,796.5 601.40,809.0 599.40,809.0z" fill="url(#dw)"/>
<path d="M579.97,118.0 581.97,118.0 585.29,154.9 583.29,154.9z" fill="url(#dy)"/>
<path d="M583.29,154.9 585.29,154.9 585.75,160.0 583.75,160.0z" fill="url(#dy)"/>
<path d="M583.75,160.0 585.75,160.0 587.26,176.9 585.26,176.9z" fill="url(#dw)"/>
<path d="M585.27,176.9 587.27,176.9 589.35,200.0 587.35,200.0z" fill="url(#dw)"/>
<path d="M587.35,200.0 589.35,200.0 590.01,207.3 588.01,207.3z" fill="url(#dy)"/>
<path d="M588.41,207.3 589.61,207.3 592.55,240.0 591.35,240.0z" fill="#ffffff"/>
<path d="M591.35,240.0 592.55,240.0 592.66,241.2 591.46,241.2z" fill="#ffffff"/>
<path d="M591.46,241.2 592.66,241.2 595.04,267.7 593.84,267.7z" fill="#ffffff"/>
<path d="M593.84,267.7 595.04,267.7 596.15,280.0 594.95,280.0z" fill="#ffffff"/>
<path d="M594.95,280.0 596.15,280.0 597.98,300.4 596.78,300.4z" fill="#ffffff"/>
<path d="M596.78,300.4 597.98,300.4 600.65,330.0 599.45,330.0z" fill="#ffffff"/>
<path d="M599.45,330.0 600.65,330.0 600.79,331.6 599.59,331.6z" fill="#ffffff"/>
<path d="M599.59,331.6 600.79,331.6 602.38,349.3 601.18,349.3z" fill="#ffffff"/>
<path d="M601.18,349.3 602.38,349.3 603.93,366.4 602.73,366.4z" fill="#ffffff"/>
<path d="M602.73,366.4 603.93,366.4 605.15,380.0 603.95,380.0z" fill="#ffffff"/>
<path d="M603.95,380.0 605.15,380.0 607.30,404.1 606.10,404.1z" fill="#ffffff"/>
<path d="M606.10,404.1 607.30,404.1 608.45,420.0 607.25,420.0z" fill="#ffffff"/>
<path d="M607.25,420.0 608.45,420.0 609.40,441.8 608.20,441.8z" fill="#ffffff"/>
<path d="M608.20,441.8 609.40,441.8 609.65,460.0 608.45,460.0z" fill="#ffffff"/>
<path d="M608.45,460.0 609.65,460.0 609.65,475.1 608.45,475.1z" fill="#ffffff"/>
<path d="M608.45,475.1 609.65,475.1 609.65,503.6 608.45,503.6z" fill="#ffffff"/>
<path d="M608.45,503.6 609.65,503.6 609.65,538.8 608.45,538.8z" fill="#ffffff"/>
<path d="M608.45,538.8 609.65,538.8 609.65,576.7 608.45,576.7z" fill="#ffffff"/>
<path d="M608.45,576.7 609.65,576.7 609.65,610.8 608.45,610.8z" fill="#ffffff"/>
<path d="M608.45,610.8 609.65,610.8 609.65,643.1 608.45,643.1z" fill="#ffffff"/>
<path d="M608.45,643.1 609.65,643.1 609.65,660.2 608.45,660.2z" fill="#ffffff"/>
<path d="M608.05,660.2 610.05,660.2 610.05,680.0 608.05,680.0z" fill="url(#db)"/>
<path d="M608.45,680.0 609.65,680.0 609.64,682.3 608.44,682.3z" fill="#ffffff"/>
<path d="M608.04,682.3 610.04,682.3 609.81,706.3 607.81,706.3z" fill="url(#db)"/>
<path d="M607.81,706.3 609.81,706.3 609.50,720.0 607.50,720.0z" fill="url(#dby)"/>
<path d="M607.50,720.0 609.50,720.0 609.08,733.3 607.08,733.3z" fill="url(#db)"/>
<path d="M607.08,733.3 609.08,733.3 608.07,756.3 606.07,756.3z" fill="url(#db)"/>
<path d="M606.47,756.3 607.67,756.3 607.48,760.0 606.28,760.0z" fill="#ffffff"/>
<path d="M605.88,760.0 607.88,760.0 605.83,791.5 603.83,791.5z" fill="url(#dw)"/>
<path d="M603.83,791.5 605.83,791.5 604.40,809.0 602.40,809.0z" fill="url(#db)"/>
<path d="M584.00,118.0 586.00,118.0 588.17,142.1 586.17,142.1z" fill="url(#dy)"/>
<path d="M586.17,142.1 588.17,142.1 589.69,159.1 587.69,159.1z" fill="url(#dw)"/>
<path d="M587.69,159.1 589.69,159.1 589.78,160.0 587.78,160.0z" fill="url(#dr)"/>
<path d="M587.78,160.0 589.78,160.0 592.25,187.5 590.25,187.5z" fill="url(#dw)"/>
<path d="M590.25,187.5 592.25,187.5 593.38,200.0 591.38,200.0z" fill="url(#dw)"/>
<path d="M591.38,200.0 593.38,200.0 593.93,206.1 591.93,206.1z" fill="#ffffff"/>
<path d="M591.93,206.1 593.93,206.1 595.98,229.0 593.98,229.0z" fill="#ffffff"/>
<path d="M593.98,229.0 595.98,229.0 596.98,240.0 594.98,240.0z" fill="#ffffff"/>
<path d="M594.98,240.0 596.98,240.0 598.09,252.4 596.09,252.4z" fill="#ffffff"/>
<path d="M596.09,252.4 598.09,252.4 600.58,280.0 598.58,280.0z" fill="#ffffff"/>
<path d="M598.58,280.0 600.58,280.0 600.69,281.3 598.69,281.3z" fill="#ffffff"/>
<path d="M598.69,281.3 600.69,281.3 602.23,298.3 600.23,298.3z" fill="#ffffff"/>
<path d="M600.23,298.3 602.23,298.3 604.17,320.0 602.17,320.0z" fill="#ffffff"/>
<path d="M602.17,320.0 604.17,320.0 605.08,330.0 603.08,330.0z" fill="#ffffff"/>
<path d="M603.08,330.0 605.08,330.0 605.64,336.2 603.64,336.2z" fill="#ffffff"/>
<path d="M603.64,336.2 605.64,336.2 608.92,372.8 606.92,372.8z" fill="#ffffff"/>
<path d="M606.93,372.8 608.93,372.8 609.58,380.0 607.58,380.0z" fill="#ffffff"/>
<path d="M607.58,380.0 609.58,380.0 612.38,412.4 610.38,412.4z" fill="#ffffff"/>
<path d="M610.38,412.4 612.38,412.4 612.88,420.0 610.88,420.0z" fill="#ffffff"/>
<path d="M610.88,420.0 612.88,420.0 613.92,445.4 611.92,445.4z" fill="#ffffff"/>
<path d="M611.92,445.4 613.92,445.4 614.08,460.0 612.08,460.0z" fill="#ffffff"/>
<path d="M612.08,460.0 614.08,460.0 614.08,461.9 612.08,461.9z" fill="#ffffff"/>
<path d="M612.08,461.9 614.08,461.9 614.08,480.9 612.08,480.9z" fill="#ffffff"/>
<path d="M612.08,480.9 614.08,480.9 614.08,515.1 612.08,515.1z" fill="#ffffff"/>
<path d="M612.08,515.1 614.08,515.1 614.08,542.5 612.08,542.5z" fill="#ffffff"/>
<path d="M612.08,542.5 614.08,542.5 614.08,575.5 612.08,575.5z" fill="#ffffff"/>
<path d="M612.08,575.5 614.08,575.5 614.08,600.0 612.08,600.0z" fill="#ffffff"/>
<path d="M612.08,600.0 614.08,600.0 614.08,638.1 612.08,638.1z" fill="#ffffff"/>
<path d="M612.08,638.1 614.08,638.1 614.08,661.4 612.08,661.4z" fill="#ffffff"/>
<path d="M612.08,661.4 614.08,661.4 614.08,680.0 612.08,680.0z" fill="url(#db)"/>
<path d="M612.08,680.0 614.08,680.0 614.03,691.5 612.03,691.5z" fill="url(#dby)"/>
<path d="M612.03,691.5 614.03,691.5 613.53,720.0 611.53,720.0z" fill="#ffffff"/>
<path d="M611.53,720.0 613.53,720.0 613.50,721.2 611.50,721.2z" fill="url(#db)"/>
<path d="M611.50,721.2 613.50,721.2 612.70,743.6 610.70,743.6z" fill="url(#db)"/>
<path d="M610.70,743.6 612.70,743.6 611.91,760.0 609.91,760.0z" fill="url(#dw)"/>
<path d="M609.91,760.0 611.91,760.0 611.54,766.5 609.54,766.5z" fill="url(#db)"/>
<path d="M609.54,766.5 611.54,766.5 608.74,805.5 606.74,805.5z" fill="url(#dby)"/>
<path d="M606.74,805.5 608.74,805.5 608.43,809.0 606.43,809.0z" fill="url(#db)"/>
<path d="M587.00,118.0 589.00,118.0 592.11,152.7 590.11,152.7z" fill="url(#dy)"/>
<path d="M590.12,152.7 592.12,152.7 592.78,160.0 590.78,160.0z" fill="url(#dw)"/>
<path d="M590.78,160.0 592.78,160.0 593.87,172.1 591.87,172.1z" fill="url(#dw)"/>
<path d="M591.87,172.1 593.87,172.1 596.05,196.4 594.05,196.4z" fill="url(#dy)"/>
<path d="M594.06,196.4 596.06,196.4 596.38,200.0 594.38,200.0z" fill="url(#dw)"/>
<path d="M594.38,200.0 596.38,200.0 598.04,218.5 596.04,218.5z" fill="url(#dw)"/>
<path d="M596.44,218.5 597.64,218.5 599.56,239.8 598.36,239.8z" fill="#ffffff"/>
<path d="M598.38,240.0 599.58,240.0 601.44,260.7 600.24,260.7z" fill="#ffffff"/>
<path d="M600.24,260.7 601.44,260.7 603.18,280.0 601.98,280.0z" fill="#ffffff"/>
<path d="M601.98,280.0 603.18,280.0 604.33,292.8 603.13,292.8z" fill="#ffffff"/>
<path d="M603.13,292.8 604.33,292.8 606.56,317.7 605.36,317.7z" fill="#ffffff"/>
<path d="M605.37,317.7 606.57,317.7 607.68,330.0 606.48,330.0z" fill="#ffffff"/>
<path d="M606.48,330.0 607.68,330.0 608.54,339.6 607.34,339.6z" fill="#ffffff"/>
<path d="M607.34,339.6 608.54,339.6 610.69,363.5 609.49,363.5z" fill="#ffffff"/>
<path d="M609.49,363.5 610.69,363.5 612.18,380.0 610.98,380.0z" fill="#ffffff"/>
<path d="M610.98,380.0 612.18,380.0 613.95,399.8 612.75,399.8z" fill="#ffffff"/>
<path d="M612.75,399.8 613.95,399.8 615.43,419.3 614.23,419.3z" fill="#ffffff"/>
<path d="M614.23,419.3 615.43,419.3 615.48,420.0 614.28,420.0z" fill="#ffffff"/>
<path d="M614.28,420.0 615.48,420.0 616.67,456.2 615.47,456.2z" fill="#ffffff"/>
<path d="M615.47,456.2 616.67,456.2 616.68,460.0 615.48,460.0z" fill="#ffffff"/>
<path d="M615.48,460.0 616.68,460.0 616.68,486.6 615.48,486.6z" fill="#ffffff"/>
<path d="M615.48,486.6 616.68,486.6 616.68,514.0 615.48,514.0z" fill="#ffffff"/>
<path d="M615.48,514.0 616.68,514.0 616.68,534.0 615.48,534.0z" fill="#ffffff"/>
<path d="M615.48,534.0 616.68,534.0 616.68,573.9 615.48,573.9z" fill="#ffffff"/>
<path d="M615.48,573.9 616.68,573.9 616.68,609.8 615.48,609.8z" fill="#ffffff"/>
<path d="M615.48,609.8 616.68,609.8 616.68,640.7 615.48,640.7z" fill="#ffffff"/>
<path d="M615.08,640.7 617.08,640.7 617.08,669.5 615.08,669.5z" fill="url(#db)"/>
<path d="M615.48,669.5 616.68,669.5 616.68,680.0 615.48,680.0z" fill="#ffffff"/>
<path d="M615.48,680.0 616.68,680.0 616.54,700.2 615.34,700.2z" fill="#ffffff"/>
<path d="M614.94,700.2 616.94,700.2 616.53,720.0 614.53,720.0z" fill="url(#dw)"/>
<path d="M614.53,720.0 616.53,720.0 616.37,725.6 614.37,725.6z" fill="url(#dby)"/>
<path d="M614.37,725.6 616.37,725.6 615.76,742.3 613.76,742.3z" fill="url(#db)"/>
<path d="M613.76,742.3 615.76,742.3 614.91,760.0 612.91,760.0z" fill="url(#db)"/>
<path d="M612.91,760.0 614.91,760.0 614.75,762.8 612.75,762.8z" fill="url(#db)"/>
<path d="M612.75,762.8 614.75,762.8 613.20,786.9 611.20,786.9z" fill="url(#db)"/>
<path d="M611.20,786.9 613.20,786.9 611.75,805.3 609.75,805.3z" fill="url(#dby)"/>
<path d="M609.75,805.3 611.75,805.3 611.43,809.0 609.43,809.0z" fill="url(#db)"/>
<path d="M589.93,118.0 591.93,118.0 594.90,151.1 592.90,151.1z" fill="url(#dy)"/>
<path d="M592.90,151.1 594.90,151.1 595.70,160.0 593.70,160.0z" fill="url(#dw)"/>
<path d="M593.71,160.0 595.71,160.0 597.36,178.4 595.36,178.4z" fill="url(#dw)"/>
<path d="M595.36,178.4 597.36,178.4 599.30,200.0 597.30,200.0z" fill="url(#dy)"/>
<path d="M597.31,200.0 599.31,200.0 600.72,215.8 598.72,215.8z" fill="url(#dw)"/>
<path d="M598.73,215.8 600.73,215.8 602.90,240.0 600.90,240.0z" fill="#ffffff"/>
<path d="M600.91,240.0 602.91,240.0 603.37,245.1 601.37,245.1z" fill="#ffffff"/>
<path d="M601.37,245.1 603.37,245.1 605.37,267.3 603.37,267.3z" fill="#ffffff"/>
<path d="M603.37,267.3 605.37,267.3 606.50,280.0 604.50,280.0z" fill="#ffffff"/>
<path d="M604.51,280.0 606.51,280.0 607.25,288.3 605.25,288.3z" fill="#ffffff"/>
<path d="M605.25,288.3 607.25,288.3 608.83,305.8 606.83,305.8z" fill="#ffffff"/>
<path d="M606.83,305.8 608.83,305.8 611.00,330.0 609.00,330.0z" fill="#ffffff"/>
<path d="M609.01,330.0 611.01,330.0 612.03,341.4 610.03,341.4z" fill="#ffffff"/>
<path d="M610.03,341.4 612.03,341.4 615.38,378.7 613.38,378.7z" fill="#ffffff"/>
<path d="M613.39,378.7 615.39,378.7 615.50,380.0 613.50,380.0z" fill="#ffffff"/>
<path d="M613.51,380.0 615.51,380.0 618.47,414.8 616.47,414.8z" fill="#ffffff"/>
<path d="M616.47,414.8 618.47,414.8 618.80,420.0 616.80,420.0z" fill="#ffffff"/>
<path d="M616.81,420.0 618.81,420.0 619.96,452.2 617.96,452.2z" fill="#ffffff"/>
<path d="M617.96,452.2 619.96,452.2 620.01,460.0 618.01,460.0z" fill="#ffffff"/>
<path d="M618.01,460.0 620.01,460.0 620.01,488.3 618.01,488.3z" fill="#ffffff"/>
<path d="M618.01,488.3 620.01,488.3 620.01,516.2 618.01,516.2z" fill="#ffffff"/>
<path d="M618.01,516.2 620.01,516.2 620.01,541.7 618.01,541.7z" fill="#ffffff"/>
<path d="M618.01,541.7 620.01,541.7 620.01,572.0 618.01,572.0z" fill="#ffffff"/>
<path d="M618.01,572.0 620.01,572.0 620.01,610.4 618.01,610.4z" fill="url(#dw)"/>
<path d="M618.01,610.4 620.01,610.4 620.01,631.1 618.01,631.1z" fill="#ffffff"/>
<path d="M618.01,631.1 620.01,631.1 620.01,670.0 618.01,670.0z" fill="url(#db)"/>
<path d="M618.01,670.0 620.01,670.0 620.01,680.0 618.01,680.0z" fill="#ffffff"/>
<path d="M618.01,680.0 620.01,680.0 619.82,703.2 617.82,703.2z" fill="#ffffff"/>
<path d="M617.82,703.2 619.82,703.2 619.46,720.0 617.46,720.0z" fill="url(#dw)"/>
<path d="M617.46,720.0 619.46,720.0 619.39,722.4 617.39,722.4z" fill="url(#db)"/>
<path d="M617.39,722.4 619.39,722.4 618.82,739.1 616.82,739.1z" fill="url(#db)"/>
<path d="M616.82,739.1 618.82,739.1 617.90,758.7 615.90,758.7z" fill="url(#db)"/>
<path d="M615.90,758.7 617.90,758.7 617.84,760.0 615.84,760.0z" fill="url(#db)"/>
<path d="M615.83,760.0 617.83,760.0 615.45,795.9 613.45,795.9z" fill="url(#db)"/>
<path d="M613.45,795.9 615.45,795.9 614.36,809.0 612.36,809.0z" fill="url(#dby)"/>
<path d="M592.93,118.0 594.93,118.0 596.41,134.6 594.41,134.6z" fill="url(#dw)"/>
<path d="M594.42,134.6 596.42,134.6 597.94,151.5 595.94,151.5z" fill="url(#dy)"/>
<path d="M595.94,151.5 597.94,151.5 598.70,160.0 596.70,160.0z" fill="url(#dy)"/>
<path d="M596.71,160.0 598.71,160.0 599.51,168.9 597.51,168.9z" fill="url(#dw)"/>
<path d="M597.51,168.9 599.51,168.9 601.45,190.5 599.45,190.5z" fill="url(#dy)"/>
<path d="M599.45,190.5 601.45,190.5 602.30,200.0 600.30,200.0z" fill="url(#dr)"/>
<path d="M600.31,200.0 602.31,200.0 603.27,210.7 601.27,210.7z" fill="url(#dr)"/>
<path d="M601.67,210.7 602.87,210.7 605.33,238.0 604.13,238.0z" fill="#ffffff"/>
<path d="M604.13,238.0 605.33,238.0 605.50,240.0 604.30,240.0z" fill="#ffffff"/>
<path d="M604.31,240.0 605.51,240.0 607.04,257.1 605.84,257.1z" fill="#ffffff"/>
<path d="M605.84,257.1 607.04,257.1 608.57,274.1 607.37,274.1z" fill="#ffffff"/>
<path d="M607.37,274.1 608.57,274.1 609.10,280.0 607.90,280.0z" fill="#ffffff"/>
<path d="M607.91,280.0 609.11,280.0 612.17,314.1 610.97,314.1z" fill="#ffffff"/>
<path d="M610.97,314.1 612.17,314.1 613.60,330.0 612.40,330.0z" fill="#ffffff"/>
<path d="M612.41,330.0 613.61,330.0 615.53,351.4 614.33,351.4z" fill="#ffffff"/>
<path d="M614.33,351.4 615.53,351.4 617.13,369.2 615.93,369.2z" fill="#ffffff"/>
<path d="M615.93,369.2 617.13,369.2 618.10,380.0 616.90,380.0z" fill="#ffffff"/>
<path d="M616.91,380.0 618.11,380.0 619.32,393.4 618.12,393.4z" fill="#ffffff"/>
<path d="M618.12,393.4 619.32,393.4 621.04,414.3 619.84,414.3z" fill="#ffffff"/>
<path d="M619.84,414.3 621.04,414.3 621.40,420.0 620.20,420.0z" fill="#ffffff"/>
<path d="M620.21,420.0 621.41,420.0 622.09,433.8 620.89,433.8z" fill="#ffffff"/>
<path d="M620.89,433.8 622.09,433.8 622.61,460.0 621.41,460.0z" fill="#ffffff"/>
<path d="M621.41,460.0 622.61,460.0 622.61,463.1 621.41,463.1z" fill="#ffffff"/>
<path d="M621.41,463.1 622.61,463.1 622.61,489.6 621.41,489.6z" fill="#ffffff"/>
<path d="M621.41,489.6 622.61,489.6 622.61,513.1 621.41,513.1z" fill="#ffffff"/>
<path d="M621.41,513.1 622.61,513.1 622.61,541.0 621.41,541.0z" fill="#ffffff"/>
<path d="M621.41,541.0 622.61,541.0 622.61,568.5 621.41,568.5z" fill="#ffffff"/>
<path d="M621.41,568.5 622.61,568.5 622.61,585.5 621.41,585.5z" fill="#ffffff"/>
<path d="M621.41,585.5 622.61,585.5 622.61,603.4 621.41,603.4z" fill="#ffffff"/>
<path d="M621.41,603.4 622.61,603.4 622.61,629.4 621.41,629.4z" fill="#ffffff"/>
<path d="M621.01,629.4 623.01,629.4 623.01,662.4 621.01,662.4z" fill="url(#db)"/>
<path d="M621.01,662.4 623.01,662.4 623.01,680.0 621.01,680.0z" fill="url(#db)"/>
<path d="M621.01,680.0 623.01,680.0 622.90,697.8 620.90,697.8z" fill="url(#db)"/>
<path d="M620.90,697.8 622.90,697.8 622.46,720.0 620.46,720.0z" fill="url(#dby)"/>
<path d="M620.86,720.0 622.06,720.0 621.97,723.4 620.77,723.4z" fill="#ffffff"/>
<path d="M620.77,723.4 621.97,723.4 621.39,739.8 620.19,739.8z" fill="#ffffff"/>
<path d="M619.79,739.8 621.79,739.8 620.84,760.0 618.84,760.0z" fill="url(#dby)"/>
<path d="M618.83,760.0 620.83,760.0 619.84,776.6 617.84,776.6z" fill="url(#dby)"/>
<path d="M617.84,776.6 619.84,776.6 618.66,793.3 616.66,793.3z" fill="url(#db)"/>
<path d="M616.65,793.3 618.65,793.3 617.36,809.0 615.36,809.0z" fill="url(#db)"/>
<path d="M597.06,118.0 599.06,118.0 602.28,153.7 600.28,153.7z" fill="url(#dw)"/>
<path d="M600.28,153.7 602.28,153.7 602.84,160.0 600.84,160.0z" fill="url(#dy)"/>
<path d="M600.84,160.0 602.84,160.0 605.41,188.6 603.41,188.6z" fill="url(#dw)"/>
<path d="M603.42,188.6 605.42,188.6 606.44,200.0 604.44,200.0z" fill="url(#dw)"/>
<path d="M604.44,200.0 606.44,200.0 607.43,211.0 605.43,211.0z" fill="url(#dw)"/>
<path d="M605.44,211.0 607.44,211.0 610.04,240.0 608.04,240.0z" fill="#ffffff"/>
<path d="M608.04,240.0 610.04,240.0 610.12,240.9 608.12,240.9z" fill="#ffffff"/>
<path d="M608.13,240.9 610.13,240.9 612.66,269.1 610.66,269.1z" fill="#ffffff"/>
<path d="M610.66,269.1 612.66,269.1 613.64,280.0 611.64,280.0z" fill="url(#dw)"/>
<path d="M611.64,280.0 613.64,280.0 615.55,301.2 613.55,301.2z" fill="#ffffff"/>
<path d="M613.55,301.2 615.55,301.2 617.59,323.9 615.59,323.9z" fill="#ffffff"/>
<path d="M615.60,323.9 617.60,323.9 618.14,330.0 616.14,330.0z" fill="#ffffff"/>
<path d="M616.14,330.0 618.14,330.0 619.98,350.4 617.98,350.4z" fill="#ffffff"/>
<path d="M617.98,350.4 619.98,350.4 621.93,372.1 619.93,372.1z" fill="#ffffff"/>
<path d="M619.93,372.1 621.93,372.1 622.64,380.0 620.64,380.0z" fill="#ffffff"/>
<path d="M620.64,380.0 622.64,380.0 624.97,406.2 622.97,406.2z" fill="#ffffff"/>
<path d="M622.98,406.2 624.98,406.2 625.94,420.0 623.94,420.0z" fill="#ffffff"/>
<path d="M623.94,420.0 625.94,420.0 626.10,422.8 624.10,422.8z" fill="#ffffff"/>
<path d="M624.11,422.8 626.11,422.8 627.14,458.6 625.14,458.6z" fill="#ffffff"/>
<path d="M625.14,458.6 627.14,458.6 627.14,460.0 625.14,460.0z" fill="#ffffff"/>
<path d="M625.14,460.0 627.14,460.0 627.14,494.6 625.14,494.6z" fill="#ffffff"/>
<path d="M625.14,494.6 627.14,494.6 627.14,513.2 625.14,513.2z" fill="#ffffff"/>
<path d="M625.14,513.2 627.14,513.2 627.14,549.4 625.14,549.4z" fill="#ffffff"/>
<path d="M625.14,549.4 627.14,549.4 627.14,569.6 625.14,569.6z" fill="#ffffff"/>
<path d="M625.14,569.6 627.14,569.6 627.14,601.4 625.14,601.4z" fill="#ffffff"/>
<path d="M625.14,601.4 627.14,601.4 627.14,618.9 625.14,618.9z" fill="#ffffff"/>
<path d="M625.14,618.9 627.14,618.9 627.14,641.6 625.14,641.6z" fill="#ffffff"/>
<path d="M625.14,641.6 627.14,641.6 627.14,671.4 625.14,671.4z" fill="url(#db)"/>
<path d="M625.14,671.4 627.14,671.4 627.14,680.0 625.14,680.0z" fill="#ffffff"/>
<path d="M625.14,680.0 627.14,680.0 626.83,710.2 624.83,710.2z" fill="#ffffff"/>
<path d="M624.83,710.2 626.83,710.2 626.60,720.0 624.60,720.0z" fill="url(#db)"/>
<path d="M624.60,720.0 626.60,720.0 625.86,741.4 623.86,741.4z" fill="#ffffff"/>
<path d="M623.86,741.4 625.86,741.4 624.97,760.0 622.97,760.0z" fill="url(#db)"/>
<path d="M622.97,760.0 624.97,760.0 624.87,761.8 622.87,761.8z" fill="url(#db)"/>
<path d="M622.87,761.8 624.87,761.8 623.82,779.0 621.82,779.0z" fill="url(#dw)"/>
<path d="M621.82,779.0 623.82,779.0 621.50,809.0 619.50,809.0z" fill="url(#dw)"/>
<path d="M600.06,118.0 602.06,118.0 604.20,141.7 602.20,141.7z" fill="url(#dy)"/>
<path d="M602.20,141.7 604.20,141.7 605.84,160.0 603.84,160.0z" fill="url(#dw)"/>
<path d="M603.84,160.0 605.84,160.0 606.16,163.5 604.16,163.5z" fill="url(#dw)"/>
<path d="M604.16,163.5 606.16,163.5 609.44,200.0 607.44,200.0z" fill="url(#dy)"/>
<path d="M607.46,200.2 609.46,200.2 612.45,233.4 610.45,233.4z" fill="url(#dy)"/>
<path d="M610.85,233.4 612.05,233.4 612.64,240.0 611.44,240.0z" fill="#ffffff"/>
<path d="M611.44,240.0 612.64,240.0 615.53,272.1 614.33,272.1z" fill="#ffffff"/>
<path d="M614.34,272.1 615.54,272.1 616.24,280.0 615.04,280.0z" fill="#ffffff"/>
<path d="M615.04,280.0 616.24,280.0 617.28,291.5 616.08,291.5z" fill="#ffffff"/>
<path d="M616.08,291.5 617.28,291.5 618.77,308.1 617.57,308.1z" fill="#ffffff"/>
<path d="M617.57,308.1 618.77,308.1 620.74,330.0 619.54,330.0z" fill="#ffffff"/>
<path d="M619.54,330.0 620.74,330.0 621.07,333.6 619.87,333.6z" fill="#ffffff"/>
<path d="M619.87,333.6 621.07,333.6 622.68,351.5 621.48,351.5z" fill="#ffffff"/>
<path d="M621.48,351.5 622.68,351.5 625.14,378.9 623.94,378.9z" fill="#ffffff"/>
<path d="M623.94,378.9 625.14,378.9 625.24,380.0 624.04,380.0z" fill="#ffffff"/>
<path d="M624.04,380.0 625.24,380.0 627.80,409.2 626.60,409.2z" fill="#ffffff"/>
<path d="M626.61,409.2 627.81,409.2 628.54,420.0 627.34,420.0z" fill="#ffffff"/>
<path d="M627.34,420.0 628.54,420.0 629.65,448.9 628.45,448.9z" fill="#ffffff"/>
<path d="M628.45,448.9 629.65,448.9 629.74,460.0 628.54,460.0z" fill="#ffffff"/>
<path d="M628.54,460.0 629.74,460.0 629.74,475.7 628.54,475.7z" fill="#ffffff"/>
<path d="M628.54,475.7 629.74,475.7 629.74,509.5 628.54,509.5z" fill="#ffffff"/>
<path d="M628.54,509.5 629.74,509.5 629.74,543.4 628.54,543.4z" fill="#ffffff"/>
<path d="M628.54,543.4 629.74,543.4 629.74,575.7 628.54,575.7z" fill="#ffffff"/>
<path d="M628.14,575.7 630.14,575.7 630.14,604.9 628.14,604.9z" fill="url(#dw)"/>
<path d="M628.54,604.9 629.74,604.9 629.74,636.5 628.54,636.5z" fill="#ffffff"/>
<path d="M628.54,636.5 629.74,636.5 629.74,672.8 628.54,672.8z" fill="#ffffff"/>
<path d="M628.54,672.8 629.74,672.8 629.74,680.0 628.54,680.0z" fill="#ffffff"/>
<path d="M628.54,680.0 629.74,680.0 629.68,693.8 628.48,693.8z" fill="#ffffff"/>
<path d="M628.08,693.8 630.08,693.8 629.83,710.6 627.83,710.6z" fill="url(#db)"/>
<path d="M627.83,710.6 629.83,710.6 629.60,720.0 627.60,720.0z" fill="url(#dby)"/>
<path d="M628.00,720.0 629.20,720.0 628.36,743.8 627.16,743.8z" fill="#ffffff"/>
<path d="M626.76,743.8 628.76,743.8 627.97,760.0 625.97,760.0z" fill="url(#dby)"/>
<path d="M625.97,760.0 627.97,760.0 627.78,763.5 625.78,763.5z" fill="url(#dby)"/>
<path d="M625.78,763.5 627.78,763.5 625.46,797.5 623.46,797.5z" fill="url(#dby)"/>
<path d="M623.46,797.5 625.46,797.5 624.50,809.0 622.50,809.0z" fill="url(#db)"/>
<path d="M605.45,118.0 607.45,118.0 610.48,151.7 608.48,151.7z" fill="url(#dw)"/>
<path d="M608.48,151.7 610.48,151.7 611.23,160.0 609.23,160.0z" fill="url(#dw)"/>
<path d="M609.23,160.0 611.23,160.0 613.99,190.6 611.99,190.6z" fill="url(#dy)"/>
<path d="M611.99,190.6 613.99,190.6 614.83,200.0 612.83,200.0z" fill="url(#dw)"/>
<path d="M612.83,200.0 614.83,200.0 617.27,227.1 615.27,227.1z" fill="#ffffff"/>
<path d="M615.27,227.1 617.27,227.1 618.43,240.0 616.43,240.0z" fill="#ffffff"/>
<path d="M616.43,240.0 618.43,240.0 620.02,257.6 618.02,257.6z" fill="#ffffff"/>
<path d="M618.02,257.6 620.02,257.6 622.03,280.0 620.03,280.0z" fill="#ffffff"/>
<path d="M620.03,280.0 622.03,280.0 623.23,293.3 621.23,293.3z" fill="#ffffff"/>
<path d="M621.23,293.3 623.23,293.3 626.22,326.6 624.22,326.6z" fill="#ffffff"/>
<path d="M624.22,326.6 626.22,326.6 626.53,330.0 624.53,330.0z" fill="#ffffff"/>
<path d="M624.53,330.0 626.53,330.0 628.96,356.9 626.96,356.9z" fill="#ffffff"/>
<path d="M626.96,356.9 628.96,356.9 631.03,380.0 629.03,380.0z" fill="#ffffff"/>
<path d="M629.03,380.0 631.03,380.0 631.92,389.9 629.92,389.9z" fill="#ffffff"/>
<path d="M629.93,389.9 631.93,389.9 633.60,409.3 631.60,409.3z" fill="#ffffff"/>
<path d="M631.60,409.3 633.60,409.3 634.33,420.0 632.33,420.0z" fill="#ffffff"/>
<path d="M632.33,420.0 634.33,420.0 635.00,433.3 633.00,433.3z" fill="#ffffff"/>
<path d="M633.00,433.3 635.00,433.3 635.53,460.0 633.53,460.0z" fill="#ffffff"/>
<path d="M633.53,460.0 635.53,460.0 635.53,463.2 633.53,463.2z" fill="#ffffff"/>
<path d="M633.53,463.2 635.53,463.2 635.53,484.6 633.53,484.6z" fill="#ffffff"/>
<path d="M633.53,484.6 635.53,484.6 635.53,507.3 633.53,507.3z" fill="#ffffff"/>
<path d="M633.53,507.3 635.53,507.3 635.53,524.5 633.53,524.5z" fill="#ffffff"/>
<path d="M633.53,524.5 635.53,524.5 635.53,540.6 633.53,540.6z" fill="#ffffff"/>
<path d="M633.53,540.6 635.53,540.6 635.53,580.4 633.53,580.4z" fill="#ffffff"/>
<path d="M633.53,580.4 635.53,580.4 635.53,597.7 633.53,597.7z" fill="url(#dw)"/>
<path d="M633.53,597.7 635.53,597.7 635.53,616.6 633.53,616.6z" fill="#ffffff"/>
<path d="M633.53,616.6 635.53,616.6 635.53,648.5 633.53,648.5z" fill="url(#dw)"/>
<path d="M633.53,648.5 635.53,648.5 635.53,678.0 633.53,678.0z" fill="#ffffff"/>
<path d="M633.53,678.0 635.53,678.0 635.53,680.0 633.53,680.0z" fill="#ffffff"/>
<path d="M633.53,680.0 635.53,680.0 635.43,697.0 633.43,697.0z" fill="url(#db)"/>
<path d="M633.43,697.0 635.43,697.0 634.99,720.0 632.99,720.0z" fill="#ffffff"/>
<path d="M632.99,720.0 634.99,720.0 634.81,726.1 632.81,726.1z" fill="#ffffff"/>
<path d="M632.81,726.1 634.81,726.1 633.50,757.4 631.50,757.4z" fill="url(#db)"/>
<path d="M631.50,757.4 633.50,757.4 633.36,760.0 631.36,760.0z" fill="url(#db)"/>
<path d="M631.36,760.0 633.36,760.0 632.44,775.5 630.44,775.5z" fill="url(#db)"/>
<path d="M630.44,775.5 632.44,775.5 629.89,809.0 627.89,809.0z" fill="url(#dby)"/>
<path d="M608.45,118.0 610.45,118.0 612.84,144.5 610.84,144.5z" fill="url(#dw)"/>
<path d="M610.84,144.5 612.84,144.5 614.23,160.0 612.23,160.0z" fill="url(#dw)"/>
<path d="M612.23,160.0 614.23,160.0 615.11,169.7 613.11,169.7z" fill="url(#dw)"/>
<path d="M613.11,169.7 615.11,169.7 617.14,192.3 615.14,192.3z" fill="url(#dw)"/>
<path d="M615.14,192.3 617.14,192.3 617.83,200.0 615.83,200.0z" fill="url(#dw)"/>
<path d="M615.83,200.0 617.83,200.0 618.92,212.1 616.92,212.1z" fill="url(#dy)"/>
<path d="M616.92,212.1 618.92,212.1 620.84,233.5 618.84,233.5z" fill="url(#dy)"/>
<path d="M619.25,233.5 620.45,233.5 621.03,240.0 619.83,240.0z" fill="#ffffff"/>
<path d="M619.83,240.0 621.03,240.0 623.11,263.1 621.91,263.1z" fill="#ffffff"/>
<path d="M621.91,263.1 623.11,263.1 624.63,280.0 623.43,280.0z" fill="#ffffff"/>
<path d="M623.43,280.0 624.63,280.0 626.39,299.5 625.19,299.5z" fill="#ffffff"/>
<path d="M625.19,299.5 626.39,299.5 629.13,330.0 627.93,330.0z" fill="#ffffff"/>
<path d="M627.93,330.0 629.13,330.0 629.78,337.3 628.58,337.3z" fill="#ffffff"/>
<path d="M628.59,337.3 629.79,337.3 632.03,362.2 630.83,362.2z" fill="#ffffff"/>
<path d="M630.83,362.2 632.03,362.2 633.59,379.5 632.39,379.5z" fill="#ffffff"/>
<path d="M632.43,380.0 633.63,380.0 635.65,402.5 634.45,402.5z" fill="#ffffff"/>
<path d="M634.45,402.5 635.65,402.5 636.93,420.0 635.73,420.0z" fill="#ffffff"/>
<path d="M635.73,420.0 636.93,420.0 637.69,435.6 636.49,435.6z" fill="#ffffff"/>
<path d="M636.49,435.6 637.69,435.6 638.13,460.0 636.93,460.0z" fill="#ffffff"/>
<path d="M636.93,460.3 638.13,460.3 638.13,486.1 636.93,486.1z" fill="#ffffff"/>
<path d="M636.93,486.1 638.13,486.1 638.13,506.9 636.93,506.9z" fill="#ffffff"/>
<path d="M636.93,506.9 638.13,506.9 638.13,543.7 636.93,543.7z" fill="#ffffff"/>
<path d="M636.93,543.7 638.13,543.7 638.13,575.5 636.93,575.5z" fill="#ffffff"/>
<path d="M636.93,575.5 638.13,575.5 638.13,602.2 636.93,602.2z" fill="#ffffff"/>
<path d="M636.93,602.2 638.13,602.2 638.13,629.7 636.93,629.7z" fill="#ffffff"/>
<path d="M636.53,629.7 638.53,629.7 638.53,647.1 636.53,647.1z" fill="url(#dw)"/>
<path d="M636.93,647.1 638.13,647.1 638.13,674.1 636.93,674.1z" fill="#ffffff"/>
<path d="M636.93,674.1 638.13,674.1 638.13,680.0 636.93,680.0z" fill="#ffffff"/>
<path d="M636.93,680.0 638.13,680.0 637.80,711.2 636.60,711.2z" fill="#ffffff"/>
<path d="M636.60,711.2 637.80,711.2 637.59,720.0 636.39,720.0z" fill="#ffffff"/>
<path d="M635.99,720.0 637.99,720.0 637.24,741.7 635.24,741.7z" fill="url(#db)"/>
<path d="M635.24,741.7 637.24,741.7 636.36,760.0 634.36,760.0z" fill="url(#db)"/>
<path d="M634.36,760.0 636.36,760.0 635.54,773.9 633.54,773.9z" fill="url(#db)"/>
<path d="M633.54,773.9 635.54,773.9 633.81,798.0 631.81,798.0z" fill="url(#db)"/>
<path d="M631.81,798.0 633.81,798.0 632.89,809.0 630.89,809.0z" fill="url(#db)"/>
<path d="M611.37,118.0 613.37,118.0 615.20,138.4 613.20,138.4z" fill="url(#dy)"/>
<path d="M613.20,138.4 615.20,138.4 616.78,155.9 614.78,155.9z" fill="url(#dw)"/>
<path d="M614.78,155.9 616.78,155.9 617.15,160.0 615.15,160.0z" fill="url(#dw)"/>
<path d="M615.15,160.0 617.15,160.0 620.36,195.7 618.36,195.7z" fill="url(#dw)"/>
<path d="M618.36,195.7 620.36,195.7 620.75,200.0 618.75,200.0z" fill="url(#dy)"/>
<path d="M618.75,200.0 620.75,200.0 622.32,217.4 620.32,217.4z" fill="#ffffff"/>
<path d="M620.32,217.4 622.32,217.4 624.35,240.0 622.35,240.0z" fill="url(#dy)"/>
<path d="M622.35,240.0 624.35,240.0 625.81,256.2 623.81,256.2z" fill="#ffffff"/>
<path d="M623.81,256.2 625.81,256.2 627.81,278.5 625.81,278.5z" fill="url(#dw)"/>
<path d="M625.81,278.5 627.81,278.5 627.95,280.0 625.95,280.0z" fill="#ffffff"/>
<path d="M625.95,280.0 627.95,280.0 630.37,306.9 628.37,306.9z" fill="#ffffff"/>
<path d="M628.37,306.9 630.37,306.9 632.18,327.1 630.18,327.1z" fill="#ffffff"/>
<path d="M630.18,327.1 632.18,327.1 632.45,330.0 630.45,330.0z" fill="#ffffff"/>
<path d="M630.45,330.0 632.45,330.0 635.02,358.5 633.02,358.5z" fill="#ffffff"/>
<path d="M633.02,358.5 635.02,358.5 636.95,380.0 634.95,380.0z" fill="#ffffff"/>
<path d="M634.95,380.0 636.95,380.0 637.09,381.6 635.09,381.6z" fill="#ffffff"/>
<path d="M635.09,381.6 637.09,381.6 638.59,398.2 636.59,398.2z" fill="#ffffff"/>
<path d="M636.59,398.2 638.59,398.2 640.11,417.7 638.11,417.7z" fill="#ffffff"/>
<path d="M638.11,417.7 640.11,417.7 640.25,420.0 638.25,420.0z" fill="#ffffff"/>
<path d="M638.25,420.0 640.25,420.0 641.26,444.1 639.26,444.1z" fill="#ffffff"/>
<path d="M639.26,444.1 641.26,444.1 641.45,460.0 639.45,460.0z" fill="#ffffff"/>
<path d="M639.45,460.0 641.45,460.0 641.45,461.9 639.45,461.9z" fill="#ffffff"/>
<path d="M639.45,461.9 641.45,461.9 641.45,480.0 639.45,480.0z" fill="#ffffff"/>
<path d="M639.45,480.0 641.45,480.0 641.45,504.8 639.45,504.8z" fill="#ffffff"/>
<path d="M639.45,504.8 641.45,504.8 641.45,535.5 639.45,535.5z" fill="#ffffff"/>
<path d="M639.45,535.5 641.45,535.5 641.45,557.1 639.45,557.1z" fill="#ffffff"/>
<path d="M639.45,557.1 641.45,557.1 641.45,588.2 639.45,588.2z" fill="#ffffff"/>
<path d="M639.45,588.2 641.45,588.2 641.45,620.3 639.45,620.3z" fill="#ffffff"/>
<path d="M639.45,620.3 641.45,620.3 641.45,653.9 639.45,653.9z" fill="url(#dw)"/>
<path d="M639.45,653.9 641.45,653.9 641.45,680.0 639.45,680.0z" fill="#ffffff"/>
<path d="M639.45,680.0 641.45,680.0 641.39,693.6 639.39,693.6z" fill="#ffffff"/>
<path d="M639.39,693.6 641.39,693.6 640.91,720.0 638.91,720.0z" fill="url(#db)"/>
<path d="M638.91,720.0 640.91,720.0 640.51,732.6 638.51,732.6z" fill="url(#db)"/>
<path d="M638.51,732.6 640.51,732.6 639.46,756.6 637.46,756.6z" fill="url(#db)"/>
<path d="M637.46,756.6 639.46,756.6 639.28,760.0 637.28,760.0z" fill="url(#db)"/>
<path d="M637.28,760.0 639.28,760.0 637.65,785.8 635.65,785.8z" fill="url(#db)"/>
<path d="M635.65,785.8 637.65,785.8 635.81,809.0 633.81,809.0z" fill="url(#dby)"/>
<path d="M614.37,118.0 616.37,118.0 619.70,155.0 617.70,155.0z" fill="url(#dw)"/>
<path d="M617.70,155.0 619.70,155.0 620.15,160.0 618.15,160.0z" fill="url(#dr)"/>
<path d="M618.15,160.0 620.15,160.0 623.26,194.6 621.26,194.6z" fill="url(#dw)"/>
<path d="M621.26,194.6 623.26,194.6 623.75,200.0 621.75,200.0z" fill="url(#dr)"/>
<path d="M622.15,200.0 623.35,200.0 625.53,224.2 624.33,224.2z" fill="#ffffff"/>
<path d="M623.93,224.2 625.93,224.2 627.35,240.0 625.35,240.0z" fill="url(#dy)"/>
<path d="M625.75,240.0 626.95,240.0 628.40,256.2 627.20,256.2z" fill="#ffffff"/>
<path d="M627.21,256.2 628.41,256.2 630.55,280.0 629.35,280.0z" fill="#ffffff"/>
<path d="M629.35,280.0 630.55,280.0 631.69,292.6 630.49,292.6z" fill="#ffffff"/>
<path d="M630.49,292.6 631.69,292.6 634.72,326.3 633.52,326.3z" fill="#ffffff"/>
<path d="M633.52,326.3 634.72,326.3 635.05,330.0 633.85,330.0z" fill="#ffffff"/>
<path d="M633.85,330.0 635.05,330.0 637.86,361.2 636.66,361.2z" fill="#ffffff"/>
<path d="M636.66,361.2 637.86,361.2 639.36,377.9 638.16,377.9z" fill="#ffffff"/>
<path d="M638.16,377.9 639.36,377.9 639.55,380.0 638.35,380.0z" fill="#ffffff"/>
<path d="M638.35,380.0 639.55,380.0 641.83,405.6 640.63,405.6z" fill="#ffffff"/>
<path d="M640.63,405.6 641.83,405.6 642.85,420.0 641.65,420.0z" fill="#ffffff"/>
<path d="M641.65,420.0 642.85,420.0 643.83,443.1 642.63,443.1z" fill="#ffffff"/>
<path d="M642.63,443.1 643.83,443.1 644.05,460.0 642.85,460.0z" fill="#ffffff"/>
<path d="M642.85,460.0 644.05,460.0 644.05,473.9 642.85,473.9z" fill="#ffffff"/>
<path d="M642.85,473.9 644.05,473.9 644.05,507.5 642.85,507.5z" fill="#ffffff"/>
<path d="M642.85,507.5 644.05,507.5 644.05,526.4 642.85,526.4z" fill="#ffffff"/>
<path d="M642.85,526.4 644.05,526.4 644.05,544.7 642.85,544.7z" fill="#ffffff"/>
<path d="M642.85,544.7 644.05,544.7 644.05,563.8 642.85,563.8z" fill="#ffffff"/>
<path d="M642.85,563.8 644.05,563.8 644.05,585.7 642.85,585.7z" fill="#ffffff"/>
<path d="M642.85,585.7 644.05,585.7 644.05,617.6 642.85,617.6z" fill="#ffffff"/>
<path d="M642.45,617.6 644.45,617.6 644.45,650.4 642.45,650.4z" fill="url(#dw)"/>
<path d="M642.45,650.4 644.45,650.4 644.45,669.4 642.45,669.4z" fill="url(#db)"/>
<path d="M642.45,669.4 644.45,669.4 644.45,680.0 642.45,680.0z" fill="url(#db)"/>
<path d="M642.45,680.0 644.45,680.0 644.19,707.7 642.19,707.7z" fill="url(#db)"/>
<path d="M642.59,707.7 643.79,707.7 643.51,720.0 642.31,720.0z" fill="#ffffff"/>
<path d="M641.91,720.0 643.91,720.0 643.16,741.7 641.16,741.7z" fill="url(#db)"/>
<path d="M641.16,741.7 643.16,741.7 642.28,760.0 640.28,760.0z" fill="url(#dby)"/>
<path d="M640.28,760.0 642.28,760.0 641.12,779.0 639.12,779.0z" fill="url(#db)"/>
<path d="M639.12,779.0 641.12,779.0 638.89,808.1 636.89,808.1z" fill="url(#db)"/>
<path d="M636.89,808.1 638.89,808.1 638.81,809.0 636.81,809.0z" fill="url(#db)"/>
<path d="M617.98,118.0 619.98,118.0 621.89,139.2 619.89,139.2z" fill="url(#dw)"/>
<path d="M619.89,139.2 621.89,139.2 623.76,160.0 621.76,160.0z" fill="url(#dw)"/>
<path d="M621.76,160.0 623.76,160.0 624.99,173.6 622.99,173.6z" fill="url(#dw)"/>
<path d="M622.99,173.6 624.99,173.6 627.27,198.9 625.27,198.9z" fill="url(#dw)"/>
<path d="M625.27,198.9 627.27,198.9 627.36,200.0 625.36,200.0z" fill="url(#dy)"/>
<path d="M625.36,200.0 627.36,200.0 630.46,234.4 628.46,234.4z" fill="url(#dw)"/>
<path d="M628.46,234.4 630.46,234.4 630.96,240.0 628.96,240.0z" fill="#ffffff"/>
<path d="M628.96,240.0 630.96,240.0 632.50,257.1 630.50,257.1z" fill="#ffffff"/>
<path d="M630.51,257.1 632.51,257.1 634.56,280.0 632.56,280.0z" fill="#ffffff"/>
<path d="M632.56,280.0 634.56,280.0 635.66,292.2 633.66,292.2z" fill="#ffffff"/>
<path d="M633.66,292.2 635.66,292.2 637.56,313.4 635.56,313.4z" fill="#ffffff"/>
<path d="M635.57,313.4 637.57,313.4 639.06,330.0 637.06,330.0z" fill="#ffffff"/>
<path d="M637.06,330.0 639.06,330.0 640.37,344.5 638.37,344.5z" fill="#ffffff"/>
<path d="M638.37,344.5 640.37,344.5 643.06,374.4 641.06,374.4z" fill="#ffffff"/>
<path d="M641.06,374.4 643.06,374.4 643.56,380.0 641.56,380.0z" fill="#ffffff"/>
<path d="M641.56,380.0 643.56,380.0 644.93,395.1 642.93,395.1z" fill="#ffffff"/>
<path d="M642.93,395.1 644.93,395.1 646.28,411.3 644.28,411.3z" fill="#ffffff"/>
<path d="M644.28,411.3 646.28,411.3 646.86,420.0 644.86,420.0z" fill="#ffffff"/>
<path d="M644.86,420.0 646.86,420.0 647.72,438.6 645.72,438.6z" fill="#ffffff"/>
<path d="M645.72,438.6 647.72,438.6 648.06,460.0 646.06,460.0z" fill="#ffffff"/>
<path d="M646.06,460.0 648.06,460.0 648.06,476.7 646.06,476.7z" fill="#ffffff"/>
<path d="M646.06,476.7 648.06,476.7 648.06,508.4 646.06,508.4z" fill="#ffffff"/>
<path d="M646.06,508.4 648.06,508.4 648.06,546.4 646.06,546.4z" fill="#ffffff"/>
<path d="M646.06,546.4 648.06,546.4 648.06,580.0 646.06,580.0z" fill="#ffffff"/>
<path d="M646.06,580.0 648.06,580.0 648.06,604.9 646.06,604.9z" fill="#ffffff"/>
<path d="M646.06,604.9 648.06,604.9 648.06,642.3 646.06,642.3z" fill="url(#dw)"/>
<path d="M646.06,642.3 648.06,642.3 648.06,674.5 646.06,674.5z" fill="url(#db)"/>
<path d="M646.06,674.5 648.06,674.5 648.06,680.0 646.06,680.0z" fill="url(#db)"/>
<path d="M646.06,680.0 648.06,680.0 647.89,702.5 645.89,702.5z" fill="#ffffff"/>
<path d="M645.89,702.5 647.89,702.5 647.52,720.0 645.52,720.0z" fill="#ffffff"/>
<path d="M645.52,720.0 647.52,720.0 647.08,733.7 645.08,733.7z" fill="#ffffff"/>
<path d="M645.08,733.7 647.08,733.7 646.20,754.2 644.20,754.2z" fill="url(#dby)"/>
<path d="M644.20,754.2 646.20,754.2 645.89,760.0 643.89,760.0z" fill="url(#dby)"/>
<path d="M643.89,760.0 645.89,760.0 644.45,783.3 642.45,783.3z" fill="#ffffff"/>
<path d="M642.44,783.3 644.44,783.3 642.42,809.0 640.42,809.0z" fill="url(#dby)"/>
<path d="M620.98,118.0 622.98,118.0 625.25,143.2 623.25,143.2z" fill="url(#dy)"/>
<path d="M623.25,143.2 625.25,143.2 626.76,160.0 624.76,160.0z" fill="url(#dw)"/>
<path d="M624.76,160.0 626.76,160.0 627.35,166.5 625.35,166.5z" fill="url(#dw)"/>
<path d="M625.35,166.5 627.35,166.5 630.36,200.0 628.36,200.0z" fill="url(#dw)"/>
<path d="M628.36,200.0 630.36,200.0 630.71,203.8 628.71,203.8z" fill="url(#dw)"/>
<path d="M629.11,203.8 630.31,203.8 632.46,227.8 631.26,227.8z" fill="#ffffff"/>
<path d="M631.27,227.8 632.47,227.8 633.56,240.0 632.36,240.0z" fill="#ffffff"/>
<path d="M632.36,240.0 633.56,240.0 635.83,265.2 634.63,265.2z" fill="#ffffff"/>
<path d="M634.63,265.2 635.83,265.2 637.16,280.0 635.96,280.0z" fill="#ffffff"/>
<path d="M635.96,280.0 637.16,280.0 639.42,305.1 638.22,305.1z" fill="#ffffff"/>
<path d="M638.22,305.1 639.42,305.1 641.40,327.1 640.20,327.1z" fill="#ffffff"/>
<path d="M640.20,327.1 641.40,327.1 641.66,330.0 640.46,330.0z" fill="#ffffff"/>
<path d="M640.46,330.0 641.66,330.0 643.17,346.7 641.97,346.7z" fill="#ffffff"/>
<path d="M641.97,346.7 643.17,346.7 645.04,367.5 643.84,367.5z" fill="#ffffff"/>
<path d="M643.84,367.5 645.04,367.5 646.16,380.0 644.96,380.0z" fill="#ffffff"/>
<path d="M644.96,380.0 646.16,380.0 647.59,395.9 646.39,395.9z" fill="#ffffff"/>
<path d="M646.40,395.9 647.60,395.9 649.15,415.1 647.95,415.1z" fill="#ffffff"/>
<path d="M647.95,415.1 649.15,415.1 649.46,420.0 648.26,420.0z" fill="#ffffff"/>
<path d="M648.26,420.0 649.46,420.0 650.20,435.1 649.00,435.1z" fill="#ffffff"/>
<path d="M649.00,435.1 650.20,435.1 650.66,460.0 649.46,460.0z" fill="#ffffff"/>
<path d="M649.46,460.4 650.66,460.4 650.66,478.2 649.46,478.2z" fill="#ffffff"/>
<path d="M649.46,478.2 650.66,478.2 650.66,497.0 649.46,497.0z" fill="#ffffff"/>
<path d="M649.46,497.0 650.66,497.0 650.66,514.6 649.46,514.6z" fill="#ffffff"/>
<path d="M649.46,514.6 650.66,514.6 650.66,540.4 649.46,540.4z" fill="#ffffff"/>
<path d="M649.46,540.4 650.66,540.4 650.66,571.1 649.46,571.1z" fill="#ffffff"/>
<path d="M649.46,571.1 650.66,571.1 650.66,595.6 649.46,595.6z" fill="#ffffff"/>
<path d="M649.06,595.6 651.06,595.6 651.06,625.1 649.06,625.1z" fill="url(#dy)"/>
<path d="M649.46,625.1 650.66,625.1 650.66,653.8 649.46,653.8z" fill="#ffffff"/>
<path d="M649.06,653.8 651.06,653.8 651.06,680.0 649.06,680.0z" fill="url(#dby)"/>
<path d="M649.46,680.0 650.66,680.0 650.64,687.7 649.44,687.7z" fill="#ffffff"/>
<path d="M649.04,687.7 651.04,687.7 650.84,705.8 648.84,705.8z" fill="url(#dby)"/>
<path d="M648.84,705.8 650.84,705.8 650.52,720.0 648.52,720.0z" fill="url(#db)"/>
<path d="M648.52,720.0 650.52,720.0 650.29,727.8 648.29,727.8z" fill="url(#db)"/>
<path d="M648.29,727.8 650.29,727.8 648.89,760.0 646.89,760.0z" fill="url(#dby)"/>
<path d="M647.29,760.0 648.49,760.0 648.40,761.7 647.20,761.7z" fill="#ffffff"/>
<path d="M646.80,761.7 648.80,761.7 647.56,781.7 645.56,781.7z" fill="url(#dw)"/>
<path d="M645.56,781.7 647.56,781.7 645.42,809.0 643.42,809.0z" fill="url(#dby)"/>
<path d="M624.05,118.0 626.05,118.0 629.07,151.6 627.07,151.6z" fill="url(#dw)"/>
<path d="M627.07,151.6 629.07,151.6 629.83,160.0 627.83,160.0z" fill="url(#dw)"/>
<path d="M627.83,160.0 629.83,160.0 630.51,167.6 628.51,167.6z" fill="url(#dw)"/>
<path d="M628.51,167.6 630.51,167.6 632.78,192.8 630.78,192.8z" fill="url(#dw)"/>
<path d="M630.78,192.8 632.78,192.8 633.43,200.0 631.43,200.0z" fill="url(#dw)"/>
<path d="M631.43,200.0 633.43,200.0 634.63,213.4 632.63,213.4z" fill="#ffffff"/>
<path d="M632.63,213.4 634.63,213.4 636.07,229.4 634.07,229.4z" fill="url(#dr)"/>
<path d="M634.07,229.4 636.07,229.4 637.03,240.0 635.03,240.0z" fill="#ffffff"/>
<path d="M635.03,240.0 637.03,240.0 639.08,262.8 637.08,262.8z" fill="#ffffff"/>
<path d="M637.08,262.8 639.08,262.8 640.63,280.0 638.63,280.0z" fill="#ffffff"/>
<path d="M638.63,280.0 640.63,280.0 641.78,292.8 639.78,292.8z" fill="#ffffff"/>
<path d="M639.78,292.8 641.78,292.8 644.97,328.3 642.97,328.3z" fill="#ffffff"/>
<path d="M642.97,328.3 644.97,328.3 645.13,330.0 643.13,330.0z" fill="#ffffff"/>
<path d="M643.13,330.0 645.13,330.0 646.85,349.1 644.85,349.1z" fill="#ffffff"/>
<path d="M644.85,349.1 646.85,349.1 648.95,372.5 646.95,372.5z" fill="#ffffff"/>
<path d="M646.95,372.5 648.95,372.5 649.63,380.0 647.63,380.0z" fill="#ffffff"/>
<path d="M647.63,380.0 649.63,380.0 651.83,404.6 649.83,404.6z" fill="#ffffff"/>
<path d="M649.83,404.6 651.83,404.6 652.93,420.0 650.93,420.0z" fill="#ffffff"/>
<path d="M650.93,420.0 652.93,420.0 653.63,434.2 651.63,434.2z" fill="#ffffff"/>
<path d="M651.63,434.2 653.63,434.2 654.13,460.0 652.13,460.0z" fill="#ffffff"/>
<path d="M652.13,460.0 654.13,460.0 654.13,470.5 652.13,470.5z" fill="#ffffff"/>
<path d="M652.13,470.5 654.13,470.5 654.13,496.4 652.13,496.4z" fill="#ffffff"/>
<path d="M652.13,496.4 654.13,496.4 654.13,530.0 652.13,530.0z" fill="#ffffff"/>
<path d="M652.13,530.0 654.13,530.0 654.13,547.2 652.13,547.2z" fill="#ffffff"/>
<path d="M652.13,547.2 654.13,547.2 654.13,572.0 652.13,572.0z" fill="#ffffff"/>
<path d="M652.13,572.0 654.13,572.0 654.13,599.9 652.13,599.9z" fill="#ffffff"/>
<path d="M652.13,599.9 654.13,599.9 654.13,621.4 652.13,621.4z" fill="#ffffff"/>
<path d="M652.13,621.4 654.13,621.4 654.13,659.8 652.13,659.8z" fill="#ffffff"/>
<path d="M652.13,659.8 654.13,659.8 654.13,680.0 652.13,680.0z" fill="url(#db)"/>
<path d="M652.13,680.0 654.13,680.0 654.07,692.7 652.07,692.7z" fill="#ffffff"/>
<path d="M652.07,692.7 654.07,692.7 653.59,720.0 651.59,720.0z" fill="url(#df)"/>
<path d="M651.59,720.0 653.59,720.0 653.19,732.5 651.19,732.5z" fill="url(#df)"/>
<path d="M651.19,732.5 653.19,732.5 651.96,760.0 649.96,760.0z" fill="url(#df)"/>
<path d="M649.96,760.0 651.96,760.0 651.37,770.3 649.37,770.3z" fill="url(#df)"/>
<path d="M649.36,770.3 651.36,770.3 649.91,791.5 647.91,791.5z" fill="url(#df)"/>
<path d="M647.91,791.5 649.91,791.5 648.49,809.0 646.49,809.0z" fill="url(#df)"/>
<path d="M627.05,118.0 629.05,118.0 630.98,139.5 628.98,139.5z" fill="url(#dw)"/>
<path d="M628.98,139.5 630.98,139.5 632.65,158.0 630.65,158.0z" fill="url(#dw)"/>
<path d="M630.65,158.0 632.65,158.0 632.83,160.0 630.83,160.0z" fill="url(#dw)"/>
<path d="M630.83,160.0 632.83,160.0 634.26,175.9 632.26,175.9z" fill="url(#dy)"/>
<path d="M632.26,175.9 634.26,175.9 635.80,193.1 633.80,193.1z" fill="url(#dw)"/>
<path d="M633.80,193.1 635.80,193.1 636.43,200.0 634.43,200.0z" fill="url(#dw)"/>
<path d="M634.43,200.0 636.43,200.0 637.39,210.7 635.39,210.7z" fill="url(#dw)"/>
<path d="M635.79,210.7 636.99,210.7 639.39,237.4 638.19,237.4z" fill="#ffffff"/>
<path d="M638.19,237.4 639.39,237.4 639.63,240.0 638.43,240.0z" fill="#ffffff"/>
<path d="M638.43,240.0 639.63,240.0 642.15,268.1 640.95,268.1z" fill="#ffffff"/>
<path d="M640.95,268.1 642.15,268.1 643.23,280.0 642.03,280.0z" fill="#ffffff"/>
<path d="M642.03,280.0 643.23,280.0 644.72,296.5 643.52,296.5z" fill="#ffffff"/>
<path d="M643.52,296.5 644.72,296.5 647.49,327.4 646.29,327.4z" fill="#ffffff"/>
<path d="M646.29,327.4 647.49,327.4 647.73,330.0 646.53,330.0z" fill="#ffffff"/>
<path d="M646.53,330.0 647.73,330.0 649.22,346.6 648.02,346.6z" fill="#ffffff"/>
<path d="M648.03,346.6 649.23,346.6 652.23,380.0 651.03,380.0z" fill="#ffffff"/>
<path d="M651.03,380.0 652.23,380.0 652.63,384.5 651.43,384.5z" fill="#ffffff"/>
<path d="M651.44,384.5 652.64,384.5 655.53,420.0 654.33,420.0z" fill="#ffffff"/>
<path d="M654.33,420.0 655.53,420.0 655.58,420.8 654.38,420.8z" fill="#ffffff"/>
<path d="M654.38,420.8 655.58,420.8 656.73,458.0 655.53,458.0z" fill="#ffffff"/>
<path d="M655.53,458.0 656.73,458.0 656.73,460.0 655.53,460.0z" fill="#ffffff"/>
<path d="M655.53,460.0 656.73,460.0 656.73,488.5 655.53,488.5z" fill="#ffffff"/>
<path d="M655.53,488.5 656.73,488.5 656.73,514.6 655.53,514.6z" fill="#ffffff"/>
<path d="M655.53,514.6 656.73,514.6 656.73,547.1 655.53,547.1z" fill="#ffffff"/>
<path d="M655.53,547.1 656.73,547.1 656.73,583.5 655.53,583.5z" fill="#ffffff"/>
<path d="M655.53,583.5 656.73,583.5 656.73,601.0 655.53,601.0z" fill="#ffffff"/>
<path d="M655.13,601.0 657.13,601.0 657.13,618.3 655.13,618.3z" fill="url(#df)"/>
<path d="M655.13,618.3 657.13,618.3 657.13,636.9 655.13,636.9z" fill="url(#df)"/>
<path d="M655.13,636.9 657.13,636.9 657.13,655.0 655.13,655.0z" fill="url(#df)"/>
<path d="M655.13,655.0 657.13,655.0 657.13,680.0 655.13,680.0z" fill="url(#df)"/>
<path d="M655.13,680.0 657.13,680.0 657.11,687.6 655.11,687.6z" fill="url(#df)"/>
<path d="M655.11,687.6 657.11,687.6 656.94,703.6 654.94,703.6z" fill="url(#df)"/>
<path d="M654.94,703.6 656.94,703.6 656.59,720.0 654.59,720.0z" fill="url(#df)"/>
<path d="M654.59,720.0 656.59,720.0 655.96,738.6 653.96,738.6z" fill="url(#df)"/>
<path d="M653.96,738.6 655.96,738.6 654.96,760.0 652.96,760.0z" fill="url(#df)"/>
<path d="M652.96,760.0 654.96,760.0 654.43,769.2 652.43,769.2z" fill="url(#df)"/>
<path d="M652.43,769.2 654.43,769.2 652.30,799.4 650.30,799.4z" fill="url(#df)"/>
<path d="M650.30,799.4 652.30,799.4 651.49,809.0 649.49,809.0z" fill="url(#df)"/>
<path d="M629.67,118.0 631.67,118.0 633.41,137.3 631.41,137.3z" fill="url(#dw)"/>
<path d="M631.41,137.3 633.41,137.3 635.45,160.0 633.45,160.0z" fill="url(#dw)"/>
<path d="M633.45,160.0 635.45,160.0 636.95,176.7 634.95,176.7z" fill="url(#dw)"/>
<path d="M634.96,176.7 636.96,176.7 638.51,194.0 636.51,194.0z" fill="url(#dw)"/>
<path d="M636.52,194.0 638.52,194.0 639.05,200.0 637.05,200.0z" fill="url(#dr)"/>
<path d="M637.05,200.0 639.05,200.0 641.53,227.6 639.53,227.6z" fill="#ffffff"/>
<path d="M639.53,227.6 641.53,227.6 642.65,240.0 640.65,240.0z" fill="#ffffff"/>
<path d="M640.65,240.0 642.65,240.0 645.00,266.1 643.00,266.1z" fill="#ffffff"/>
<path d="M643.00,266.1 645.00,266.1 646.25,280.0 644.25,280.0z" fill="#ffffff"/>
<path d="M644.25,280.0 646.25,280.0 647.51,294.0 645.51,294.0z" fill="#ffffff"/>
<path d="M645.52,294.0 647.52,294.0 650.05,322.2 648.05,322.2z" fill="#ffffff"/>
<path d="M648.05,322.2 650.05,322.2 650.75,330.0 648.75,330.0z" fill="#ffffff"/>
<path d="M648.75,330.0 650.75,330.0 652.37,347.9 650.37,347.9z" fill="#ffffff"/>
<path d="M650.37,347.9 652.37,347.9 654.68,373.6 652.68,373.6z" fill="#ffffff"/>
<path d="M652.68,373.6 654.68,373.6 655.25,380.0 653.25,380.0z" fill="#ffffff"/>
<path d="M653.25,380.0 655.25,380.0 657.96,411.1 655.96,411.1z" fill="#ffffff"/>
<path d="M655.96,411.1 657.96,411.1 658.55,420.0 656.55,420.0z" fill="url(#df)"/>
<path d="M656.55,420.0 658.55,420.0 659.69,451.0 657.69,451.0z" fill="url(#df)"/>
<path d="M657.69,451.0 659.69,451.0 659.75,460.0 657.75,460.0z" fill="url(#df)"/>
<path d="M657.75,460.0 659.75,460.0 659.75,476.6 657.75,476.6z" fill="url(#df)"/>
<path d="M657.75,476.6 659.75,476.6 659.75,516.1 657.75,516.1z" fill="url(#df)"/>
<path d="M657.75,516.1 659.75,516.1 659.75,536.1 657.75,536.1z" fill="url(#df)"/>
<path d="M657.75,536.1 659.75,536.1 659.75,571.0 657.75,571.0z" fill="url(#df)"/>
<path d="M657.75,571.0 659.75,571.0 659.75,588.5 657.75,588.5z" fill="url(#df)"/>
<path d="M657.75,588.5 659.75,588.5 659.75,626.3 657.75,626.3z" fill="url(#df)"/>
<path d="M657.75,626.3 659.75,626.3 659.75,649.1 657.75,649.1z" fill="url(#df)"/>
<path d="M657.75,649.1 659.75,649.1 659.75,666.4 657.75,666.4z" fill="url(#df)"/>
<path d="M657.75,666.4 659.75,666.4 659.75,680.0 657.75,680.0z" fill="url(#df)"/>
<path d="M657.75,680.0 659.75,680.0 659.65,697.0 657.65,697.0z" fill="url(#df)"/>
<path d="M632.67,118.0 634.67,118.0 637.42,148.5 635.42,148.5z" fill="url(#dr)"/>
<path d="M635.42,148.5 637.42,148.5 638.45,160.0 636.45,160.0z" fill="url(#dw)"/>
<path d="M636.45,160.0 638.45,160.0 640.62,184.1 638.62,184.1z" fill="url(#dw)"/>
<path d="M638.62,184.1 640.62,184.1 642.05,200.0 640.05,200.0z" fill="url(#dr)"/>
<path d="M640.05,200.0 642.05,200.0 642.88,209.2 640.88,209.2z" fill="url(#dw)"/>
<path d="M641.28,209.2 642.48,209.2 645.25,240.0 644.05,240.0z" fill="#ffffff"/>
<path d="M644.05,240.0 645.25,240.0 645.50,242.7 644.30,242.7z" fill="#ffffff"/>
<path d="M644.30,242.7 645.50,242.7 648.85,280.0 647.65,280.0z" fill="#ffffff"/>
<path d="M647.66,280.1 648.86,280.1 651.10,305.0 649.90,305.0z" fill="#ffffff"/>
<path d="M649.90,305.0 651.10,305.0 652.79,323.8 651.59,323.8z" fill="#ffffff"/>
<path d="M651.60,323.8 652.80,323.8 653.35,330.0 652.15,330.0z" fill="#ffffff"/>
<path d="M652.15,330.0 653.35,330.0 654.83,346.4 653.63,346.4z" fill="#ffffff"/>
<path d="M653.63,346.4 654.83,346.4 657.59,377.1 656.39,377.1z" fill="#ffffff"/>
<path d="M656.00,377.1 658.00,377.1 658.25,380.0 656.25,380.0z" fill="url(#df)"/>
<path d="M656.25,380.0 658.25,380.0 661.12,413.3 659.12,413.3z" fill="url(#df)"/>
<path d="M659.12,413.3 661.12,413.3 661.55,420.0 659.55,420.0z" fill="url(#df)"/>
<path d="M659.55,420.0 661.55,420.0 662.25,434.1 660.25,434.1z" fill="url(#df)"/>
<path d="M660.25,434.1 662.25,434.1 662.75,460.0 660.75,460.0z" fill="url(#df)"/>
<path d="M660.75,460.0 662.75,460.0 662.75,473.4 660.75,473.4z" fill="url(#df)"/>
<path d="M660.75,473.4 662.75,473.4 662.75,489.8 660.75,489.8z" fill="url(#df)"/>
<path d="M660.75,489.8 662.75,489.8 662.75,526.9 660.75,526.9z" fill="url(#df)"/>
<path d="M660.75,526.9 662.75,526.9 662.75,556.8 660.75,556.8z" fill="url(#df)"/>
<path d="M660.75,556.8 662.75,556.8 662.75,596.7 660.75,596.7z" fill="url(#df)"/>
<path d="M635.74,118.0 637.74,118.0 640.54,149.2 638.54,149.2z" fill="url(#dr)"/>
<path d="M638.54,149.2 640.54,149.2 641.52,160.0 639.52,160.0z" fill="url(#dw)"/>
<path d="M639.52,160.0 641.52,160.0 642.33,169.1 640.33,169.1z" fill="url(#dw)"/>
<path d="M640.33,169.1 642.33,169.1 645.04,199.1 643.04,199.1z" fill="url(#dy)"/>
<path d="M643.04,199.1 645.04,199.1 645.12,200.0 643.12,200.0z" fill="#ffffff"/>
<path d="M643.12,200.0 645.12,200.0 646.98,220.8 644.98,220.8z" fill="#ffffff"/>
<path d="M644.99,220.8 646.99,220.8 648.72,240.0 646.72,240.0z" fill="#ffffff"/>
<path d="M646.72,240.0 648.72,240.0 649.00,243.1 647.00,243.1z" fill="#ffffff"/>
<path d="M647.00,243.1 649.00,243.1 652.32,280.0 650.32,280.0z" fill="#ffffff"/>
<path d="M650.32,280.0 652.32,280.0 652.60,283.1 650.60,283.1z" fill="#ffffff"/>
<path d="M650.60,283.1 652.60,283.1 654.06,299.3 652.06,299.3z" fill="#ffffff"/>
<path d="M652.06,299.3 654.06,299.3 656.82,330.0 654.82,330.0z" fill="#ffffff"/>
<path d="M654.82,330.0 656.82,330.0 657.06,332.7 655.06,332.7z" fill="url(#df)"/>
<path d="M655.06,332.7 657.06,332.7 659.18,356.2 657.18,356.2z" fill="url(#df)"/>
<path d="M657.18,356.2 659.18,356.2 661.32,380.0 659.32,380.0z" fill="url(#df)"/>
<path d="M659.32,380.0 661.32,380.0 662.22,390.0 660.22,390.0z" fill="url(#df)"/>
<path d="M638.74,118.0 640.74,118.0 644.02,154.5 642.02,154.5z" fill="url(#dw)"/>
<path d="M642.02,154.5 644.02,154.5 644.52,160.0 642.52,160.0z" fill="url(#dw)"/>
<path d="M642.52,160.0 644.52,160.0 645.82,174.5 643.82,174.5z" fill="url(#dr)"/>
<path d="M643.82,174.5 645.82,174.5 647.66,194.9 645.66,194.9z" fill="url(#dw)"/>
<path d="M645.66,194.9 647.66,194.9 648.12,200.0 646.12,200.0z" fill="url(#dw)"/>
<path d="M646.12,200.0 648.12,200.0 650.45,225.9 648.45,225.9z" fill="url(#dr)"/>
<path d="M648.85,225.9 650.05,225.9 651.32,240.0 650.12,240.0z" fill="#ffffff"/>
<path d="M650.12,240.0 651.32,240.0 653.54,264.7 652.34,264.7z" fill="#ffffff"/>
<path d="M651.94,264.7 653.94,264.7 655.32,280.0 653.32,280.0z" fill="url(#df)"/>
<path d="M653.32,280.0 655.32,280.0 655.74,284.7 653.74,284.7z" fill="url(#df)"/>
<path d="M653.74,284.7 655.74,284.7 658.60,316.5 656.60,316.5z" fill="url(#df)"/>
<path d="M656.61,316.5 658.61,316.5 659.82,330.0 657.82,330.0z" fill="url(#df)"/>
<path d="M657.82,330.0 659.82,330.0 661.70,350.9 659.70,350.9z" fill="url(#df)"/>
<path d="M640.50,118.0 642.50,118.0 645.98,156.7 643.98,156.7z" fill="url(#dw)"/>
<path d="M643.98,156.7 645.98,156.7 646.28,160.0 644.28,160.0z" fill="url(#dw)"/>
<path d="M644.28,160.0 646.28,160.0 648.13,180.6 646.13,180.6z" fill="url(#dw)"/>
<path d="M646.13,180.6 648.13,180.6 649.88,200.0 647.88,200.0z" fill="url(#dw)"/>
<path d="M647.88,200.0 649.88,200.0 651.19,214.6 649.19,214.6z" fill="url(#dw)"/>
<path d="M649.19,214.6 651.19,214.6 653.48,240.0 651.48,240.0z" fill="url(#df)"/>
<path d="M651.48,240.0 653.48,240.0 654.14,247.4 652.14,247.4z" fill="url(#df)"/>
<path d="M652.14,247.4 654.14,247.4 657.08,280.0 655.08,280.0z" fill="url(#df)"/>
<path d="M655.08,280.0 657.08,280.0 657.34,282.9 655.34,282.9z" fill="url(#df)"/>
<path d="M655.34,282.9 657.34,282.9 659.93,311.7 657.93,311.7z" fill="url(#df)"/>
<path d="M657.93,311.7 659.93,311.7 661.58,330.0 659.58,330.0z" fill="url(#df)"/>
<path d="M643.50,118.0 645.50,118.0 648.06,146.5 646.06,146.5z" fill="url(#df)"/>
<path d="M646.06,146.5 648.06,146.5 649.28,160.0 647.28,160.0z" fill="url(#df)"/>
<path d="M647.28,160.0 649.28,160.0 650.96,178.7 648.96,178.7z" fill="url(#df)"/>
<path d="M648.96,178.7 650.96,178.7 652.67,197.8 650.67,197.8z" fill="url(#df)"/>
<path d="M650.68,197.8 652.68,197.8 652.88,200.0 650.88,200.0z" fill="url(#df)"/>
<path d="M650.88,200.0 652.88,200.0 654.97,223.3 652.97,223.3z" fill="url(#df)"/>
<path d="M652.98,223.3 654.98,223.3 656.48,240.0 654.48,240.0z" fill="url(#df)"/>
<path d="M654.48,240.0 656.48,240.0 657.04,246.3 655.04,246.3z" fill="url(#df)"/>
<path d="M655.05,246.3 657.05,246.3 658.86,266.5 656.86,266.5z" fill="url(#df)"/>
<path d="M646.70,118.0 648.70,118.0 652.17,156.6 650.17,156.6z" fill="url(#df)"/>
<path d="M650.18,156.6 652.18,156.6 652.48,160.0 650.48,160.0z" fill="url(#df)"/>
<path d="M650.48,160.0 652.48,160.0 653.89,175.7 651.89,175.7z" fill="url(#df)"/>
<rect x="305" y="459" width="358" height="4" fill="#e60000"/>
</g>
</g>
<rect x="305.0" y="113.0" width="371.0" height="696.0" fill="none" stroke="#000" stroke-width="1.6"/>
<line x1="305.00" y1="809.0" x2="305.00" y2="816.0" stroke="#000" stroke-width="1.6"/>
<text x="301.91" y="831.80" font-size="10.21" textLength="6.18" lengthAdjust="spacingAndGlyphs" fill="#000">0</text>
<line x1="380.00" y1="809.0" x2="380.00" y2="816.0" stroke="#000" stroke-width="1.6"/>
<text x="370.72" y="831.80" font-size="10.21" textLength="18.55" lengthAdjust="spacingAndGlyphs" fill="#000">500</text>
<line x1="455.00" y1="809.0" x2="455.00" y2="816.0" stroke="#000" stroke-width="1.6"/>
<text x="442.63" y="831.80" font-size="10.21" textLength="24.74" lengthAdjust="spacingAndGlyphs" fill="#000">1000</text>
<line x1="530.00" y1="809.0" x2="530.00" y2="816.0" stroke="#000" stroke-width="1.6"/>
<text x="517.63" y="831.80" font-size="10.21" textLength="24.74" lengthAdjust="spacingAndGlyphs" fill="#000">1500</text>
<line x1="605.00" y1="809.0" x2="605.00" y2="816.0" stroke="#000" stroke-width="1.6"/>
<text x="592.63" y="831.80" font-size="10.21" textLength="24.74" lengthAdjust="spacingAndGlyphs" fill="#000">2000</text>
<line x1="298.0" y1="809.00" x2="305.0" y2="809.00" stroke="#000" stroke-width="1.6"/>
<text x="284.12" y="812.90" font-size="10.21" textLength="6.18" lengthAdjust="spacingAndGlyphs" fill="#000">0</text>
<line x1="298.0" y1="659.25" x2="305.0" y2="659.25" stroke="#000" stroke-width="1.6"/>
<text x="265.56" y="663.15" font-size="10.21" textLength="24.74" lengthAdjust="spacingAndGlyphs" fill="#000">1000</text>
<line x1="298.0" y1="509.50" x2="305.0" y2="509.50" stroke="#000" stroke-width="1.6"/>
<text x="265.56" y="513.40" font-size="10.21" textLength="24.74" lengthAdjust="spacingAndGlyphs" fill="#000">2000</text>
<line x1="298.0" y1="359.75" x2="305.0" y2="359.75" stroke="#000" stroke-width="1.6"/>
<text x="265.56" y="363.65" font-size="10.21" textLength="24.74" lengthAdjust="spacingAndGlyphs" fill="#000">3000</text>
<line x1="298.0" y1="210.00" x2="305.0" y2="210.00" stroke="#000" stroke-width="1.6"/>
<text x="265.56" y="213.90" font-size="10.21" textLength="24.74" lengthAdjust="spacingAndGlyphs" fill="#000">4000</text>
<text x="486.93" y="849.70" font-size="10.94" textLength="7.14" lengthAdjust="spacingAndGlyphs" fill="#000">X</text>
<g transform="translate(252.90,461.00) rotate(-90)"><text x="-3.18" y="0" font-size="10.94" textLength="6.36" lengthAdjust="spacingAndGlyphs" fill="#000">Y</text></g>
<defs><linearGradient id="hot" x1="0" y1="1" x2="0" y2="0"><stop offset="0" stop-color="#0b0000"/><stop offset="0.365079" stop-color="#ff0000"/><stop offset="0.746032" stop-color="#ffff00"/><stop offset="1" stop-color="#ffffff"/></linearGradient></defs>
<rect x="712.0" y="113.0" width="35.0" height="696.0" fill="url(#hot)" stroke="#000" stroke-width="1.6"/>
<line x1="747.0" y1="809.00" x2="754.0" y2="809.00" stroke="#000" stroke-width="1.6"/>
<text x="762.00" y="812.90" font-size="10.21" textLength="6.18" lengthAdjust="spacingAndGlyphs" fill="#000">0</text>
<line x1="747.0" y1="693.00" x2="754.0" y2="693.00" stroke="#000" stroke-width="1.6"/>
<text x="762.00" y="696.90" font-size="10.21" textLength="18.55" lengthAdjust="spacingAndGlyphs" fill="#000">500</text>
<line x1="747.0" y1="577.00" x2="754.0" y2="577.00" stroke="#000" stroke-width="1.6"/>
<text x="762.00" y="580.90" font-size="10.21" textLength="24.74" lengthAdjust="spacingAndGlyphs" fill="#000">1000</text>
<line x1="747.0" y1="461.00" x2="754.0" y2="461.00" stroke="#000" stroke-width="1.6"/>
<text x="762.00" y="464.90" font-size="10.21" textLength="24.74" lengthAdjust="spacingAndGlyphs" fill="#000">1500</text>
<line x1="747.0" y1="345.00" x2="754.0" y2="345.00" stroke="#000" stroke-width="1.6"/>
<text x="762.00" y="348.90" font-size="10.21" textLength="24.74" lengthAdjust="spacingAndGlyphs" fill="#000">2000</text>
<line x1="747.0" y1="229.00" x2="754.0" y2="229.00" stroke="#000" stroke-width="1.6"/>
<text x="762.00" y="232.90" font-size="10.21" textLength="24.74" lengthAdjust="spacingAndGlyphs" fill="#000">2500</text>
<line x1="747.0" y1="113.00" x2="754.0" y2="113.00" stroke="#000" stroke-width="1.6"/>
<text x="762.00" y="116.90" font-size="10.21" textLength="24.74" lengthAdjust="spacingAndGlyphs" fill="#000">3000</text>
<path d="M911.00,233.00 L997.20,233.00 L997.20,119.30 L1008.90,119.30 L1008.90,127.80 L1013.90,127.80 L1013.90,134.70 L1020.00,134.70 L1020.00,140.90 L1024.80,140.90 L1024.80,143.80 L1031.10,143.80 L1031.10,146.00 L1037.30,146.00 L1037.30,146.90 L1070.10,146.90 L1070.10,148.10 L1086.70,148.10 L1086.70,149.00 L1108.90,149.00 L1108.90,149.80 L1132.00,149.80 L1132.00,150.80 L1171.00,150.80 L1171.00,151.70 L1182.00,151.70 L1182.00,119.00 L1185.00,119.00" fill="none" stroke="#0000ff" stroke-width="1.5" stroke-linejoin="miter"/>
<rect x="911.0" y="113.0" width="274.0" height="120.0" fill="none" stroke="#000" stroke-width="1.6"/>
<line x1="911.00" y1="233.0" x2="911.00" y2="240.0" stroke="#000" stroke-width="1.6"/>
<text x="907.91" y="255.90" font-size="10.21" textLength="6.18" lengthAdjust="spacingAndGlyphs" fill="#000">0</text>
<line x1="957.50" y1="233.0" x2="957.50" y2="240.0" stroke="#000" stroke-width="1.6"/>
<line x1="1004.00" y1="233.0" x2="1004.00" y2="240.0" stroke="#000" stroke-width="1.6"/>
<text x="991.63" y="255.90" font-size="10.21" textLength="24.74" lengthAdjust="spacingAndGlyphs" fill="#000">1000</text>
<line x1="1050.50" y1="233.0" x2="1050.50" y2="240.0" stroke="#000" stroke-width="1.6"/>
<line x1="1097.00" y1="233.0" x2="1097.00" y2="240.0" stroke="#000" stroke-width="1.6"/>
<text x="1084.63" y="255.90" font-size="10.21" textLength="24.74" lengthAdjust="spacingAndGlyphs" fill="#000">2000</text>
<line x1="1143.50" y1="233.0" x2="1143.50" y2="240.0" stroke="#000" stroke-width="1.6"/>
<line x1="904.0" y1="233.00" x2="911.0" y2="233.00" stroke="#000" stroke-width="1.6"/>
<text x="890.42" y="236.90" font-size="10.21" textLength="6.18" lengthAdjust="spacingAndGlyphs" fill="#000">0</text>
<line x1="904.0" y1="197.80" x2="911.0" y2="197.80" stroke="#000" stroke-width="1.6"/>
<text x="890.42" y="201.70" font-size="10.21" textLength="6.18" lengthAdjust="spacingAndGlyphs" fill="#000">2</text>
<line x1="904.0" y1="162.60" x2="911.0" y2="162.60" stroke="#000" stroke-width="1.6"/>
<text x="890.42" y="166.50" font-size="10.21" textLength="6.18" lengthAdjust="spacingAndGlyphs" fill="#000">4</text>
<line x1="904.0" y1="127.40" x2="911.0" y2="127.40" stroke="#000" stroke-width="1.6"/>
<text x="890.42" y="131.30" font-size="10.21" textLength="6.18" lengthAdjust="spacingAndGlyphs" fill="#000">6</text>
<text x="1030.59" y="273.70" font-size="10.94" textLength="34.83" lengthAdjust="spacingAndGlyphs" fill="#000">counts</text>
<g transform="translate(877.90,173.00) rotate(-90)"><text x="-35.73" y="0" font-size="10.94" textLength="71.46" lengthAdjust="spacingAndGlyphs" fill="#000">log frequency</text></g>
<g transform="translate(1193.60,174.80) rotate(90)"><text x="-46.78" y="0" font-size="10.94" textLength="93.55" lengthAdjust="spacingAndGlyphs" fill="#000">histogram (detail)</text></g>
<path d="M911.00,405.00 L924.90,405.00 L924.90,305.75 L929.80,305.75 L929.80,290.95 L935.70,290.95 L935.70,305.75 L941.00,305.75 L941.00,310.90 L947.20,310.90 L947.20,313.30 L952.80,313.30 L952.80,316.20 L958.30,316.20 L958.30,317.30 L963.60,317.30 L963.60,318.60 L969.20,318.60 L969.20,320.20 L974.85,320.20 L974.85,321.40 L980.80,321.40 L980.80,322.30 L986.40,322.30 L986.40,323.10 L996.60,323.10 L996.60,323.90 L1002.20,323.90 L1002.20,324.70 L1007.80,324.70 L1007.80,325.55 L1013.50,325.55 L1013.50,326.70 L1019.90,326.70 L1019.90,328.60 L1025.20,328.60 L1025.20,332.80 L1030.70,332.80 L1030.70,339.10 L1036.80,339.10 L1036.80,344.10 L1042.00,344.10 L1042.00,350.80 L1047.80,350.80 L1047.80,367.20 L1052.90,367.20 L1052.90,405.00 L1185.00,405.00" fill="none" stroke="#0000ff" stroke-width="1.5" stroke-linejoin="miter"/>
<rect x="911.0" y="285.0" width="274.0" height="120.0" fill="none" stroke="#000" stroke-width="1.6"/>
<line x1="929.00" y1="405.0" x2="929.00" y2="412.0" stroke="#000" stroke-width="1.6"/>
<text x="925.91" y="428.00" font-size="10.21" textLength="6.18" lengthAdjust="spacingAndGlyphs" fill="#000">0</text>
<line x1="966.28" y1="405.0" x2="966.28" y2="412.0" stroke="#000" stroke-width="1.6"/>
<line x1="1003.56" y1="405.0" x2="1003.56" y2="412.0" stroke="#000" stroke-width="1.6"/>
<text x="988.10" y="428.00" font-size="10.21" textLength="30.92" lengthAdjust="spacingAndGlyphs" fill="#000">20000</text>
<line x1="1040.84" y1="405.0" x2="1040.84" y2="412.0" stroke="#000" stroke-width="1.6"/>
<line x1="1078.12" y1="405.0" x2="1078.12" y2="412.0" stroke="#000" stroke-width="1.6"/>
<text x="1062.66" y="428.00" font-size="10.21" textLength="30.92" lengthAdjust="spacingAndGlyphs" fill="#000">40000</text>
<line x1="1115.40" y1="405.0" x2="1115.40" y2="412.0" stroke="#000" stroke-width="1.6"/>
<line x1="1152.68" y1="405.0" x2="1152.68" y2="412.0" stroke="#000" stroke-width="1.6"/>
<text x="1137.22" y="428.00" font-size="10.21" textLength="30.92" lengthAdjust="spacingAndGlyphs" fill="#000">60000</text>
<line x1="904.0" y1="405.00" x2="911.0" y2="405.00" stroke="#000" stroke-width="1.6"/>
<text x="890.42" y="408.90" font-size="10.21" textLength="6.18" lengthAdjust="spacingAndGlyphs" fill="#000">0</text>
<line x1="904.0" y1="371.74" x2="911.0" y2="371.74" stroke="#000" stroke-width="1.6"/>
<text x="890.42" y="375.64" font-size="10.21" textLength="6.18" lengthAdjust="spacingAndGlyphs" fill="#000">2</text>
<line x1="904.0" y1="338.48" x2="911.0" y2="338.48" stroke="#000" stroke-width="1.6"/>
<text x="890.42" y="342.38" font-size="10.21" textLength="6.18" lengthAdjust="spacingAndGlyphs" fill="#000">4</text>
<line x1="904.0" y1="305.22" x2="911.0" y2="305.22" stroke="#000" stroke-width="1.6"/>
<text x="890.42" y="309.12" font-size="10.21" textLength="6.18" lengthAdjust="spacingAndGlyphs" fill="#000">6</text>
<text x="1030.59" y="446.00" font-size="10.94" textLength="34.83" lengthAdjust="spacingAndGlyphs" fill="#000">counts</text>
<g transform="translate(877.90,345.00) rotate(-90)"><text x="-35.73" y="0" font-size="10.94" textLength="71.46" lengthAdjust="spacingAndGlyphs" fill="#000">log frequency</text></g>
<g transform="translate(1193.60,349.30) rotate(90)"><text x="-40.16" y="0" font-size="10.94" textLength="80.33" lengthAdjust="spacingAndGlyphs" fill="#000">histogram (full)</text></g>
<text x="987.32" y="576.70" font-size="10.94" textLength="117.97" lengthAdjust="spacingAndGlyphs" fill="#000">cut in x not configured</text>
<text x="987.32" y="750.70" font-size="10.94" textLength="117.97" lengthAdjust="spacingAndGlyphs" fill="#000">cut in y not configured</text>
</svg>
</body></html>
